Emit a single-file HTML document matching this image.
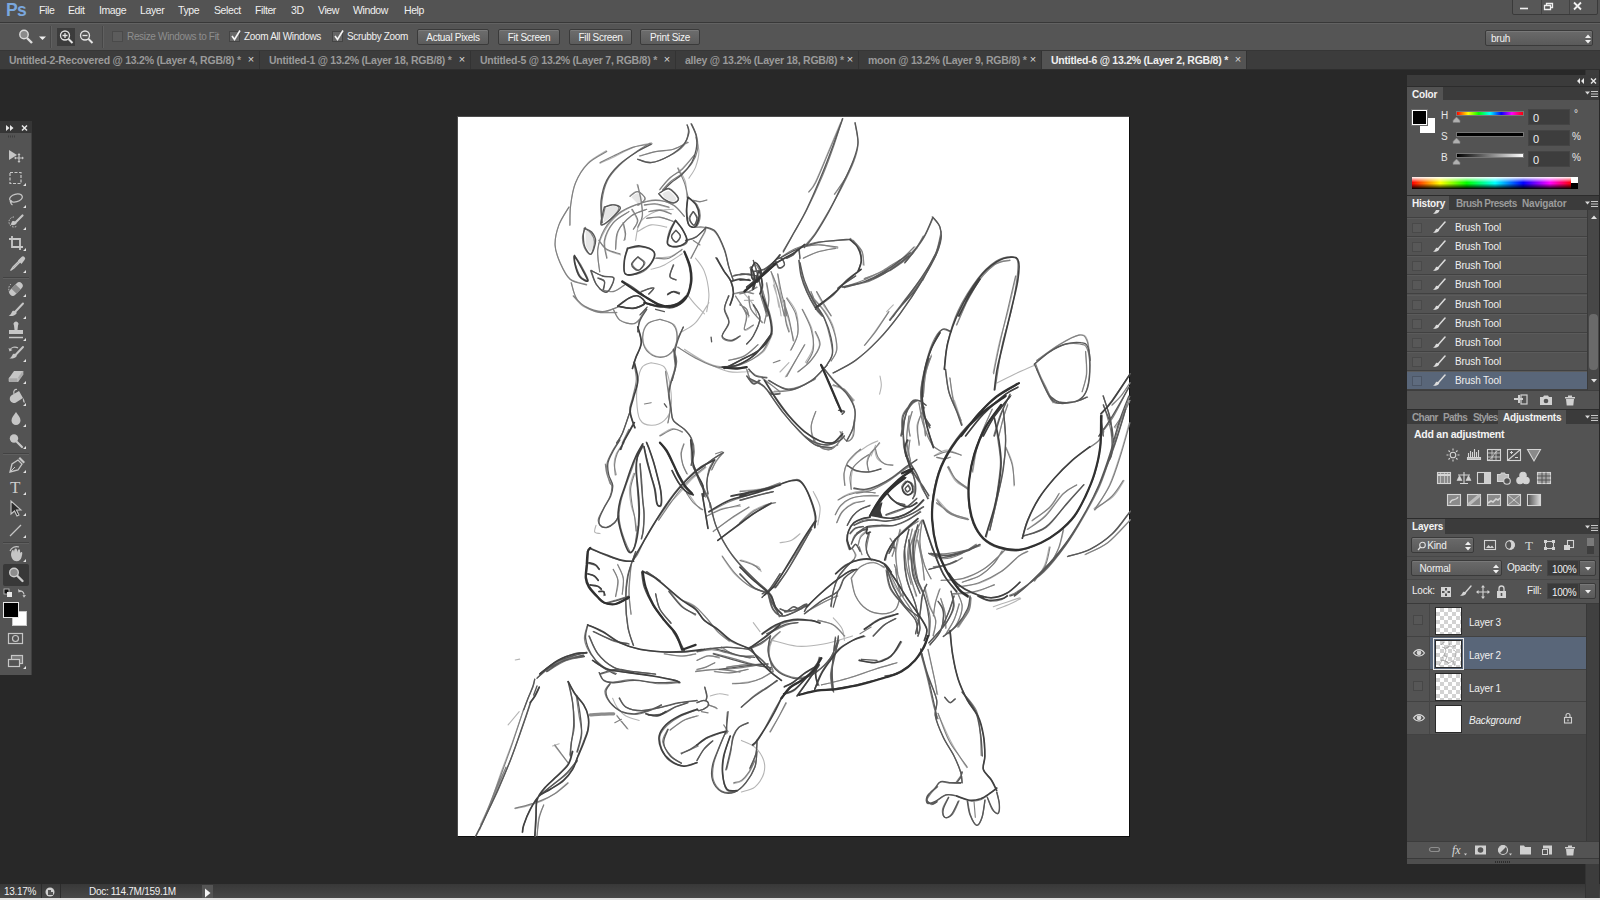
<!DOCTYPE html>
<html><head><meta charset="utf-8"><title>Ps</title>
<style>
*{box-sizing:border-box;margin:0;padding:0}
html,body{width:1600px;height:900px;overflow:hidden;background:#282828;font-family:"Liberation Sans",sans-serif;font-size:11px;color:#e6e6e6}
.a{position:absolute}
svg{position:absolute;overflow:visible}
#menubar{left:0;top:0;width:1600px;height:23px;background:#535353;border-bottom:1px solid #383838}
#menubar span{position:absolute;top:4px;font-size:10.5px;letter-spacing:-0.4px;color:#f0f0f0}
#optbar{left:0;top:23px;width:1600px;height:28px;background:#555;border-top:1px solid #626262;border-bottom:1px solid #363636}
#tabbar{left:0;top:51px;width:1600px;height:19px;background:#3c3c3c;border-bottom:1px solid #2e2e2e}
.tab{position:absolute;top:0;height:18px;font-size:10.5px;letter-spacing:-0.24px;font-weight:bold;color:#9a9a9a;padding:3px 0 0 9px;border-right:1px solid #333;white-space:nowrap}
.tab.on{background:#535353;color:#f0f0f0}
.tab i{position:absolute;right:5px;top:2px;font-style:normal;font-weight:normal;font-size:11px;color:#d8d8d8}
.btn{position:absolute;top:5px;height:16px;border:1px solid #3a3a3a;border-radius:2px;background:linear-gradient(#6d6d6d,#5c5c5c);color:#f4f4f4;font-size:10px;letter-spacing:-0.3px;text-align:center;padding-top:1.5px;box-shadow:inset 0 1px 0 #7c7c7c;white-space:nowrap}
.cb{position:absolute;top:7px;width:11px;height:11px;background:#666;border:1px solid #444}
.lbl{position:absolute;top:7px;font-size:10px;letter-spacing:-0.33px;color:#f0f0f0;white-space:nowrap}
#canvas{left:457px;top:116px;width:673px;height:721px;background:#fff;border:1px solid;border-color:#4c4c4c #0e0e0e #0e0e0e #4c4c4c}
#statusbar{left:0;top:884px;width:1600px;height:14px;background:linear-gradient(#383838,#484848)}
#botline{left:0;top:898px;width:1600px;height:2px;background:#e4e4e4}
#tools{left:0;top:121px;width:32px;height:554px;background:#535353;border-right:1px solid #404040}
#toolshead{left:0;top:0;width:32px;height:12px;background:#363636}
.sep{position:absolute;left:3px;width:26px;height:1px;background:#444;border-bottom:1px solid #5e5e5e;height:2px}
.tri{position:absolute;width:0;height:0;border-left:3px solid transparent;border-bottom:3px solid #e0e0e0}
#vsb{left:1585px;top:70px;width:14px;height:828px;background:#3c3c3c;border-left:1px solid #333}
#rp{left:1407px;top:75px;width:192px;height:789px;background:#535353;overflow:hidden}
.phead{position:absolute;left:0;width:193px;background:#3b3b3b}
.ptab{position:absolute;top:0;height:15px;font-size:10px;letter-spacing:-0.2px;font-weight:bold;color:#9c9c9c;padding:2px 0 0 5px;white-space:nowrap}
.ptab.on{background:#535353;color:#f4f4f4}
.inp{position:absolute;background:#3d3d3d;border:1px solid #444;color:#f0f0f0;font-size:11px;padding:2px 0 0 4px}
.t{position:absolute;white-space:nowrap}
.hrow{position:absolute;left:0;width:180px;height:19px;border-bottom:1px solid #414141;border-top:1px solid #5b5b5b}
.hrow b{position:absolute;left:5px;top:4px;width:10px;height:10px;border:1px solid #494949;background:#585858}
.hrow span{position:absolute;left:48px;top:3px;font-size:10px;letter-spacing:-0.1px;color:#f0f0f0}
.lrow{position:absolute;left:0;width:180px;height:33px;border-bottom:1px solid #424242}
.lrow .eye{position:absolute;left:0;top:0;width:23px;height:32px;border-right:1px solid #464646}
.lrow .th{position:absolute;left:28px;top:3px;width:26.5px;height:28px;border:1px solid #2a2a2a;background:#fff}
.lrow .chk{background-color:#fff;background-image:linear-gradient(45deg,#d2d2d2 25%,transparent 25%,transparent 75%,#d2d2d2 75%),linear-gradient(45deg,#d2d2d2 25%,transparent 25%,transparent 75%,#d2d2d2 75%);background-size:8px 8px;background-position:0 0,4px 4px}
.lrow span{position:absolute;left:62px;top:12.5px;font-size:10px;letter-spacing:-0.2px;color:#f0f0f0}
.dd{position:absolute;height:16px;border:1px solid #3a3a3a;border-radius:2px;background:linear-gradient(#6a6a6a,#5a5a5a);box-shadow:inset 0 1px 0 #787878;color:#f0f0f0;font-size:10px;letter-spacing:-0.2px;padding:2px 0 0 5px}
</style></head><body>
<div id="menubar" class="a">
<span style="left:6px;top:0px;font-size:17.5px;font-weight:bold;color:#7aa7de;letter-spacing:-0.6px">Ps</span>
<span style="left:39px">File</span><span style="left:68px">Edit</span><span style="left:99px">Image</span><span style="left:140px">Layer</span><span style="left:178px">Type</span><span style="left:214px">Select</span><span style="left:255px">Filter</span><span style="left:291px">3D</span><span style="left:318px">View</span><span style="left:353px">Window</span><span style="left:404px">Help</span>
<div class="a" style="left:1512px;top:-1px;width:86px;height:16px;background:#575757;border:1px solid #3a3a3a;border-radius:0 0 2px 2px"></div><div class="a" style="left:1541px;top:0;width:1px;height:14px;background:#424242"></div><div class="a" style="left:1569px;top:0;width:1px;height:14px;background:#424242"></div><svg style="left:1510px;top:-1.500px" width="90" height="22" viewBox="0 0 90 22"><g fill="none" stroke="#f0f0f0" stroke-width="1.6"><path d="M10 9.5h8"/><path d="M34.5 6.5h6v4h-6z M36.5 6.5v-2h6v4h-2" stroke-width="1.3"/><path d="M64 3.5l7 7M71 3.5l-7 7" stroke-width="1.8"/></g></svg>
</div>
<div id="optbar" class="a">
<svg style="left:0;top:0" width="110" height="26" viewBox="0 0 110 26"><g fill="none" stroke="#dcdcdc" stroke-width="1.4"><circle cx="24" cy="10.500" r="4.200" fill="#8a8a8a"/><path d="M27 14l5 5" stroke-width="2.400"/></g><path d="M39 12.500h7l-3.500 3.500z" fill="#f0f0f0"/><path d="M50.500 2v22" stroke="#474747"/><path d="M51.500 2v22" stroke="#606060"/><rect x="57" y="4" width="18" height="18" fill="#3c3c3c"/><g fill="none" stroke="#e4e4e4" stroke-width="1.300"><circle cx="65" cy="11.500" r="4.500"/><path d="M62.500 11.500h5M65 9v5"/><path d="M68.500 15l4 4" stroke-width="2"/><circle cx="85" cy="11.500" r="4.500"/><path d="M82.500 11.500h5"/><path d="M88.500 15l4 4" stroke-width="2"/></g><path d="M102.500 2v22" stroke="#474747"/><path d="M103.500 2v22" stroke="#606060"/></svg>
<div class="cb" style="left:112px;background:#5c5c5c;border-color:#4a4a4a"></div><div class="lbl" style="left:127px;color:#8e8e8e">Resize Windows to Fit</div>
<div class="cb" style="left:229px"></div><svg style="left:229px;top:5px" width="14" height="14"><path d="M3 7l2.500 3.500L11 1.500" fill="none" stroke="#f4f4f4" stroke-width="1.600"/></svg><div class="lbl" style="left:244px">Zoom All Windows</div>
<div class="cb" style="left:332px"></div><svg style="left:332px;top:5px" width="14" height="14"><path d="M3 7l2.500 3.500L11 1.500" fill="none" stroke="#f4f4f4" stroke-width="1.600"/></svg><div class="lbl" style="left:347px">Scrubby Zoom</div>
<div class="btn" style="left:417px;width:72px">Actual Pixels</div>
<div class="btn" style="left:498px;width:62px">Fit Screen</div>
<div class="btn" style="left:569px;width:63px">Fill Screen</div>
<div class="btn" style="left:640px;width:60px">Print Size</div>
<div class="dd" style="left:1485px;top:6px;width:108px;height:16px">bruh<svg style="left:99px;top:3px" width="6" height="10"><path d="M0 4l3-3.500L6 4zM0 6l3 3.500L6 6z" fill="#f0f0f0"/></svg></div>
</div>
<div id="tabbar" class="a">
<div class="tab" style="left:0;width:260px">Untitled-2-Recovered @ 13.2% (Layer 4, RGB/8) *<i>×</i></div>
<div class="tab" style="left:260px;width:211px">Untitled-1 @ 13.2% (Layer 18, RGB/8) *<i>×</i></div>
<div class="tab" style="left:471px;width:205px">Untitled-5 @ 13.2% (Layer 7, RGB/8) *<i>×</i></div>
<div class="tab" style="left:676px;width:183px">alley @ 13.2% (Layer 18, RGB/8) *<i>×</i></div>
<div class="tab" style="left:859px;width:183px">moon @ 13.2% (Layer 9, RGB/8) *<i>×</i></div>
<div class="tab on" style="left:1042px;width:205px">Untitled-6 @ 13.2% (Layer 2, RGB/8) *<i>×</i></div>
</div>
<div id="statusbar" class="a">
<div class="t" style="left:4px;top:2px;font-size:10px;letter-spacing:-0.3px;color:#f0f0f0">13.17%</div>
<div class="a" style="left:41px;top:0;width:1px;height:15px;background:#2c2c2c"></div>
<svg style="left:44px;top:2px" width="12" height="12"><circle cx="6" cy="6" r="4.500" fill="#d0d0d0"/><path d="M4 4h3v2h2v3H4z" fill="#555"/></svg>
<div class="a" style="left:60px;top:0;width:1px;height:15px;background:#2c2c2c"></div>
<div class="t" style="left:89px;top:2px;font-size:10px;letter-spacing:-0.3px;color:#f0f0f0">Doc: 114.7M/159.1M</div>
<div class="a" style="left:202px;top:1px;width:11px;height:14px;background:#555"></div>
<svg style="left:204px;top:4px" width="8" height="10"><path d="M1 0.500l5.500 4.500L1 9.500z" fill="#f4f4f4"/></svg>
</div>
<div id="botline" class="a"></div>
<div id="canvas" class="a"><svg style="left:0;top:0" width="671" height="719" viewBox="0 0 671 719" fill="none" stroke-linecap="round" stroke-linejoin="round" style="filter:blur(0.4px)">
<g fill="#e6e6e6" stroke="none"><path d="M147.6 91.2C148.9 90.9 153.1 88.9 155.3 89.0C157.6 89.1 161.3 90.0 160.9 91.9C160.5 93.7 155.7 97.8 153.1 100.1C150.5 102.4 146.6 104.7 145.3 105.7Z"/><path d="M127.6 113.4C128.5 113.9 131.7 114.6 133.1 116.3C134.5 118.1 136.1 120.9 136.0 123.9C135.9 126.9 134.0 133.7 132.7 134.6C131.3 135.4 128.6 129.9 127.8 129.0Z"/><path d="M204.2 76.8C205.3 76.3 208.6 73.4 210.9 74.1C213.2 74.9 217.3 79.5 218.0 81.2C218.7 83.0 216.7 84.6 214.9 84.6C213.0 84.6 208.2 81.8 206.9 81.2Z"/><path d="M173.1 80.1C174.2 79.5 177.9 76.1 179.8 76.3C181.7 76.6 184.7 79.9 184.7 81.7C184.7 83.4 180.6 85.9 179.8 86.8Z"/></g>
<g stroke="#b4b4b4" stroke-width="1.1"><path d="M111.7 108.4C111.9 105.2 111.6 95.9 112.6 88.9C113.5 81.8 114.5 73.0 117.4 65.9C120.3 58.8 124.6 51.5 129.8 46.1C134.9 40.8 145.2 35.8 148.3 33.7M111.0 90.0C109.3 93.1 103.1 102.0 100.8 108.4C98.5 114.8 96.7 122.2 97.0 128.5C97.3 134.8 100.0 140.5 102.5 146.1C105.1 151.7 107.9 158.4 112.2 161.9C116.5 165.4 125.7 166.4 128.4 167.3M113.5 165.8C114.5 168.8 115.7 178.9 119.7 183.7C123.6 188.4 130.7 192.3 137.3 194.2C143.8 196.2 155.3 195.2 158.9 195.4M142.1 46.2C144.5 45.1 150.9 42.3 156.4 39.7C161.9 37.1 169.0 32.7 175.2 30.4C181.4 28.1 190.5 26.6 193.6 25.9M181.4 38.9C184.0 38.2 191.1 35.8 196.6 34.7C202.1 33.7 208.9 34.1 214.5 32.5C220.2 31.0 227.9 26.7 230.5 25.6M201.4 72.9C203.1 71.0 207.8 65.1 211.6 61.5C215.4 57.9 220.3 55.2 224.4 51.3C228.5 47.4 234.3 40.3 236.3 38.1M220.1 50.8C221.3 53.1 225.9 59.5 227.3 64.5C228.7 69.4 228.5 77.7 228.7 80.3M237.6 20.1C238.1 22.5 240.9 29.6 240.9 34.6C240.9 39.6 239.2 45.7 237.6 50.1C235.9 54.6 232.0 59.4 230.9 61.2M235.5 83.2C236.5 83.5 239.3 84.9 241.6 84.9C243.9 84.8 247.9 83.3 249.1 83.0M171.9 79.0C173.1 78.3 176.4 74.0 179.0 74.5C181.6 74.9 187.2 79.5 187.5 81.8C187.8 84.1 181.8 87.2 180.7 88.3M141.9 154.9C141.5 151.2 139.0 139.5 139.8 132.6C140.7 125.6 143.7 118.9 147.1 113.1C150.5 107.3 155.2 101.9 160.3 97.7C165.4 93.5 171.6 90.6 177.7 88.1C183.9 85.6 191.2 82.8 197.4 82.8C203.7 82.8 210.4 85.5 215.2 88.3C220.0 91.0 224.5 97.6 226.4 99.4M149.2 141.0C148.8 138.1 145.9 129.5 147.0 123.6C148.1 117.6 151.8 110.1 155.7 105.3C159.7 100.5 168.4 96.4 170.9 94.6M157.6 132.1C158.2 128.9 158.2 118.5 160.8 113.0C163.5 107.5 168.9 102.4 173.5 98.9C178.0 95.5 185.7 93.5 188.2 92.5M177.6 123.4C178.3 120.5 178.7 110.5 182.0 105.7C185.3 100.9 192.0 96.8 197.6 94.6C203.1 92.3 212.4 92.7 215.3 92.3M186.3 88.1C188.3 88.0 193.9 87.0 198.0 87.4C202.2 87.9 209.1 90.2 211.3 90.8M191.7 94.3C193.5 94.0 199.2 92.2 202.8 92.6C206.4 93.1 211.5 96.2 213.2 96.9M188.4 101.5C190.7 101.3 197.4 99.9 201.8 100.4C206.2 100.8 212.7 103.5 214.9 104.1M179.8 114.6C182.0 113.4 188.3 108.6 193.1 107.9C197.9 107.1 206.1 109.7 208.7 110.1M164.9 105.5C165.2 107.4 166.6 114.3 167.0 117.2C167.4 120.0 167.2 121.7 167.3 122.6M179.1 67.3C179.7 69.9 181.9 77.6 182.8 82.9C183.7 88.2 185.0 94.4 184.5 99.0C184.1 103.7 180.8 108.8 180.0 110.8M173.5 92.4C174.5 94.2 178.9 100.2 179.2 103.5C179.6 106.7 176.3 110.6 175.7 112.1M141.1 123.2C142.3 124.7 144.6 130.1 148.2 132.5C151.8 135.0 160.3 137.0 162.7 137.9M193.1 152.3C195.3 151.6 201.3 150.5 206.4 147.9C211.6 145.3 221.3 138.6 224.2 136.8M198.1 140.7C200.3 140.5 207.4 141.0 211.6 139.8C215.8 138.6 221.5 134.4 223.4 133.4M166.3 168.2C164.4 169.2 159.1 173.7 155.1 174.4C151.2 175.1 144.6 172.6 142.5 172.3M237.4 110.4C239.1 110.7 246.9 109.8 247.7 112.0C248.5 114.3 244.6 119.1 242.1 124.0C239.6 128.9 234.3 138.3 232.7 141.2M237.6 141.2C239.0 143.4 244.2 148.6 246.4 154.6C248.7 160.5 250.5 170.1 250.9 176.8C251.3 183.4 249.0 191.6 248.7 194.6M228.7 176.8C230.1 178.6 234.6 184.6 237.6 187.9C240.5 191.2 245.0 195.3 246.4 196.8M274.5 177.5C276.3 177.2 281.8 175.5 285.4 175.3C288.9 175.1 294.1 176.2 295.9 176.3M277.4 179.2C278.8 181.4 283.6 189.1 285.9 192.3C288.2 195.6 290.2 197.7 291.1 198.7M302.3 176.4C302.9 178.8 305.0 186.5 306.2 190.4C307.3 194.2 308.5 197.9 309.0 199.4M313.1 154.6C313.9 157.5 316.3 166.4 317.6 172.3C318.9 178.3 320.3 187.1 320.9 190.1M286.4 176.8C287.9 178.6 293.3 184.4 295.3 187.9C297.4 191.4 298.1 196.2 298.7 197.9M382.8 5.0C380.7 9.8 374.9 23.8 370.6 33.9C366.4 43.9 360.6 58.5 357.2 65.3C353.9 72.2 351.7 73.4 350.6 75.0M397.5 38.8C396.0 42.1 392.2 52.4 388.8 58.8C385.4 65.3 378.8 74.3 376.8 77.4M342.2 130.0C345.1 129.5 353.3 126.9 359.5 127.1C365.8 127.4 376.4 130.8 379.8 131.5M345.4 141.1C347.8 140.0 354.8 136.4 360.0 134.8C365.2 133.2 373.8 131.9 376.5 131.3M395.1 123.7C396.5 125.4 401.7 129.9 403.6 134.0C405.4 138.0 405.9 145.7 406.3 148.1M352.9 174.7C353.7 176.6 356.0 182.7 357.6 186.5C359.2 190.3 361.8 195.6 362.6 197.5M358.5 174.8C359.7 177.1 363.4 185.0 365.9 188.9C368.3 192.8 372.0 196.7 373.3 198.3M304.5 172.3C305.1 175.0 307.2 183.9 308.3 188.2C309.3 192.5 310.3 196.6 310.7 198.3M313.4 155.2C314.5 158.1 318.0 165.2 320.1 172.4C322.2 179.7 325.2 194.4 326.2 198.8M315.3 167.9C316.3 170.9 319.6 180.5 320.9 185.7C322.2 190.9 322.7 196.8 323.1 199.0M281.6 176.9C283.1 176.6 287.3 175.9 290.3 174.8C293.2 173.7 297.8 171.0 299.3 170.3M281.8 187.8C282.9 188.5 287.0 189.8 288.5 191.9C290.0 194.0 290.4 198.9 290.8 200.3M286.4 183.4L295.3 183.4M406.2 161.6C409.0 160.5 417.4 157.8 422.9 155.1C428.5 152.4 433.7 149.6 439.4 145.4C445.1 141.1 454.0 132.3 456.9 129.7M483.5 114.8C482.6 118.4 481.3 128.5 478.1 136.6C474.8 144.7 466.3 159.0 464.0 163.4M428.7 194.6L435.3 187.9M465.7 119.2C463.9 122.1 458.9 132.0 454.7 136.7C450.6 141.4 444.6 144.6 440.7 147.5C436.9 150.4 433.1 152.8 431.5 153.9M459.5 130.8C457.2 132.9 450.4 140.2 445.7 143.6C441.0 147.0 433.8 149.9 431.4 151.2M558.0 159.1C556.7 164.8 553.1 182.4 550.3 193.4C547.6 204.3 544.0 214.6 541.5 225.0C539.0 235.3 536.2 250.5 535.2 255.6M498.3 207.9C501.3 201.7 509.5 180.9 515.9 170.9C522.4 160.8 531.0 151.9 537.0 147.3C543.0 142.7 549.4 143.7 551.9 143.0M491.7 260.6C492.3 264.3 493.9 275.6 495.7 282.9C497.6 290.2 501.6 300.8 502.7 304.4M473.4 237.9C472.5 240.9 469.3 248.8 467.9 255.9C466.5 263.0 465.7 276.4 465.2 280.5M463.2 285.3C463.5 288.0 464.4 295.7 465.1 301.3C465.7 306.8 466.8 315.7 467.2 318.6M454.0 294.6C453.4 296.7 450.5 303.3 450.2 307.4C449.9 311.5 451.9 317.3 452.2 319.3M540.6 320.0C541.4 317.0 543.5 307.9 545.0 302.4C546.5 296.9 548.9 289.5 549.6 286.9M545.3 296.8L547.6 319.0M578.9 243.3C582.7 240.6 594.5 231.5 601.6 227.3C608.7 223.1 616.9 218.7 621.6 217.9C626.2 217.2 627.7 218.6 629.4 222.9C631.1 227.2 631.5 240.1 631.9 243.6M578.6 251.7C580.2 254.7 585.2 264.2 587.9 269.8C590.6 275.5 593.7 283.2 594.9 285.9M627.6 234.4C627.7 238.2 628.9 250.4 628.3 257.2C627.7 263.9 624.7 271.9 624.0 274.9M538.7 266.1C541.6 264.6 550.1 260.2 556.4 257.2C562.7 254.3 573.1 249.8 576.4 248.3M653.8 288.3C655.3 286.7 659.6 282.7 662.6 279.0C665.6 275.3 670.4 268.2 671.9 266.0M657.2 311.1C658.6 308.9 663.1 302.4 665.5 297.7C667.9 293.1 670.7 285.7 671.8 283.3M115.3 178.9C117.0 180.6 120.7 186.7 125.5 189.4C130.3 192.1 138.3 195.0 144.2 195.1C150.1 195.1 158.0 190.6 160.7 189.7M154.9 191.5C156.1 193.4 158.4 200.3 161.8 202.9C165.2 205.4 171.8 207.0 175.3 206.8C178.9 206.7 181.8 202.6 183.1 201.8M202.3 202.5C204.6 203.3 213.2 204.4 216.1 207.7C218.9 210.9 219.6 217.3 219.2 221.9C218.9 226.6 216.7 232.5 213.7 235.5C210.8 238.5 205.7 240.2 201.6 239.8C197.6 239.5 192.3 236.6 189.5 233.3C186.6 230.0 184.7 224.5 184.6 220.0C184.6 215.6 186.6 209.7 189.4 206.7C192.3 203.8 199.6 203.1 201.6 202.4M193.1 245.7C195.3 246.4 203.3 246.4 206.4 250.1C209.6 253.8 210.9 261.2 212.0 267.9C213.1 274.6 214.0 284.2 213.1 290.1C212.2 296.0 209.8 300.4 206.4 303.4C203.1 306.5 197.2 308.5 193.1 308.3C189.0 308.2 184.4 306.7 182.0 302.6C179.6 298.4 179.0 290.0 178.7 283.4C178.3 276.9 178.9 269.0 179.8 263.4C180.7 257.9 182.0 253.1 184.2 250.1C186.4 247.1 191.6 246.4 193.1 245.7M207.7 253.8C208.1 256.8 209.5 265.8 210.3 271.7C211.1 277.7 212.4 283.8 212.3 289.6C212.2 295.3 210.2 303.4 209.8 306.1M201.6 318.4C203.8 317.2 210.8 312.1 214.6 311.6C218.4 311.2 223.0 314.8 224.6 315.4M282.2 373.9C285.9 373.5 298.0 372.8 304.5 371.6C311.1 370.4 318.8 367.6 321.7 366.8M219.6 230.3C222.5 231.9 230.3 236.9 236.9 240.0C243.4 243.1 251.3 247.9 258.8 249.0C266.3 250.2 274.2 249.3 281.8 247.0C289.5 244.8 299.3 240.3 304.7 235.4C310.0 230.6 312.4 220.9 313.9 217.9M224.2 214.6C226.4 213.1 233.1 210.5 237.6 205.7C242.0 200.9 248.7 189.0 250.9 185.7M226.4 232.3C230.1 234.6 241.3 242.0 248.7 245.7C256.1 249.4 263.5 253.1 270.9 254.6C278.3 256.0 289.4 254.6 293.1 254.6M281.5 185.3C282.7 187.3 287.4 193.0 288.2 197.6C289.0 202.2 285.3 211.2 286.5 213.0C287.7 214.8 293.8 209.2 295.3 208.5M288.9 252.7C289.6 254.6 291.2 262.0 293.3 264.0C295.4 266.0 300.0 264.6 301.4 264.8M304.0 260.7C305.4 261.8 309.7 264.7 312.7 267.1C315.7 269.5 320.5 273.9 322.1 275.3M290.6 179.2C291.0 181.4 290.5 187.9 292.9 192.3C295.3 196.7 303.0 203.5 305.0 205.7M353.3 178.7C355.5 181.2 362.9 188.5 366.7 193.9C370.4 199.3 373.8 204.6 375.8 211.1C377.7 217.6 378.8 227.5 378.4 233.0C378.0 238.5 374.1 242.1 373.2 244.0M319.7 157.2C320.3 160.9 321.3 172.5 323.1 179.9C324.8 187.4 328.2 194.7 330.3 202.0C332.5 209.2 335.0 219.8 335.9 223.4M329.2 180.7C330.8 183.2 336.7 189.5 338.4 195.6C340.1 201.7 340.6 211.0 339.6 217.3C338.6 223.5 333.6 230.7 332.4 233.4M326.4 183.7C326.6 187.0 327.1 198.1 328.0 203.2C328.9 208.4 331.0 212.7 331.7 214.6M344.8 192.8C346.4 196.1 352.4 206.2 354.1 212.6C355.7 219.1 355.7 226.2 354.6 231.6C353.5 237.1 348.6 243.1 347.4 245.3M357.0 214.7C357.8 217.0 362.2 223.4 361.4 228.3C360.6 233.2 355.9 239.8 352.4 244.2C348.8 248.6 342.3 252.8 340.3 254.5M347.0 227.4C345.5 230.0 341.1 237.8 337.8 243.3C334.6 248.7 329.1 257.2 327.3 260.0M308.3 166.6C308.7 169.5 310.9 178.0 310.5 184.3C310.2 190.7 307.2 201.4 306.5 204.8M330.9 245.7L322.0 255.0M270.6 243.4C273.2 242.6 281.1 241.4 286.1 238.8C291.0 236.2 297.9 229.4 300.2 227.5M316.4 274.1C319.6 273.8 329.2 274.0 336.0 272.1C342.7 270.2 353.4 264.1 356.8 262.5M430.3 195.4C428.1 198.7 420.6 209.4 416.8 214.8C412.9 220.2 408.8 225.6 407.2 227.8M374.5 268.6C376.4 269.3 381.9 270.2 385.6 272.7C389.2 275.1 394.6 281.5 396.4 283.2M358.0 294.3C357.2 296.9 353.3 304.7 353.3 309.8C353.3 314.9 355.0 321.1 358.0 325.0C360.9 328.8 367.1 333.0 371.0 332.9C375.0 332.8 379.6 327.2 381.7 324.3C383.8 321.4 383.3 316.8 383.7 315.3M382.7 315.2C383.7 316.7 387.0 323.7 388.9 324.3C390.9 324.9 393.3 322.5 394.5 318.9C395.6 315.3 395.7 305.5 395.9 302.8M422.0 259.0C422.2 260.5 423.4 264.9 423.3 267.9C423.3 270.9 421.9 275.7 421.6 277.2M466.8 290.5C465.5 293.4 459.9 302.0 459.0 308.2C458.2 314.3 461.2 324.1 461.6 327.3M451.4 298.5C450.9 302.3 449.0 314.7 448.7 321.4C448.5 328.2 449.7 336.1 449.9 339.1M397.6 336.8C399.8 335.3 407.2 330.0 410.9 327.9C414.6 325.7 418.3 324.6 419.8 323.9M413.1 339.0L417.6 328.3M548.0 329.9C549.0 332.7 553.2 340.3 554.5 346.8C555.8 353.4 555.8 365.3 556.0 369.0M534.2 292.0C532.0 297.2 524.2 312.4 520.9 322.9C517.7 333.5 515.8 350.0 514.8 355.4M569.1 412.4C572.0 410.2 580.9 404.9 586.8 399.0C592.8 393.0 599.6 381.9 604.9 376.7C610.1 371.5 616.1 369.4 618.4 368.0M574.0 404.0C576.8 401.9 586.1 395.6 590.7 391.0C595.2 386.4 599.6 378.8 601.4 376.3M460.9 285.5C461.8 289.1 463.7 300.3 466.0 307.4C468.2 314.4 471.6 323.3 474.5 327.9C477.4 332.4 482.1 333.6 483.6 334.8M496.4 283.4C497.2 285.7 499.6 292.7 500.9 296.8C502.2 300.9 503.9 306.0 504.4 307.9M476.2 338.8C478.3 337.9 484.1 333.2 488.6 333.1C493.1 333.0 500.9 337.4 503.4 338.2M489.6 350.3C491.0 352.6 494.4 360.8 497.9 364.4C501.4 368.0 508.5 370.6 510.6 371.9M478.5 386.5C481.2 388.2 489.4 394.5 494.7 396.9C499.9 399.4 507.3 400.6 509.8 401.3M483.5 463.2C487.1 462.9 498.4 463.5 505.4 461.6C512.5 459.8 519.9 455.8 525.8 452.1C531.7 448.4 537.3 442.7 540.8 439.4C544.4 436.1 546.3 433.4 547.4 432.2M498.9 470.1C502.8 469.4 514.5 468.6 521.9 466.0C529.4 463.4 537.3 458.8 543.9 454.3C550.4 449.8 557.1 442.3 561.3 438.9C565.5 435.6 567.9 434.9 569.2 434.1M494.4 477.7C498.1 477.2 509.8 476.9 516.7 475.2C523.7 473.5 533.0 468.8 536.3 467.6M671.1 306.1C669.7 311.2 665.8 326.2 662.5 336.5C659.2 346.9 655.5 358.9 651.3 368.3C647.1 377.6 639.5 388.8 637.2 392.9M666.1 363.7C664.2 366.4 659.8 375.3 654.8 379.9C649.8 384.5 639.1 389.5 636.0 391.4M672.1 402.6C668.3 406.4 657.3 419.7 649.7 425.6C642.2 431.4 630.7 435.8 626.8 437.8M605.7 413.1C604.9 416.1 603.3 425.1 601.0 430.9C598.7 436.6 593.4 444.8 591.8 447.6M591.1 429.8C590.4 432.8 589.1 442.2 586.7 447.9C584.3 453.7 578.3 461.5 576.7 464.3M631.4 330.5C632.9 329.4 638.0 326.8 640.5 324.1C642.9 321.4 645.2 316.0 646.1 314.4M432.6 421.6C433.3 423.1 436.8 427.6 437.1 430.5C437.3 433.3 434.4 437.4 433.9 438.8M454.3 411.7C453.6 415.4 450.7 426.3 450.3 433.8C449.9 441.4 450.5 449.3 451.9 456.9C453.2 464.6 457.1 475.8 458.1 479.6M460.5 412.0C459.7 416.4 455.5 428.9 455.6 438.4C455.7 447.9 460.3 463.9 461.2 469.0M436.4 447.5C437.5 450.9 441.8 462.4 443.3 467.7C444.8 473.1 444.9 477.7 445.2 479.7M430.6 456.7C431.7 458.9 434.9 466.2 437.3 470.0C439.6 473.8 443.5 477.8 444.7 479.3M173.2 448.1C172.9 452.5 171.3 466.3 171.2 474.5C171.2 482.7 172.7 493.4 173.0 497.2M248.7 399.1C251.3 397.8 258.7 393.2 264.3 391.6C270.0 389.9 279.5 389.6 282.6 389.3M255.1 414.3C258.2 412.2 267.3 405.6 273.3 401.6C279.3 397.6 288.1 392.1 291.1 390.2M283.2 442.9C285.3 443.6 292.8 445.9 295.7 447.5C298.7 449.2 300.2 452.0 301.1 452.9M264.3 439.8C266.5 442.8 272.5 452.7 277.3 457.7C282.1 462.7 288.5 467.1 293.3 469.9C298.1 472.7 304.1 473.6 306.3 474.4M322.3 514.8C320.9 516.4 315.8 520.3 313.9 524.1C312.1 527.9 311.1 532.6 311.2 537.6C311.4 542.7 314.4 551.7 315.1 554.5M155.1 452.5C156.0 454.4 159.9 459.6 160.3 464.1C160.8 468.6 158.1 477.1 157.7 479.6M159.6 447.2C160.5 449.5 164.4 456.1 165.2 461.1C166.0 466.2 164.5 474.6 164.3 477.3M223.8 483.0C225.9 484.0 232.6 485.9 236.7 488.9C240.8 491.9 244.6 496.8 248.6 501.3C252.5 505.7 256.5 511.8 260.4 515.7C264.3 519.7 270.1 523.2 272.0 524.7M206.0 536.9C209.0 537.3 218.4 539.1 223.7 539.1C229.0 539.2 235.5 537.5 237.9 537.1M238.0 553.9C241.7 553.6 253.1 552.1 260.4 552.2C267.7 552.4 278.3 554.6 281.9 555.1M268.9 550.3C271.7 549.9 279.7 548.2 286.1 547.8C292.6 547.3 303.9 547.6 307.5 547.6M286.7 376.6C289.8 375.9 299.3 374.0 305.1 372.5C311.0 370.9 319.0 368.1 321.7 367.2M281.6 405.7C283.7 403.7 290.0 397.0 294.4 394.0C298.9 390.9 304.4 388.8 308.2 387.4C312.0 386.0 315.8 385.8 317.4 385.5M322.0 425.7C323.9 425.3 329.8 424.9 333.1 423.4C336.4 422.0 340.5 417.9 342.0 416.8M355.3 374.6C356.4 377.1 361.3 384.6 362.0 390.1C362.7 395.7 360.1 404.9 359.8 407.9M295.3 447.9C296.3 448.3 299.6 449.0 300.9 450.1C302.2 451.2 302.7 453.8 303.1 454.6M349.2 494.5C352.2 492.9 361.9 487.5 366.9 484.8C371.8 482.1 376.9 479.4 378.9 478.3M360.0 503.1C362.4 503.8 370.4 505.0 374.9 507.6C379.4 510.2 384.9 517.0 386.9 518.9M295.3 505.7L302.0 514.6M355.7 322.8C357.6 324.2 362.8 330.4 366.9 331.2C370.9 332.1 377.8 328.4 379.9 327.8M464.3 403.0C463.9 406.7 461.2 417.8 461.6 425.3C462.0 432.8 464.6 441.9 466.5 448.1C468.4 454.2 471.9 459.6 473.0 461.9M437.4 452.1C438.1 455.7 439.2 467.4 441.7 473.9C444.2 480.5 449.4 486.5 452.5 491.6C455.6 496.6 459.0 502.1 460.3 504.2M467.1 470.1C468.0 473.2 470.3 483.4 472.1 489.0C473.9 494.6 477.5 498.6 477.9 503.5C478.3 508.5 475.3 516.0 474.8 518.5M442.8 413.1C442.0 416.9 438.6 428.8 438.1 436.0C437.6 443.2 439.5 453.1 439.8 456.5M393.6 460.8C394.3 463.9 395.2 473.7 397.7 479.0C400.2 484.2 404.4 489.3 408.7 492.3C413.0 495.2 418.9 496.6 423.7 496.7C428.5 496.7 434.6 495.4 437.7 492.4C440.8 489.5 441.6 481.3 442.4 479.1M393.5 461.1C395.1 459.1 399.3 452.0 403.0 449.3C406.7 446.7 411.8 445.0 415.6 445.2C419.5 445.5 424.4 449.9 426.1 450.9M65.5 592.4C63.6 598.0 57.8 615.3 54.0 626.1C50.1 636.9 45.9 647.3 42.4 657.1C38.9 666.9 36.4 675.8 33.0 685.1C29.6 694.4 23.6 708.2 21.8 712.8M48.1 650.5C45.9 655.7 39.2 672.1 34.9 681.6C30.6 691.1 24.4 703.3 22.3 707.6M50.1 607.9L61.2 594.6M57.2 543.0L61.7 542.1M96.8 628.9C98.0 630.4 101.5 634.9 103.6 637.6C105.8 640.2 108.5 643.6 109.5 644.8M94.6 629.0L101.2 626.8M57.1 691.7C59.3 691.2 66.0 689.9 70.5 688.6C75.0 687.3 79.6 685.9 84.0 683.9C88.3 681.9 92.2 679.8 96.5 676.8C100.9 673.7 107.7 667.4 109.9 665.5M85.7 688.2C84.9 690.3 81.8 696.1 80.7 701.2C79.6 706.2 79.4 715.5 79.1 718.3M158.9 598.2C159.6 599.2 161.6 602.3 163.4 604.6C165.3 607.0 168.9 611.0 170.0 612.2M240.4 598.6C237.8 599.4 229.9 601.2 225.2 603.6C220.5 606.1 214.3 611.7 212.1 613.3M154.6 581.2C155.3 582.7 156.8 587.1 159.0 590.1C161.2 593.1 164.2 596.8 167.9 599.0C171.6 601.2 179.0 602.7 181.2 603.4M314.6 523.4C318.6 524.4 330.5 528.6 339.0 529.2C347.5 529.8 356.4 528.7 365.7 527.0C374.9 525.3 389.7 520.3 394.6 519.0M256.1 554.1C258.6 554.4 265.6 555.8 271.3 555.6C277.0 555.3 287.1 553.0 290.3 552.5M274.4 566.4C277.0 566.2 284.9 566.0 289.7 565.1C294.5 564.3 299.3 563.1 303.4 561.4C307.6 559.7 312.7 555.9 314.6 554.8M238.9 543.4C240.8 542.6 246.6 539.0 250.3 538.6C254.1 538.3 259.6 540.7 261.4 541.2M239.1 552.6C240.4 552.3 244.3 551.7 247.2 550.5C250.2 549.3 255.2 546.5 256.8 545.7M262.5 530.7C264.4 531.8 268.8 535.9 274.0 537.4C279.1 539.0 290.1 539.6 293.3 540.0M252.3 579.0C253.8 578.6 258.3 576.9 261.2 576.8C264.2 576.6 268.6 577.9 270.1 578.1M250.1 587.6C251.2 588.1 255.3 589.7 256.8 590.4C258.2 591.1 258.5 591.5 258.9 591.8M363.5 567.9C368.0 566.8 381.3 563.8 390.2 561.2C399.0 558.6 408.4 555.1 416.5 552.5C424.5 549.9 434.9 546.8 438.6 545.7M328.5 586.1C327.2 588.2 323.9 594.2 321.2 599.0C318.4 603.8 313.3 612.2 311.7 614.8M275.7 666.6C277.0 666.2 281.1 666.1 283.8 664.1C286.5 662.1 289.6 658.2 291.8 654.7C294.0 651.2 296.0 645.1 296.8 643.1M283.4 623.4C285.7 624.6 293.1 626.8 296.8 630.1C300.5 633.4 304.2 639.0 305.7 643.4C307.1 647.9 307.1 652.3 305.7 656.8C304.2 661.2 300.5 667.1 296.8 670.1C293.1 673.1 285.7 674.2 283.4 675.0M469.8 532.6C470.9 537.7 475.1 555.9 476.8 563.4C478.4 570.9 479.2 575.2 479.7 577.6M480.0 596.4C481.9 600.7 488.0 614.8 491.6 621.9C495.2 629.1 498.6 634.6 501.5 639.4C504.3 644.2 507.6 648.7 508.8 650.6M501.1 486.5C500.3 489.0 498.7 496.7 496.5 501.8C494.2 506.9 489.2 514.7 487.8 517.2M482.8 481.3C483.4 483.5 486.0 489.7 486.9 494.7C487.7 499.7 487.5 508.7 487.6 511.4M538.7 492.3C540.9 491.4 548.0 488.8 552.0 487.0C556.0 485.2 560.9 482.6 562.7 481.7M499.6 476.4C500.4 478.5 504.1 484.4 504.1 489.3C504.0 494.2 501.5 501.3 499.3 505.9C497.2 510.4 492.5 514.6 491.1 516.4M512.3 480.5C511.9 482.8 511.7 489.1 509.8 494.0C507.9 498.9 502.4 507.2 500.9 509.9M481.0 473.1C480.4 475.2 478.2 481.4 477.3 485.4C476.5 489.5 476.1 495.5 475.9 497.5M375.3 500.8C376.8 502.6 382.4 508.1 384.2 511.9C386.1 515.7 386.1 521.5 386.4 523.4M475.4 449.8C477.9 449.5 485.9 449.0 490.7 447.5C495.5 446.1 502.0 442.1 504.3 441.1M504.6 465.2C507.5 464.1 517.2 461.6 522.3 458.6C527.4 455.6 531.5 451.3 535.1 447.2C538.7 443.1 542.3 436.3 543.8 434.1M535.3 489.7C537.6 488.9 544.2 486.7 548.7 485.2C553.1 483.7 559.8 481.5 562.0 480.8M446.3 429.6C446.6 433.0 446.7 444.1 448.1 450.3C449.4 456.5 453.3 464.0 454.3 466.8M459.5 423.0C460.3 426.7 463.0 438.4 464.1 445.1C465.2 451.8 465.8 460.3 466.2 463.3M165.4 326.2C164.2 328.0 159.9 333.3 158.3 336.8C156.8 340.3 156.1 343.7 156.1 347.2C156.1 350.7 158.1 356.1 158.5 357.8M147.9 348.1C148.2 349.7 149.1 354.5 149.7 357.6C150.4 360.6 151.4 365.0 151.7 366.5M138.0 408.3C137.8 409.4 136.0 413.6 136.7 415.0C137.3 416.4 141.1 416.3 142.0 416.6M175.7 356.2C175.0 358.7 172.0 366.1 171.5 371.3C171.1 376.5 172.2 382.5 173.0 387.4C173.9 392.2 175.8 396.2 176.8 400.5C177.8 404.9 178.7 411.4 179.1 413.5M248.0 350.3C245.6 352.4 237.9 358.2 233.4 362.5C229.0 366.9 225.3 372.0 221.2 376.4C217.2 380.9 212.7 384.8 209.2 389.2C205.6 393.5 201.6 400.2 200.0 402.4M265.8 335.2C264.6 336.6 261.0 340.6 258.9 343.6C256.8 346.7 254.2 351.8 253.2 353.4M225.7 326.8C225.2 328.3 223.1 332.2 222.9 335.5C222.7 338.9 223.5 343.2 224.6 346.8C225.7 350.5 228.9 355.6 229.7 357.3M229.7 375.4C230.8 377.1 234.4 382.5 236.4 385.1C238.4 387.8 240.0 390.2 241.4 391.4C242.8 392.7 244.0 392.6 244.6 392.8M387.2 368.5C387.0 366.5 385.8 360.2 386.2 356.5C386.6 352.8 387.7 349.3 389.4 346.2C391.2 343.2 394.6 340.6 396.7 338.2C398.9 335.8 401.4 333.1 402.3 332.1M393.1 372.2C393.1 370.2 393.1 363.9 393.4 360.4C393.8 356.8 393.8 353.6 395.4 350.7C397.0 347.7 400.7 345.0 403.1 342.9C405.5 340.8 408.8 339.0 410.0 338.2M410.0 352.6C409.8 351.2 408.7 346.8 408.9 344.2C409.2 341.6 410.1 339.3 411.5 337.1C413.0 334.9 415.8 332.8 417.5 331.0C419.3 329.2 421.1 327.0 421.8 326.2M416.6 331.3C417.0 332.9 417.2 338.5 419.0 341.1C420.8 343.7 424.7 345.9 427.4 347.0C430.1 348.1 433.8 347.7 435.1 347.8M397.6 375.6C399.7 375.1 405.8 374.6 410.7 372.9C415.6 371.1 422.1 367.8 427.0 365.0C431.9 362.2 436.0 358.5 440.3 355.8C444.7 353.1 451.1 350.0 453.3 348.9M380.5 382.5C382.3 381.5 387.4 378.0 391.4 376.6C395.4 375.2 400.4 374.2 404.6 374.1C408.9 374.0 414.9 375.7 416.9 376.1M377.2 397.7C378.1 396.3 380.3 391.7 382.7 389.2C385.1 386.6 387.7 384.0 391.4 382.3C395.1 380.6 400.2 379.4 405.1 378.8C409.9 378.1 418.0 378.5 420.6 378.5M378.9 405.6C379.9 403.7 382.3 397.5 385.0 394.2C387.7 391.0 391.6 387.7 395.1 386.0C398.6 384.4 404.1 384.7 405.9 384.5M451.7 323.4C451.5 325.3 450.5 330.9 450.6 334.3C450.7 337.7 452.1 342.2 452.4 343.8M400.3 428.2C400.7 426.7 401.3 421.4 402.5 419.1C403.7 416.9 406.7 415.3 407.6 414.5M463.3 403.5C462.1 405.7 457.9 412.7 456.0 417.1C454.1 421.5 452.7 425.8 452.1 429.9C451.4 434.1 451.9 440.1 451.9 442.1M457.4 413.6C456.8 415.9 454.5 422.8 454.2 427.3C453.9 431.9 455.4 438.5 455.6 440.7M443.8 416.6C445.2 415.5 449.0 412.0 451.9 409.9C454.7 407.8 459.4 404.9 460.9 403.9M478.4 340.4C479.7 340.7 483.7 342.3 486.0 342.3C488.4 342.2 491.6 340.5 492.7 340.1M490.3 349.3C491.4 351.3 493.5 357.8 496.7 361.3C499.8 364.9 507.3 369.0 509.4 370.6M479.1 381.8C481.0 383.8 486.8 391.0 490.4 393.9C494.0 396.9 497.4 397.8 500.6 399.3C503.9 400.8 508.3 402.4 509.9 403.0M395.0 432.4C395.5 433.4 398.1 436.4 398.2 438.1C398.3 439.8 396.0 441.8 395.6 442.5"/></g>
<g stroke="#808080" stroke-width="1.15"><path d="M112.0 107.9C112.1 104.6 111.7 94.9 112.7 87.9C113.6 80.9 114.7 72.5 117.6 65.7C120.4 58.8 124.6 52.0 129.8 46.8C135.0 41.6 145.5 36.6 148.7 34.6M110.9 90.1C109.2 93.1 103.2 101.6 100.9 107.9C98.6 114.2 96.9 121.6 97.1 127.9C97.3 134.2 99.5 139.9 102.0 145.7C104.5 151.4 107.6 158.6 112.0 162.3C116.4 166.0 125.9 167.0 128.7 167.9M113.1 165.7C114.2 168.6 115.7 178.6 119.8 183.4C123.9 188.3 131.1 192.5 137.6 194.6C144.0 196.6 155.1 195.5 158.7 195.7M142.0 45.7C144.2 44.6 149.8 41.6 155.3 39.0C160.9 36.4 168.9 32.1 175.3 30.1C181.8 28.1 191.1 27.3 194.2 26.8M144.3 105.8C144.2 102.2 143.0 91.6 143.9 84.5C144.8 77.5 146.6 69.6 149.5 63.6C152.4 57.6 156.5 53.3 161.2 48.6C165.9 43.8 172.5 38.9 177.7 35.2C182.8 31.4 189.7 27.7 192.1 26.3M179.7 42.3C182.0 42.8 188.2 45.9 193.4 45.4C198.6 44.9 205.3 42.2 210.7 39.3C216.2 36.5 222.6 32.3 225.9 28.3C229.1 24.3 229.8 18.6 230.3 15.2C230.9 11.9 229.4 9.2 229.2 8.0M233.7 7.0C234.6 9.2 237.9 15.5 238.8 19.8C239.8 24.2 240.2 28.9 239.4 33.3C238.6 37.7 236.6 42.3 234.0 46.2C231.4 50.1 227.2 53.8 223.6 56.9C220.0 60.0 215.5 62.1 212.4 64.8C209.2 67.5 205.8 71.6 204.5 72.9M182.0 39.0C184.6 38.3 192.0 35.7 197.6 34.6C203.1 33.4 210.0 33.9 215.3 32.3C220.7 30.8 227.4 26.4 229.8 25.2M202.0 72.3C203.7 70.4 208.3 64.1 212.0 60.8C215.7 57.4 220.1 56.1 224.2 52.3C228.3 48.5 234.4 40.3 236.4 37.9M219.8 51.2C220.9 53.6 224.8 61.0 226.4 65.7C228.1 70.3 229.2 76.8 229.8 79.0M235.3 83.4C236.4 83.6 239.8 84.6 242.0 84.6C244.2 84.5 247.6 83.3 248.7 83.0M146.3 90.1C147.6 89.7 151.8 87.3 154.2 87.5C156.7 87.6 161.1 88.8 160.9 91.2C160.7 93.6 155.7 99.1 152.8 101.9C150.0 104.7 145.1 108.6 143.9 107.8C142.7 107.1 145.1 100.1 145.7 97.1C146.2 94.2 147.1 91.2 147.3 90.0M126.2 111.3C127.3 112.0 131.1 113.5 132.8 115.8C134.5 118.0 136.4 121.2 136.4 124.8C136.4 128.3 134.4 136.3 132.7 137.3C131.0 138.2 127.5 133.3 126.2 130.3C124.8 127.3 124.3 122.7 124.5 119.4C124.8 116.0 127.1 111.9 127.6 110.4M116.6 138.5C117.8 140.4 121.5 145.4 123.8 149.5C126.1 153.7 130.5 161.7 130.3 163.3C130.0 164.9 124.5 161.9 122.3 159.1C120.1 156.3 118.2 149.7 117.1 146.5C116.0 143.2 115.8 140.8 115.6 139.6M133.2 153.6C135.2 154.6 141.3 158.0 145.1 159.3C148.9 160.5 155.3 158.4 156.0 161.0C156.6 163.7 152.0 174.1 149.1 175.1C146.1 176.2 141.2 171.1 138.4 167.5C135.7 164.0 133.5 156.0 132.5 153.7M139.7 160.9C140.8 161.4 145.4 162.0 146.4 163.9C147.3 165.9 145.7 171.2 145.6 172.6M202.2 75.5C203.7 74.8 208.1 70.5 211.1 71.4C214.2 72.3 219.7 78.5 220.5 80.9C221.3 83.2 218.1 85.3 215.8 85.6C213.4 85.9 208.9 84.2 206.3 82.7C203.8 81.2 201.4 77.6 200.5 76.6M172.0 79.4C173.3 78.6 177.3 74.2 179.8 74.6C182.3 74.9 186.9 79.4 186.9 81.7C186.9 84.0 181.0 87.2 179.8 88.3M230.3 80.2C231.8 81.5 237.1 84.7 239.1 87.9C241.1 91.1 242.4 95.7 242.2 99.3C242.1 103.0 240.3 108.4 238.3 109.8C236.4 111.2 232.3 110.2 230.6 107.7C228.9 105.2 228.4 99.3 228.3 94.7C228.2 90.1 229.7 82.4 230.0 80.0M235.7 94.7C236.4 95.8 239.7 99.3 239.8 101.5C239.9 103.8 237.9 108.3 236.5 108.3C235.0 108.3 231.3 103.9 231.0 101.6C230.7 99.3 234.2 95.8 234.8 94.7M217.8 103.9C219.0 105.5 223.0 109.8 224.9 113.2C226.8 116.7 230.2 121.9 229.4 124.6C228.6 127.4 223.5 129.1 220.2 129.6C216.9 130.1 211.2 130.0 209.7 127.5C208.2 124.9 210.0 118.2 211.3 114.2C212.6 110.1 216.3 105.2 217.2 103.4M218.6 114.0C219.2 114.9 222.5 117.7 222.5 119.5C222.4 121.4 219.6 125.3 218.1 125.3C216.6 125.3 213.5 121.4 213.4 119.4C213.3 117.4 216.9 114.3 217.6 113.3M170.2 131.7C172.3 131.4 178.4 129.3 182.8 129.9C187.1 130.5 194.4 132.4 196.2 135.2C197.9 138.1 195.4 143.5 193.1 146.9C190.8 150.4 186.8 154.3 182.5 155.9C178.2 157.6 170.0 158.9 167.3 156.8C164.7 154.6 166.2 147.3 166.5 143.0C166.8 138.7 168.7 133.0 169.2 131.0M180.1 139.7C181.2 140.7 186.9 143.6 187.0 145.8C187.1 148.1 182.7 152.8 180.6 153.0C178.5 153.3 174.6 149.4 174.5 147.2C174.3 145.1 178.7 141.3 179.5 140.1M209.4 178.0C210.4 177.4 213.4 174.9 215.4 174.5C217.5 174.1 220.6 175.4 221.6 175.6M215.8 148.0C215.1 149.8 211.3 156.8 211.7 159.3C212.1 161.8 217.0 162.3 218.0 162.9M183.2 174.4C184.2 174.0 187.0 172.9 189.1 172.2C191.2 171.6 195.7 169.8 196.0 170.7C196.2 171.5 191.6 176.2 190.7 177.3M159.6 188.8C161.5 187.5 167.7 182.6 171.0 180.9C174.4 179.3 177.1 178.0 179.8 178.8C182.5 179.7 187.9 184.1 187.2 186.2C186.5 188.3 180.2 190.8 175.6 191.3C171.1 191.8 162.4 189.4 159.7 189.0M141.6 154.6C141.3 150.9 139.0 139.4 139.8 132.3C140.6 125.3 143.0 118.3 146.4 112.3C149.9 106.4 155.0 100.9 160.2 96.8C165.4 92.7 171.3 90.1 177.6 87.9C183.8 85.7 191.3 83.4 197.6 83.4C203.9 83.4 210.5 85.2 215.3 87.9C220.1 90.6 224.6 97.5 226.4 99.4M148.7 141.2C148.3 138.3 145.3 129.4 146.4 123.4C147.6 117.5 151.3 110.5 155.3 105.7C159.4 100.9 168.3 96.4 170.9 94.6M157.6 132.3C157.9 129.4 157.2 120.1 159.8 114.6C162.4 109.0 168.3 102.7 173.1 99.0C177.9 95.3 186.1 93.4 188.7 92.3M186.4 87.9C188.3 87.7 193.5 86.4 197.6 86.8C201.6 87.1 208.7 89.6 210.9 90.1M190.9 94.6C192.7 94.4 198.3 93.1 202.0 93.4C205.7 93.8 211.3 96.2 213.1 96.8M188.7 101.2C190.9 101.0 197.6 99.6 202.0 100.1C206.4 100.7 213.1 103.8 215.3 104.6M165.3 105.7C165.7 107.5 167.4 113.8 167.6 116.8C167.7 119.7 166.3 122.3 166.0 123.4M179.8 67.9C180.3 70.5 182.4 78.3 183.1 83.4C183.9 88.6 184.8 94.6 184.2 99.0C183.7 103.4 180.5 108.3 179.8 110.1M174.2 92.3C175.1 94.2 179.6 100.1 179.8 103.4C180.0 106.8 176.1 110.9 175.3 112.3M140.9 123.4C142.2 124.9 145.1 130.1 148.7 132.3C152.2 134.6 159.8 136.0 162.0 136.8M197.6 141.2C199.8 141.2 206.4 142.7 210.9 141.2C215.3 139.7 222.0 133.8 224.2 132.3M166.4 167.9C164.6 169.0 159.4 173.8 155.3 174.6C151.3 175.3 144.2 172.7 142.0 172.3M237.6 110.1C239.2 110.3 246.8 109.0 247.6 111.2C248.3 113.4 244.4 118.4 242.0 123.4C239.6 128.4 234.6 138.3 233.1 141.2M247.0 110.4C248.7 111.2 254.3 111.8 257.5 115.5C260.7 119.2 264.0 127.0 266.2 132.7C268.4 138.4 269.2 144.7 270.7 149.7C272.2 154.8 274.4 160.6 275.1 162.8M227.7 123.6C229.4 123.1 234.2 122.6 237.5 120.5C240.9 118.3 246.1 112.3 247.8 110.7M235.3 123.4L242.0 127.9M257.7 140.6C259.1 142.8 263.4 150.3 265.8 154.1C268.2 157.9 270.7 159.8 272.3 163.5C273.9 167.3 275.5 172.4 275.5 176.5C275.5 180.6 272.9 186.2 272.3 188.1M272.7 164.5C274.2 164.1 278.3 162.1 281.5 161.9C284.8 161.7 290.4 163.0 292.2 163.2M276.0 158.2C277.5 158.0 281.7 157.0 284.5 157.0C287.4 157.0 291.5 157.9 292.9 158.1M291.9 150.6C292.5 152.2 295.1 156.3 295.5 160.1C295.9 163.9 293.6 174.2 294.4 173.4C295.3 172.5 299.0 155.9 300.7 154.9C302.4 153.9 304.3 163.7 304.8 167.1C305.2 170.6 303.8 174.2 303.6 175.6M288.8 169.9C290.7 168.4 296.3 164.4 300.4 160.7C304.5 157.1 309.9 151.7 313.4 148.0C316.9 144.4 320.2 140.3 321.5 138.8M295.3 154.2C297.2 153.8 302.8 153.5 306.5 151.8C310.2 150.1 315.7 145.2 317.5 143.8M275.3 176.8C277.2 176.4 283.1 174.6 286.4 174.6C289.8 174.6 293.9 176.4 295.3 176.8M277.6 179.0C279.0 181.2 284.2 189.0 286.4 192.3C288.7 195.7 290.1 197.9 290.9 199.0M302.0 176.8C302.7 179.0 305.3 186.4 306.4 190.1C307.6 193.8 308.3 197.5 308.7 199.0M384.4 1.5C383.0 6.1 379.0 19.4 375.8 28.8C372.5 38.3 369.3 47.3 364.8 58.0C360.3 68.8 353.5 83.5 348.6 93.3C343.7 103.1 339.2 110.1 335.3 116.9C331.4 123.7 326.8 131.2 325.1 134.0M383.1 5.7C381.1 10.5 375.1 24.6 370.9 34.6C366.6 44.6 360.9 58.9 357.6 65.7C354.2 72.4 352.0 73.4 350.9 75.0M397.0 6.1C397.5 9.6 400.2 20.6 400.0 26.9C399.8 33.3 398.5 37.3 395.9 44.2C393.3 51.2 388.8 60.4 384.6 68.7C380.4 77.1 375.1 86.4 370.5 94.3C365.9 102.2 361.2 110.4 357.2 116.3C353.1 122.1 348.0 127.2 346.1 129.4M397.6 39.0C396.1 42.3 392.2 52.6 388.7 59.0C385.1 65.4 378.5 74.2 376.4 77.2M321.7 141.1C324.2 139.6 331.1 134.4 337.0 131.8C342.9 129.2 350.4 126.9 357.2 125.5C364.0 124.2 372.1 124.1 377.8 123.6C383.6 123.1 389.4 122.9 391.7 122.7M342.0 130.6C345.0 130.1 353.5 128.0 359.8 127.9C366.1 127.8 376.4 129.7 379.8 130.1M345.3 141.2C347.7 140.2 354.4 136.6 359.8 135.0C365.1 133.4 374.6 132.0 377.6 131.4M392.3 121.4C393.7 122.8 398.7 126.0 400.6 129.6C402.4 133.3 403.5 138.8 403.3 143.1C403.1 147.4 399.8 153.6 399.2 155.7M395.3 123.4C396.8 125.3 402.6 130.5 404.2 134.6C405.9 138.6 405.1 145.7 405.3 147.9M402.7 152.6C400.3 154.4 392.6 159.2 388.1 163.4C383.6 167.6 380.9 173.1 375.8 177.7C370.8 182.3 360.9 188.8 357.9 191.0M397.7 158.9C395.4 160.3 387.4 165.2 384.4 167.3C381.4 169.5 380.5 170.9 379.8 171.7M341.1 143.4C341.6 145.9 342.7 153.1 344.0 158.3C345.3 163.4 346.6 169.0 348.7 174.4C350.9 179.9 354.4 186.8 357.0 190.9C359.6 195.1 363.0 198.0 364.2 199.4M353.1 174.6C353.9 176.5 356.0 182.3 357.6 186.1C359.1 189.9 361.6 195.4 362.4 197.2M358.7 174.6C360.0 176.8 364.0 183.8 366.4 187.9C368.9 192.0 372.0 197.1 373.1 199.0M316.5 147.1C318.4 146.1 324.5 142.8 327.8 140.8C331.0 138.9 333.3 137.8 336.3 135.6C339.3 133.5 344.2 129.3 345.8 128.0M317.6 144.1C318.1 145.3 319.2 150.6 320.7 151.3C322.2 152.0 326.0 150.0 326.4 148.2C326.9 146.5 324.6 141.8 323.3 140.8C322.1 139.7 319.7 141.5 318.9 141.7M328.6 141.2C329.9 140.5 334.0 138.6 336.1 136.9C338.2 135.2 340.1 130.2 341.0 131.1C341.9 131.9 341.6 140.3 341.7 142.2M293.0 152.7C293.6 151.8 295.2 146.4 296.8 147.0C298.4 147.6 301.9 153.1 302.5 156.1C303.0 159.1 301.4 164.0 300.0 164.9C298.6 165.8 295.2 163.6 294.1 161.4C293.1 159.2 293.7 153.2 293.6 151.5M295.4 143.6C296.2 146.0 298.4 152.6 299.8 158.2C301.3 163.8 302.6 170.9 304.1 177.1C305.7 183.4 308.2 192.9 309.0 196.0M304.2 172.3C305.0 174.9 307.7 183.4 308.7 187.9C309.6 192.3 309.6 197.1 309.8 199.0M282.7 156.7C284.0 156.7 288.4 156.4 290.9 157.0C293.4 157.6 296.6 159.6 297.7 160.2M313.1 154.6C314.2 157.5 317.6 164.9 319.8 172.3C322.0 179.7 325.3 194.6 326.4 199.0M326.4 183.4L328.7 199.0M282.0 176.8C283.5 176.4 288.1 175.7 290.9 174.6C293.7 173.4 297.4 170.9 298.7 170.1M282.0 187.9C283.1 188.6 287.2 190.5 288.7 192.3C290.1 194.2 290.5 197.9 290.9 199.0M386.1 170.0C389.3 168.8 398.9 166.0 405.4 163.2C411.9 160.5 419.1 156.7 425.1 153.4C431.1 150.0 436.7 145.9 441.4 143.2C446.1 140.5 451.3 138.3 453.3 137.3M406.4 161.7C409.4 160.5 418.7 157.2 424.2 154.6C429.8 151.9 434.5 149.7 439.8 145.7C445.0 141.6 453.1 132.7 455.8 130.1M475.1 100.8C473.7 103.9 469.8 113.8 466.5 119.6C463.3 125.3 458.9 130.9 455.6 135.3C452.3 139.7 448.3 144.2 446.8 146.0M474.2 99.8C475.5 101.5 480.5 105.8 481.8 110.0C483.1 114.3 483.5 119.0 481.9 125.2C480.3 131.4 476.4 139.5 472.2 147.2C468.0 155.0 461.7 164.8 456.6 171.9C451.5 179.0 445.3 185.2 441.7 189.8C438.2 194.5 436.3 198.0 435.3 199.6M483.1 114.6C482.2 118.3 480.6 128.6 477.6 136.8C474.5 144.9 466.8 159.0 464.7 163.4M500.8 199.3C502.7 195.9 508.6 185.4 512.0 179.3C515.4 173.2 519.8 165.6 521.3 162.8M483.5 118.9C482.6 122.1 481.5 131.1 478.1 138.1C474.7 145.2 468.8 153.5 463.3 161.4C457.7 169.2 450.3 178.3 445.0 185.2C439.7 192.1 433.7 199.9 431.4 202.8M465.3 119.0C463.5 122.0 458.3 132.0 454.2 136.8C450.1 141.6 444.6 145.1 440.9 147.9C437.2 150.7 433.5 152.7 432.0 153.7M458.7 130.1C456.4 132.3 449.8 139.9 445.3 143.4C440.9 147.0 434.2 150.1 432.0 151.4M486.1 252.1C486.7 247.6 487.4 235.0 489.7 225.3C492.0 215.7 494.8 204.9 499.8 194.2C504.8 183.6 513.6 169.7 519.9 161.4C526.1 153.1 532.0 148.0 537.4 144.4C542.8 140.8 548.5 139.8 552.2 139.8C555.9 139.7 558.6 140.1 559.6 144.1C560.7 148.1 559.6 155.6 558.7 163.6C557.7 171.5 556.1 181.6 553.8 192.0C551.5 202.3 546.9 215.4 544.7 225.5C542.4 235.5 541.4 244.6 540.1 252.5C538.9 260.5 537.5 269.5 537.0 272.9M557.6 159.0C556.3 164.6 552.4 181.2 549.8 192.3C547.2 203.4 544.4 214.9 542.0 225.7C539.6 236.4 536.6 251.6 535.6 256.8M498.7 207.9C501.6 201.6 510.1 180.1 516.4 170.1C522.7 160.1 530.5 152.3 536.4 147.9C542.4 143.4 549.4 144.2 552.0 143.4M487.3 252.5C487.9 256.3 488.9 268.5 490.9 275.5C492.8 282.6 496.8 289.3 499.0 294.7C501.2 300.1 503.1 305.6 504.0 307.8M492.0 261.2C492.6 264.9 493.5 276.4 495.3 283.4C497.2 290.5 501.8 300.1 503.1 303.4M492.7 214.9C491.1 214.5 486.4 211.1 483.4 213.0C480.3 214.9 477.2 219.8 474.4 226.0C471.7 232.2 468.9 241.9 467.0 250.1C465.0 258.2 462.9 267.2 462.7 275.0C462.4 282.7 464.1 291.1 465.7 296.7C467.2 302.2 471.0 306.4 472.1 308.4M473.3 239.0C472.4 242.0 468.9 250.0 467.6 256.8C466.2 263.5 465.7 275.7 465.3 279.4M468.4 288.5C467.0 287.7 462.9 283.0 459.8 283.7C456.8 284.3 452.5 288.6 450.0 292.6C447.5 296.6 446.0 303.5 444.8 307.8C443.7 312.1 443.3 316.7 442.9 318.4M463.1 285.7C463.5 288.3 464.6 295.7 465.3 301.2C466.1 306.8 467.2 316.0 467.6 319.0M454.2 294.6C453.7 296.8 451.3 303.8 450.9 307.9C450.5 312.0 451.8 317.1 452.0 319.0M508.1 318.4C511.1 314.6 519.3 302.6 525.9 295.7C532.6 288.9 542.3 281.4 547.8 277.2C553.4 273.1 557.5 271.9 559.4 270.8M524.9 319.3C526.7 316.1 531.0 307.0 535.7 300.2C540.4 293.4 550.2 282.1 553.1 278.5M535.7 318.9C536.9 315.3 539.7 304.4 542.4 297.5C545.1 290.6 550.4 280.9 552.0 277.6M540.9 319.0C541.6 316.0 543.9 306.4 545.3 301.2C546.8 296.0 549.0 290.1 549.8 287.9M576.2 247.4C578.7 245.3 586.3 238.3 591.4 235.0C596.4 231.7 601.6 228.9 606.7 227.5C611.8 226.2 618.3 226.4 622.0 227.0C625.7 227.6 627.3 227.7 628.9 231.3C630.5 234.8 631.6 241.6 631.7 248.2C631.7 254.8 630.8 265.2 629.2 270.9C627.7 276.6 625.8 280.0 622.6 282.4C619.4 284.8 614.6 284.9 610.2 285.4C605.7 285.9 599.5 287.5 595.8 285.4C592.0 283.2 590.8 278.8 587.8 272.3C584.7 265.8 579.1 250.5 577.4 246.2M578.7 243.4C582.4 240.9 593.9 232.1 600.9 227.9C607.9 223.7 616.2 218.9 620.9 218.1C625.6 217.4 627.0 219.2 628.9 223.4C630.8 227.7 631.9 240.1 632.4 243.4M578.7 252.3C580.1 255.3 584.8 264.6 587.6 270.1C590.3 275.6 594.0 282.7 595.3 285.2M627.6 234.6C627.7 238.3 629.2 250.1 628.7 256.8C628.1 263.4 625.0 271.6 624.2 274.6M642.5 296.9C644.3 294.8 648.5 290.7 653.5 284.0C658.5 277.3 669.1 261.2 672.3 256.7M640.8 319.3C643.2 316.1 650.2 308.2 655.1 300.1C660.1 291.9 668.0 275.2 670.6 270.2M645.0 278.8C646.3 282.6 650.8 295.0 652.4 301.6C653.9 308.2 654.1 315.6 654.4 318.4M654.2 287.9C655.7 286.4 660.1 282.7 663.1 279.0C666.1 275.3 670.5 267.9 672.0 265.7M656.4 310.1C657.9 307.9 662.7 301.2 665.3 296.8C667.9 292.3 670.9 285.7 672.0 283.4M115.3 179.0C117.2 180.7 121.6 186.4 126.4 189.0C131.3 191.6 138.7 194.4 144.2 194.6C149.8 194.7 157.2 190.9 159.8 190.1M155.3 192.3C156.4 194.2 158.7 201.0 162.0 203.4C165.3 205.9 171.9 207.1 175.3 206.8C178.7 206.4 181.3 202.1 182.4 201.2M159.8 189.1C162.3 189.5 170.6 191.4 175.1 191.1C179.5 190.8 184.7 187.9 186.6 187.3M188.1 191.8C187.0 193.6 183.1 198.6 181.7 202.5C180.3 206.3 180.1 212.9 179.8 214.9M179.5 209.8C180.1 212.5 183.5 221.2 183.2 226.3C182.9 231.5 179.2 236.7 177.8 240.8C176.4 245.0 175.2 249.5 174.7 251.3M175.5 245.1C176.0 248.0 178.4 256.6 178.3 262.5C178.1 268.5 175.7 275.4 174.6 280.6C173.5 285.8 171.2 288.8 171.6 293.9C172.0 299.0 176.3 308.2 177.3 311.0M225.4 210.0C224.3 212.2 220.5 218.8 219.0 223.2C217.4 227.6 216.3 232.2 216.0 236.6C215.6 241.0 217.5 244.9 217.0 249.7C216.4 254.4 213.8 260.4 212.7 265.0C211.6 269.5 210.3 272.2 210.4 276.8C210.5 281.4 212.3 288.0 213.1 292.5C214.0 297.0 213.2 300.2 215.5 303.5C217.7 306.9 223.5 309.7 226.6 312.7C229.6 315.7 231.9 317.8 233.6 321.5C235.2 325.2 236.4 330.4 236.3 334.9C236.3 339.3 233.9 346.0 233.4 348.2M215.7 232.1C216.2 234.2 219.0 239.5 218.7 244.8C218.5 250.0 214.8 260.3 214.0 263.5M202.0 202.3C204.2 203.3 212.5 204.6 215.3 207.9C218.1 211.2 219.3 217.7 218.9 222.3C218.5 227.0 216.1 232.7 213.1 235.7C210.1 238.7 205.0 240.7 200.9 240.3C196.8 240.0 191.4 237.0 188.7 233.7C186.0 230.3 184.5 224.6 184.7 220.1C184.9 215.6 186.9 209.7 189.8 206.8C192.7 203.8 200.0 203.1 202.0 202.3M207.6 254.6C207.9 257.5 209.0 266.4 209.8 272.3C210.6 278.3 212.2 284.6 212.2 290.1C212.3 295.7 210.4 303.1 210.0 305.7M186.4 287.0L193.1 285.7M175.6 305.8C174.0 308.8 168.2 319.3 166.2 323.7C164.1 328.1 163.7 330.9 163.2 332.4M172.1 294.3C170.8 298.0 166.6 311.2 164.3 316.5C162.0 321.8 159.5 324.3 158.5 325.8M170.9 312.3L164.2 326.1M202.0 319.0C204.2 317.9 211.6 313.1 215.3 312.3C219.0 311.6 222.7 314.2 224.2 314.6M272.9 379.3C276.5 378.6 285.8 376.9 294.1 375.0C302.4 373.1 318.1 369.1 322.9 367.9M282.0 374.6C285.7 374.2 297.6 373.8 304.2 372.3C310.9 370.9 319.0 366.8 322.0 365.7M219.8 230.1C222.7 232.0 230.9 237.9 237.6 241.2C244.2 244.6 252.4 249.0 259.8 250.1C267.2 251.2 274.6 250.5 282.0 247.9C289.4 245.3 299.0 239.7 304.2 234.6C309.4 229.4 311.6 219.7 313.1 216.8M270.6 178.5C269.9 180.7 266.6 187.2 266.6 191.5C266.7 195.8 271.4 199.8 271.0 204.5C270.5 209.2 263.6 216.5 264.0 219.7C264.4 223.0 270.2 224.3 273.3 224.1C276.3 224.0 280.7 219.9 282.2 219.0M282.0 185.7C283.1 187.9 287.9 194.6 288.7 199.0C289.4 203.4 285.3 210.9 286.4 212.3C287.6 213.8 293.9 208.6 295.3 207.9M295.5 187.6C296.6 189.8 301.9 196.0 301.9 201.2C301.9 206.4 297.6 214.4 295.4 218.7C293.2 223.0 289.8 225.7 288.7 227.0M304.8 179.4C306.0 182.3 310.3 190.3 311.8 196.6C313.4 202.9 315.6 211.1 314.0 217.0C312.4 222.9 307.6 227.6 302.3 232.1C297.0 236.5 288.1 240.4 282.0 243.6C275.9 246.9 268.5 250.2 265.8 251.5M288.7 252.3C289.4 254.2 290.9 261.2 293.1 263.4C295.3 265.7 300.5 265.3 302.0 265.7M290.8 262.0C293.0 263.0 300.4 266.0 304.1 268.4C307.8 270.9 310.0 275.2 313.0 276.6C316.0 277.9 320.5 276.4 321.9 276.4M304.2 261.2C305.7 262.3 310.1 265.7 313.1 267.9C316.1 270.1 320.5 273.4 322.0 274.6M315.3 245.7L322.0 243.4M290.9 179.0C291.3 181.2 290.9 187.9 293.1 192.3C295.3 196.8 302.4 203.4 304.2 205.7M341.7 146.0C342.3 149.0 343.3 157.4 345.5 163.7C347.8 170.1 351.8 177.8 355.2 184.1C358.7 190.4 363.4 195.2 366.2 201.5C369.1 207.8 370.9 215.9 372.3 221.9C373.6 227.8 374.9 232.9 374.3 237.2C373.8 241.5 369.8 246.1 368.9 247.9M353.1 179.0C355.3 181.6 362.7 189.0 366.4 194.6C370.1 200.1 373.3 206.0 375.3 212.3C377.4 218.6 379.3 227.1 378.9 232.3C378.5 237.6 374.1 242.0 373.1 243.9M319.8 156.8C320.5 160.5 322.4 171.6 324.2 179.0C326.1 186.4 329.0 193.7 330.9 201.2C332.7 208.7 334.6 220.1 335.3 223.9M328.7 181.2C330.1 183.8 335.7 190.9 337.6 196.8C339.4 202.7 340.5 210.8 339.8 216.8C339.0 222.8 334.2 230.1 333.1 232.8M326.4 183.4C326.6 186.8 326.8 198.2 327.6 203.4C328.3 208.7 330.3 213.1 330.9 215.0M344.2 192.3C345.7 195.7 351.3 205.7 353.1 212.3C355.0 219.0 356.1 226.7 355.3 232.3C354.6 238.0 349.8 243.8 348.7 246.1M357.6 214.6C358.3 216.8 362.7 223.1 362.0 227.9C361.3 232.7 356.8 238.9 353.1 243.4C349.4 248.0 342.0 253.1 339.8 255.0M346.4 227.9C345.0 230.5 340.5 238.2 337.6 243.4C334.6 248.7 330.1 256.8 328.7 259.4M308.7 165.7C309.0 168.6 311.3 176.7 310.9 183.4C310.5 190.2 307.2 202.3 306.4 206.1M264.1 250.3C266.7 249.9 274.1 250.2 279.7 248.0C285.4 245.7 292.4 242.0 298.0 236.9C303.5 231.7 310.6 220.4 313.2 217.1M270.9 243.4C273.5 242.7 281.6 241.6 286.4 239.0C291.3 236.4 297.6 229.7 299.8 227.9M290.6 252.0C291.9 253.1 295.4 257.2 298.5 258.6C301.5 260.0 307.1 260.0 308.9 260.3M289.3 259.1C290.4 260.5 294.4 266.4 296.3 267.1C298.3 267.7 300.0 263.7 300.8 263.0M310.2 263.4C313.6 264.8 323.4 271.9 330.5 271.9C337.6 272.0 346.6 267.7 353.1 263.8C359.5 259.8 366.5 250.6 369.2 248.0M315.3 275.0C318.7 274.6 328.3 275.0 335.3 272.8C342.4 270.6 353.9 263.5 357.6 261.7M383.8 169.9C388.4 169.0 402.8 167.3 410.9 164.4C419.1 161.5 425.9 157.0 432.6 152.7C439.3 148.3 447.9 140.8 451.0 138.4M476.1 139.2C474.1 143.3 469.8 153.9 464.1 163.4C458.3 173.0 449.1 186.8 441.8 196.8C434.5 206.7 427.6 215.4 420.2 223.1C412.8 230.9 404.9 237.9 397.4 243.4C389.8 248.9 378.8 253.9 375.0 256.0M430.9 194.6C428.7 197.9 421.6 208.9 417.6 214.6C413.5 220.2 408.3 226.0 406.4 228.3M307.2 263.9C309.1 266.8 314.4 275.5 318.5 281.5C322.6 287.4 327.1 293.9 331.8 299.4C336.6 305.0 341.9 310.5 347.0 314.7C352.1 318.8 357.9 322.4 362.5 324.2C367.2 326.0 371.5 326.7 375.1 325.3C378.7 324.0 382.8 317.7 384.4 316.1M308.6 272.2C311.2 275.9 319.0 287.4 324.5 294.5C330.0 301.6 336.3 309.2 341.7 314.8C347.2 320.3 351.9 325.2 357.2 327.9C362.5 330.5 370.8 330.2 373.5 330.6M363.0 247.7C365.1 250.2 371.0 257.8 375.4 262.6C379.8 267.4 385.7 271.7 389.3 276.7C392.9 281.6 396.0 286.8 396.9 292.3C397.9 297.9 396.4 305.0 395.0 310.3C393.6 315.6 389.6 321.8 388.5 324.2M380.4 293.4C381.4 293.4 385.5 293.0 386.1 293.6C386.7 294.2 384.3 296.5 384.0 297.1M375.3 267.9C377.2 268.6 383.1 269.7 386.4 272.3C389.8 275.0 393.9 282.0 395.3 283.9M357.6 294.6C356.8 297.1 353.1 304.9 353.1 310.1C353.1 315.3 354.6 321.9 357.6 325.7C360.5 329.4 366.8 333.1 370.9 332.8C375.0 332.5 379.8 326.9 382.0 323.9C384.2 320.9 383.9 316.1 384.2 314.6M382.0 314.6C383.1 316.1 386.4 323.1 388.7 323.9C390.9 324.6 394.0 322.4 395.3 319.0C396.7 315.6 396.4 306.0 396.7 303.4M482.0 216.2C480.4 219.0 475.0 226.5 472.4 233.1C469.7 239.7 467.3 247.5 465.9 255.7C464.5 263.8 463.5 273.1 464.0 281.9C464.4 290.7 466.8 300.6 468.8 308.6C470.7 316.6 474.7 326.3 475.8 329.9M471.1 241.4C470.1 244.9 466.2 255.2 465.1 262.8C463.9 270.4 464.3 283.0 464.1 287.0M464.5 284.6C463.0 284.5 458.2 282.3 455.5 284.1C452.9 285.8 450.5 290.0 448.7 295.1C447.0 300.2 445.1 307.2 444.9 314.5C444.7 321.8 447.2 334.9 447.6 339.0M466.4 290.1C465.3 293.1 460.7 301.5 459.8 307.9C458.9 314.3 460.9 324.9 461.1 328.3M450.9 299.0C450.5 302.7 448.7 314.6 448.7 321.2C448.7 327.9 450.5 336.0 450.9 339.0M257.6 336.8L264.2 334.6M464.9 403.4C466.4 407.9 470.6 421.7 474.0 430.7C477.4 439.7 480.9 450.0 485.1 457.2C489.3 464.5 496.8 471.3 499.1 474.1M536.4 301.0C537.0 304.6 538.8 315.1 539.8 322.4C540.8 329.7 542.4 337.4 542.4 344.8C542.5 352.3 541.2 359.6 540.2 367.3C539.2 374.9 538.3 383.0 536.6 390.7C534.9 398.3 531.5 408.2 530.1 413.1C528.7 418.0 528.7 418.9 528.4 420.1M545.5 292.5C545.8 297.7 547.8 313.4 547.7 323.4C547.7 333.4 546.4 342.3 544.9 352.3C543.4 362.3 541.1 373.3 538.9 383.4C536.7 393.6 532.9 408.3 531.7 413.3M547.6 330.1C548.7 333.1 552.7 341.6 554.2 347.9C555.7 354.2 556.1 364.6 556.4 367.9M534.2 292.3C532.0 297.5 524.2 313.1 520.9 323.4C517.6 333.8 515.3 349.4 514.2 354.6M564.1 421.4C565.0 418.4 566.6 410.2 569.4 403.4C572.2 396.7 576.6 388.1 581.1 381.1C585.6 374.0 591.0 367.4 596.5 361.1C602.1 354.8 608.3 348.5 614.3 343.2C620.2 338.0 629.1 331.8 632.0 329.5M566.1 418.9C569.9 417.5 581.3 415.8 588.5 410.3C595.7 404.8 602.9 393.0 609.2 385.8C615.4 378.7 623.1 370.6 625.9 367.5M569.8 412.3C572.7 410.1 581.6 404.9 587.6 399.0C593.5 393.1 600.1 382.0 605.3 376.8C610.5 371.6 616.4 369.4 618.7 367.9M574.2 403.4C577.2 401.2 587.6 394.6 592.0 390.1C596.4 385.7 599.4 379.0 600.9 376.8M445.4 318.8C445.5 320.8 445.0 326.3 445.7 330.5C446.5 334.6 447.9 339.1 449.9 343.4C452.0 347.8 455.6 351.7 458.1 356.6C460.5 361.4 462.5 368.4 464.6 372.5C466.7 376.7 469.6 379.9 470.6 381.4M453.7 285.9C452.2 288.1 445.9 293.6 444.4 298.8C442.8 304.1 444.4 314.3 444.4 317.4M464.4 278.9C464.6 281.9 464.3 291.7 465.4 297.0C466.6 302.4 470.5 308.6 471.5 310.9M460.9 285.7C461.6 289.4 463.1 300.9 465.3 307.9C467.6 314.9 471.2 323.4 474.2 327.9C477.3 332.3 482.0 333.4 483.6 334.6M476.4 339.0C478.7 338.3 485.3 334.7 489.8 334.6C494.2 334.4 500.9 337.5 503.1 338.1M489.8 350.1C491.3 352.3 495.3 359.7 498.7 363.4C502.0 367.1 507.9 370.9 509.8 372.3M478.7 385.7C481.3 387.5 489.0 394.1 494.2 396.8C499.4 399.4 507.2 400.9 509.8 401.7M471.3 436.7C474.3 436.6 482.8 437.1 488.8 436.6C494.8 436.0 501.7 434.7 507.2 433.4C512.8 432.1 519.8 429.6 522.3 428.8M471.3 452.3C474.2 451.6 484.4 449.3 488.7 447.9C493.1 446.5 496.1 444.4 497.6 443.7M483.1 463.4C486.8 463.1 498.3 463.1 505.3 461.2C512.4 459.4 519.4 456.0 525.3 452.3C531.3 448.6 537.2 442.3 540.9 439.0C544.6 435.7 546.4 433.4 547.6 432.3M498.7 470.1C502.4 469.4 513.5 468.3 520.9 465.7C528.3 463.1 536.4 459.0 543.1 454.6C549.8 450.1 556.4 442.3 560.9 439.0C565.3 435.7 568.3 435.3 569.8 434.6M494.2 476.8C497.9 476.4 509.4 476.0 516.4 474.6C523.5 473.1 533.1 469.0 536.4 467.9M671.8 279.4C670.1 284.0 664.8 296.8 661.6 306.6C658.4 316.3 656.0 327.4 652.7 337.8C649.4 348.2 646.3 358.7 641.8 369.1C637.3 379.4 631.4 389.8 625.7 399.7C620.0 409.6 614.3 419.3 607.7 428.5C601.0 437.8 593.7 447.6 585.8 455.2C577.9 462.7 566.2 470.0 560.4 473.8C554.7 477.7 553.0 477.6 551.5 478.3M667.9 292.2C666.1 298.0 661.2 315.2 657.2 327.0C653.1 338.8 648.2 351.8 643.4 362.9C638.6 374.0 634.1 383.7 628.6 393.7C623.1 403.7 616.6 414.2 610.5 422.9C604.3 431.6 598.5 438.4 591.7 445.9C584.9 453.4 575.2 462.4 569.4 467.9C563.6 473.4 558.8 477.0 556.7 478.8M645.6 287.8C646.8 292.2 651.4 305.9 652.8 313.7C654.2 321.6 653.9 330.3 653.8 335.0C653.7 339.7 652.5 340.9 652.2 342.1M672.0 305.7C670.5 310.9 666.4 326.4 663.1 336.8C659.8 347.1 656.4 358.6 652.0 367.9C647.6 377.2 639.0 388.6 636.4 392.8M665.3 363.4C663.5 366.0 659.0 374.1 654.2 379.0C649.4 383.9 639.4 390.5 636.4 392.8M672.5 394.1C669.7 397.7 662.3 409.5 655.6 415.8C649.0 422.1 640.3 428.0 632.6 432.0C624.9 435.9 613.3 438.4 609.4 439.7M672.0 403.4C668.3 407.1 657.2 420.0 649.8 425.7C642.4 431.3 631.3 435.3 627.6 437.2M605.3 412.3C604.6 415.3 603.1 424.1 600.9 430.1C598.7 436.1 593.5 445.3 592.0 448.3M592.0 430.1C591.3 433.1 590.1 442.3 587.6 447.9C585.0 453.5 578.3 461.2 576.4 463.9M632.0 330.1C633.5 329.0 638.7 326.0 640.9 323.4C643.1 320.9 644.6 316.0 645.3 314.6M432.0 421.2C432.7 422.7 436.1 427.1 436.4 430.1C436.8 433.1 434.6 437.9 434.2 439.4M454.2 412.3C453.5 416.0 450.1 427.1 449.8 434.6C449.4 442.0 450.5 449.4 452.0 456.8C453.5 464.2 457.6 475.3 458.7 479.0M460.9 412.3C460.1 416.8 456.4 429.7 456.4 439.0C456.4 448.3 460.1 463.4 460.9 468.3M436.4 447.9C437.6 451.2 441.6 462.7 443.1 467.9C444.6 473.1 445.0 477.1 445.3 479.0M432.0 456.8C433.1 459.0 436.8 466.4 438.7 470.1C440.5 473.8 442.4 477.5 443.1 479.0M591.4 279.3C592.8 280.2 595.9 284.1 599.9 285.0C603.9 285.9 610.6 285.8 615.6 285.0C620.5 284.2 627.3 280.9 629.6 280.1M177.9 434.6C176.5 438.7 171.2 451.0 169.5 459.2C167.8 467.3 167.5 474.8 167.5 483.3C167.6 491.8 168.5 502.7 169.8 510.3C171.2 517.8 174.7 525.5 175.7 528.5M173.1 447.9C172.7 452.3 170.9 466.3 170.9 474.6C170.9 482.8 172.7 493.4 173.1 497.2M244.1 376.7C244.6 380.0 246.5 390.7 247.5 396.5C248.4 402.2 249.5 408.8 249.9 411.2M252.3 386.1C253.3 389.9 255.2 401.4 258.1 408.9C260.9 416.3 265.3 424.5 269.3 430.8C273.2 437.2 277.2 441.7 281.8 447.0C286.5 452.3 292.3 458.0 297.2 462.7C302.1 467.4 308.8 473.1 311.1 475.2M250.9 395.3C254.3 393.5 264.0 387.8 271.4 384.7C278.8 381.6 286.8 379.5 295.1 376.6C303.4 373.6 316.8 368.6 321.2 367.0M248.7 399.0C251.3 397.9 258.7 394.2 264.2 392.3C269.8 390.5 279.0 388.6 282.0 387.9M260.0 423.4C262.9 421.1 271.6 414.1 277.5 409.7C283.4 405.3 289.4 400.8 295.4 397.0C301.5 393.1 310.5 388.2 313.5 386.4M255.3 414.6C258.3 412.3 267.2 405.3 273.1 401.2C279.0 397.1 287.9 392.0 290.9 390.1M322.1 456.7C320.6 459.0 316.1 466.8 313.0 470.8C310.0 474.8 305.5 479.0 303.9 480.6M309.8 474.2C310.9 476.5 314.7 483.5 316.6 487.8C318.5 492.1 320.4 497.9 321.2 499.9M310.9 479.0L317.6 492.8M282.0 443.4C284.2 444.2 292.0 446.3 295.3 447.9C298.7 449.4 300.9 452.0 302.0 452.8M264.2 439.0C266.4 442.0 272.7 451.6 277.6 456.8C282.4 462.0 288.3 467.1 293.1 470.1C297.9 473.1 304.2 474.2 306.4 475.0M322.3 507.1C320.1 508.9 314.2 513.8 308.8 518.1C303.5 522.4 293.4 530.2 290.4 532.7M322.0 514.6C320.5 516.0 315.0 519.7 313.1 523.4C311.3 527.1 310.5 531.5 310.9 536.8C311.3 542.0 314.6 552.0 315.3 555.0M132.1 431.7C134.7 432.8 142.5 436.4 147.9 438.4C153.3 440.4 159.8 442.8 164.5 443.8C169.2 444.8 174.2 444.2 176.1 444.3M130.3 446.4C131.4 446.8 135.1 447.4 136.9 448.3C138.7 449.2 140.5 451.3 141.3 451.8M130.1 457.1C131.1 457.4 134.4 457.8 136.1 458.9C137.8 459.9 139.7 462.7 140.4 463.4M132.6 468.3C133.9 468.6 138.5 469.2 140.3 469.7C142.1 470.3 142.8 471.3 143.3 471.6M141.1 474.3C141.9 474.3 145.3 473.7 146.1 474.4C146.9 475.2 145.8 477.9 145.8 478.6M155.3 452.3C156.1 454.2 159.4 458.9 159.8 463.4C160.1 468.0 157.9 476.8 157.6 479.4M159.8 447.9C160.7 450.1 164.6 456.3 165.3 461.2C166.1 466.1 164.4 474.6 164.2 477.2M148.9 485.5C150.4 485.1 154.1 484.1 157.8 483.1C161.5 482.0 168.9 479.6 171.1 478.9M184.6 454.1C186.7 455.1 192.5 457.1 196.8 459.9C201.0 462.8 205.5 467.4 210.0 471.2C214.6 475.1 219.3 479.5 223.9 482.9C228.4 486.3 233.8 488.4 237.4 491.8C241.1 495.1 242.0 499.5 245.7 503.0C249.5 506.4 255.2 509.0 259.9 512.6C264.5 516.2 268.3 521.3 273.4 524.4C278.5 527.5 287.7 530.0 290.5 531.1M211.1 473.8C213.2 476.4 219.7 485.1 224.1 489.2C228.5 493.2 235.1 496.7 237.3 498.2M215.1 515.0C215.8 516.1 217.3 518.6 219.1 521.7C221.0 524.9 225.2 531.9 226.4 533.9M197.7 477.2C198.4 479.7 199.3 487.5 201.8 492.3C204.3 497.2 211.0 504.0 212.8 506.3M224.2 483.4C226.4 484.6 233.5 487.1 237.6 490.1C241.6 493.1 245.0 497.1 248.7 501.2C252.4 505.3 256.1 510.8 259.8 514.6C263.5 518.3 269.0 522.3 270.9 523.9M129.6 507.8C129.0 510.2 125.9 517.3 126.5 522.2C127.0 527.1 129.7 532.7 132.8 537.3C136.0 541.9 141.0 546.6 145.3 549.8C149.5 553.0 156.2 555.4 158.4 556.5M129.3 507.7C131.8 508.8 138.8 510.9 144.3 513.9C149.7 516.9 155.9 522.6 162.1 525.7C168.3 528.8 174.1 530.8 181.5 532.4C188.8 533.9 198.7 534.5 206.2 534.9C213.7 535.4 219.9 535.6 226.6 535.2C233.3 534.8 243.0 533.0 246.3 532.5M135.5 514.4C139.0 516.1 150.7 522.6 156.4 524.5C162.0 526.5 167.3 526.0 169.5 526.3M131.4 519.0C132.8 521.9 135.9 531.4 139.9 536.6C143.8 541.7 149.2 546.7 155.2 549.9C161.1 553.1 172.1 554.7 175.4 555.7M81.6 556.8C84.6 554.6 94.0 546.9 99.9 543.5C105.9 540.1 112.4 537.7 117.3 536.4C122.1 535.1 127.1 535.7 129.0 535.6M89.4 554.4C92.5 552.6 101.6 546.3 107.8 543.8C113.9 541.4 123.4 540.5 126.5 539.8M142.6 557.2C145.2 556.5 153.0 553.6 158.5 553.2C164.0 552.8 169.0 553.9 175.5 554.5C182.0 555.1 193.6 556.6 197.3 557.0M206.4 536.8C209.4 537.1 219.0 539.0 224.2 539.0C229.4 539.0 235.3 537.1 237.6 536.8M247.4 532.4C251.0 532.1 261.7 530.4 269.0 530.4C276.4 530.4 287.7 531.9 291.5 532.2M255.5 536.3C259.2 537.3 271.0 540.3 277.6 542.1C284.2 543.9 289.0 545.7 295.0 547.1C301.0 548.6 310.5 550.3 313.6 551.0M237.6 554.6C241.3 554.2 252.4 552.3 259.8 552.3C267.2 552.4 278.3 554.6 282.0 555.0M268.7 550.1C271.6 549.7 280.1 548.4 286.4 547.9C292.7 547.4 303.1 547.1 306.4 547.0M291.2 532.5C293.5 534.3 301.3 540.2 304.9 543.7C308.4 547.1 311.2 551.7 312.4 553.3M282.7 377.9C284.9 377.2 290.9 374.7 295.7 373.6C300.6 372.4 306.4 372.5 311.6 371.1C316.8 369.7 322.2 366.6 326.9 365.2C331.7 363.8 336.8 361.9 340.0 362.5C343.3 363.1 344.2 365.2 346.3 368.8C348.4 372.4 351.0 379.0 352.8 384.1C354.6 389.1 356.2 394.9 356.9 399.3C357.6 403.7 356.9 408.7 356.8 410.6M282.0 382.9C284.6 382.2 292.2 380.1 297.7 378.7C303.2 377.3 312.2 375.3 315.1 374.6M286.4 376.8C289.4 376.2 298.3 375.1 304.2 373.4C310.1 371.8 319.0 368.1 322.0 367.0M358.8 403.9C357.2 406.0 352.8 411.7 349.5 416.8C346.2 421.9 343.2 428.0 339.0 434.7C334.7 441.4 328.2 451.1 324.2 456.9C320.1 462.8 317.4 466.6 314.4 470.1C311.5 473.5 307.8 476.4 306.5 477.7M353.7 412.2C351.7 415.4 346.3 424.5 342.1 431.6C337.9 438.6 332.7 448.0 328.5 454.6C324.3 461.1 318.8 468.1 316.8 470.9M282.0 405.7C284.2 403.8 290.9 397.5 295.3 394.6C299.8 391.6 305.0 389.4 308.7 387.9C312.4 386.4 316.1 386.0 317.6 385.7M282.0 450.1C283.9 451.7 289.7 456.5 293.8 460.0C297.8 463.5 303.1 467.8 306.4 470.8C309.7 473.9 311.6 475.0 313.5 478.3C315.4 481.6 315.9 487.3 317.7 490.6C319.5 493.9 323.3 496.9 324.4 498.1M281.7 457.4C284.0 459.6 291.1 467.5 295.6 470.5C300.1 473.5 306.7 474.5 308.9 475.3M310.4 479.0C311.1 481.2 312.4 489.1 314.7 492.5C317.0 495.9 320.1 498.9 324.0 499.2C327.8 499.6 333.5 496.3 337.7 494.4C342.0 492.6 347.4 489.4 349.3 488.4M326.7 495.2C328.6 494.8 334.4 494.5 338.1 493.3C341.8 492.1 347.4 487.6 348.8 487.8C350.3 488.0 347.2 493.3 346.8 494.4M348.5 490.0C350.4 488.1 355.6 482.8 360.2 478.7C364.8 474.6 370.8 469.2 375.9 465.2C380.9 461.1 386.7 456.5 390.5 454.4C394.2 452.3 397.0 452.8 398.4 452.5M346.9 496.7C349.9 494.4 359.8 486.6 365.2 482.9C370.7 479.2 376.0 478.1 379.5 474.5C382.9 470.8 383.0 464.7 385.9 461.1C388.8 457.5 395.1 454.2 396.9 452.8M348.7 494.6C351.6 492.9 361.3 487.4 366.4 484.8C371.6 482.2 377.6 480.0 379.8 479.0M304.1 517.6C306.3 516.2 312.1 511.7 317.3 509.4C322.5 507.0 329.3 504.5 335.3 503.6C341.3 502.7 349.0 503.5 353.4 503.8C357.8 504.1 360.5 505.1 361.9 505.4M309.9 517.1C312.8 515.7 322.6 510.3 327.6 508.4C332.6 506.4 337.8 506.0 339.9 505.5M359.8 503.4C362.4 504.2 370.9 505.3 375.3 507.9C379.8 510.5 384.6 517.1 386.4 519.0M346.8 319.1C348.6 320.3 353.7 324.9 357.7 326.3C361.7 327.7 366.8 328.2 370.8 327.7C374.8 327.2 379.2 324.8 381.8 323.3C384.3 321.9 385.4 319.6 386.1 318.8M355.3 323.4C357.2 324.9 362.4 331.6 366.4 332.3C370.5 333.1 377.6 328.6 379.8 327.9M451.1 412.5C450.3 416.2 446.6 426.5 446.2 434.6C445.7 442.8 446.5 452.6 448.4 461.5C450.3 470.3 455.4 479.7 457.7 487.8C459.9 495.8 461.2 504.5 461.6 509.8C462.1 515.0 460.5 517.5 460.2 519.1M459.8 408.2C458.9 411.9 455.1 422.2 454.5 430.5C454.0 438.8 454.4 449.9 456.4 458.0C458.3 466.1 463.4 471.9 466.1 478.9C468.7 485.9 471.3 493.5 472.1 500.0C473.0 506.6 471.5 515.1 471.3 518.1M464.2 403.4C463.9 407.1 461.6 418.3 462.0 425.7C462.4 433.1 464.6 441.9 466.4 447.9C468.3 453.9 472.0 459.4 473.1 461.7M437.6 452.3C438.3 456.0 439.4 467.9 442.0 474.6C444.6 481.2 450.1 487.4 453.1 492.3C456.1 497.2 458.7 502.0 459.8 503.9M466.4 470.1C467.2 473.1 469.0 482.3 470.9 487.9C472.7 493.4 476.8 498.3 477.6 503.4C478.3 508.6 475.7 516.4 475.3 519.0M442.0 412.3C441.3 416.0 437.9 427.1 437.6 434.6C437.2 442.0 439.4 453.1 439.8 456.8M393.1 461.2C393.9 464.2 395.0 473.8 397.6 479.0C400.1 484.2 404.2 489.4 408.7 492.3C413.1 495.3 419.4 496.8 424.2 496.8C429.0 496.8 434.6 495.3 437.6 492.3C440.5 489.4 441.3 481.2 442.0 479.0M393.1 461.2C394.6 459.4 398.3 452.7 402.0 450.1C405.7 447.5 411.3 445.7 415.3 445.7C419.4 445.7 424.6 449.4 426.4 450.1M377.6 456.5C379.3 455.0 384.1 449.8 388.1 447.6C392.1 445.3 396.9 443.7 401.5 442.9C406.0 442.1 411.0 442.2 415.3 442.9C419.5 443.7 424.0 445.3 427.0 447.3C430.1 449.4 432.4 454.0 433.5 455.4M428.1 449.7C429.3 453.0 432.3 463.1 435.3 469.5C438.4 476.0 442.3 483.3 446.4 488.3C450.6 493.3 458.0 497.6 460.3 499.4M406.2 512.0C408.4 510.5 415.0 505.2 419.3 502.9C423.7 500.7 428.8 499.4 432.3 498.5C435.7 497.5 438.7 497.3 439.9 497.0M415.1 519.0C417.0 517.1 422.5 510.9 426.3 508.0C430.1 505.0 436.0 502.5 437.9 501.4M402.0 516.8L413.1 510.1M81.4 557.9C83.8 556.1 90.2 549.8 95.8 546.7C101.4 543.5 109.6 540.7 115.1 538.8C120.5 536.8 126.4 535.6 128.7 535.0M79.5 560.7C81.7 558.9 87.6 552.8 92.8 549.6C97.9 546.4 105.0 543.4 110.4 541.6C115.8 539.7 122.6 538.8 125.1 538.3M76.6 562.1C76.4 563.4 76.2 566.6 75.1 569.9C73.9 573.1 71.4 577.7 69.8 581.6C68.3 585.4 66.4 591.0 65.7 592.9M81.5 570.5C80.7 572.0 78.5 577.2 76.9 579.7C75.3 582.1 72.8 584.2 72.0 585.1M72.8 585.6C71.4 589.9 67.3 602.1 63.9 611.7C60.5 621.2 56.5 632.6 52.5 643.0C48.4 653.4 44.3 663.8 39.8 674.0C35.2 684.1 29.0 696.1 25.3 703.7C21.6 711.2 18.7 716.6 17.4 719.2M65.7 592.3C63.8 597.9 58.3 614.9 54.6 625.7C50.9 636.4 47.1 646.8 43.4 656.8C39.7 666.8 36.0 676.3 32.3 685.7C28.6 695.0 23.1 708.3 21.2 712.8M47.9 650.1C45.7 655.3 38.6 671.5 34.6 681.2C30.5 690.9 25.3 703.8 23.4 708.3M110.2 564.3C111.2 566.2 114.0 571.9 116.6 575.8C119.1 579.6 123.3 583.5 125.5 587.4C127.8 591.2 129.4 594.7 130.1 598.7C130.9 602.8 130.7 607.4 129.9 611.8C129.1 616.1 127.0 620.3 125.3 624.7C123.7 629.2 121.9 633.7 120.1 638.3C118.3 642.9 117.0 648.2 114.5 652.3C112.1 656.4 109.1 659.7 105.4 663.0C101.7 666.3 96.5 669.6 92.4 672.2C88.4 674.7 84.7 675.0 81.3 678.4C77.9 681.9 74.6 687.6 72.0 692.6C69.4 697.5 67.1 704.3 65.8 708.2C64.5 712.0 64.5 714.4 64.2 715.6M110.8 565.1C111.4 568.7 113.9 579.3 114.8 586.7C115.7 594.1 116.7 603.0 116.4 609.5C116.1 616.0 113.9 620.8 113.2 625.6C112.4 630.3 112.1 635.8 111.9 637.8M118.3 579.4C118.8 582.7 120.3 593.3 121.2 599.6C122.1 605.9 124.0 611.2 123.8 617.0C123.5 622.9 120.4 631.6 119.7 634.6M119.5 643.9C117.7 646.1 112.8 653.2 108.6 657.2C104.4 661.2 98.8 664.7 94.5 668.0C90.3 671.3 85.1 675.4 83.2 676.9M114.2 634.1C113.5 636.2 112.8 642.6 109.9 647.1C107.0 651.6 100.8 656.9 96.7 661.1C92.6 665.3 88.2 668.6 85.2 672.3C82.2 676.0 79.9 678.7 78.7 683.5C77.6 688.3 78.5 695.1 78.2 701.1C78.0 707.1 77.3 716.3 77.2 719.4M96.8 627.9C97.9 629.4 101.2 633.7 103.4 636.8C105.7 639.8 109.0 644.6 110.1 646.1M56.8 691.2C59.0 690.7 65.7 689.2 70.1 687.9C74.6 686.6 79.0 685.3 83.4 683.4C87.9 681.6 92.3 679.7 96.8 676.8C101.2 673.9 107.9 667.9 110.1 666.1M85.7 687.9C84.9 690.1 82.3 696.0 81.2 701.2C80.1 706.4 79.4 716.0 79.0 719.0M159.0 599.0C159.9 600.1 162.9 603.6 164.6 605.7C166.3 607.7 168.4 610.5 169.2 611.4M156.8 605.7L163.4 602.3M134.5 543.5C136.9 544.9 142.8 550.0 149.0 552.0C155.2 554.1 164.4 554.8 172.0 555.9C179.5 557.0 186.6 557.6 194.1 558.8C201.7 560.0 212.4 562.1 217.1 563.3C221.8 564.4 221.5 565.3 222.4 565.7M141.2 555.5C141.8 556.7 143.1 561.0 145.1 562.6C147.2 564.2 148.5 565.0 153.7 565.1C158.8 565.1 168.5 562.4 176.2 562.7C183.8 563.0 191.9 566.2 199.5 566.7C207.1 567.2 218.0 565.8 221.7 565.6M151.6 566.7C150.8 568.0 146.9 571.2 146.9 574.3C146.8 577.3 148.7 581.5 151.4 584.9C154.1 588.2 158.7 592.3 163.0 594.4C167.4 596.5 172.9 597.4 177.5 597.4C182.0 597.4 186.1 595.7 190.4 594.2C194.8 592.7 201.4 589.2 203.6 588.2M161.5 580.9C162.7 582.5 164.7 588.3 168.5 590.4C172.2 592.5 178.1 593.5 183.9 593.5C189.8 593.5 197.3 591.7 203.6 590.5C209.9 589.2 215.6 587.1 221.5 586.0C227.5 584.9 236.3 584.2 239.3 583.8M190.7 598.3C193.0 598.2 200.3 598.5 204.7 597.2C209.1 595.8 213.2 592.0 217.3 590.1C221.3 588.1 227.3 586.3 229.3 585.6M187.9 596.8C189.8 597.1 196.2 598.8 199.5 598.4C202.9 598.1 206.5 595.3 207.9 594.7M239.9 592.6C236.9 593.7 227.3 596.8 222.2 599.5C217.1 602.1 212.7 605.2 209.3 608.4C206.0 611.7 202.9 614.8 202.0 618.9C201.1 622.9 202.6 628.5 204.1 632.6C205.6 636.7 207.5 640.6 210.9 643.3C214.3 646.0 220.0 648.5 224.7 648.8C229.3 649.2 236.6 646.0 239.0 645.4M209.7 612.3C208.9 614.4 204.1 620.5 204.7 625.0C205.3 629.5 210.3 635.8 213.5 639.3C216.6 642.9 221.8 645.2 223.5 646.4M223.0 636.0C224.6 635.4 229.5 633.8 232.3 632.6C235.2 631.4 239.0 629.5 240.3 628.9M239.0 599.0C236.8 599.7 230.1 601.1 225.7 603.4C221.2 605.7 214.6 611.2 212.3 612.8M312.4 518.4C312.1 521.0 309.9 528.5 310.4 533.5C311.0 538.6 312.9 544.7 315.8 548.8C318.7 552.9 323.2 556.2 327.8 558.1C332.3 560.1 338.0 561.2 343.2 560.5C348.4 559.8 354.3 557.3 359.1 554.1C364.0 550.8 369.0 545.6 372.3 541.0C375.6 536.5 377.7 530.0 379.1 526.5C380.5 523.0 380.3 521.2 380.5 520.2M292.1 530.5C293.7 532.7 298.1 539.7 301.4 543.7C304.8 547.7 308.6 551.4 312.2 554.7C315.7 557.9 321.0 561.8 322.8 563.2M290.4 532.6C292.7 531.5 300.2 528.7 303.9 526.4C307.7 524.2 311.4 520.3 312.9 519.1M239.4 535.0C241.8 534.6 249.0 532.6 253.8 532.7C258.7 532.8 263.6 534.6 268.4 535.7C273.2 536.7 278.1 538.3 282.7 538.8C287.2 539.3 293.6 538.8 295.8 538.8M261.7 552.7C264.7 552.5 273.7 551.9 279.6 551.2C285.4 550.5 291.8 549.3 296.8 548.6C301.8 547.9 307.6 547.3 309.7 547.0M256.8 554.6C259.4 554.8 266.8 556.3 272.3 555.9C277.9 555.5 287.1 552.9 290.1 552.3M274.6 566.8C277.1 566.6 285.3 566.6 290.1 565.7C294.9 564.7 299.4 563.1 303.4 561.2C307.5 559.4 312.7 555.7 314.6 554.6M283.2 590.4C285.3 588.5 291.4 582.5 295.8 579.0C300.2 575.6 305.4 572.4 309.4 569.9C313.3 567.3 317.9 564.8 319.6 563.7M239.0 543.4C240.9 542.7 246.4 539.5 250.1 539.0C253.8 538.5 259.4 540.1 261.2 540.3M239.0 552.3C240.5 552.0 244.9 551.2 247.9 550.1C250.9 549.0 255.3 546.4 256.8 545.7M263.4 530.1C265.3 531.2 269.7 534.9 274.6 536.8C279.4 538.6 289.4 540.5 292.3 541.2M239.2 585.6C240.2 585.3 243.7 583.6 245.5 583.6C247.4 583.5 249.6 584.3 250.2 585.4C250.7 586.5 250.3 588.9 248.8 590.3C247.3 591.6 242.7 593.3 241.1 593.5C239.6 593.8 239.7 592.1 239.4 591.8M246.7 570.2C247.0 571.7 248.4 576.9 248.6 579.1C248.7 581.4 247.8 583.0 247.7 583.8M250.1 587.9C251.2 588.3 255.3 589.5 256.8 590.1C258.3 590.7 258.6 591.2 259.0 591.4M243.4 594.6L250.1 595.9M325.6 577.4C327.5 576.7 333.0 576.2 337.0 573.0C341.0 569.8 347.5 560.8 349.6 558.3M339.7 578.1C341.5 575.7 347.0 568.2 350.5 563.4C354.0 558.6 359.0 551.7 360.7 549.3M356.7 572.1C357.7 569.6 360.2 561.6 362.7 556.8C365.1 552.0 368.6 547.4 371.5 543.3C374.5 539.2 376.4 535.4 380.3 532.1C384.1 528.8 390.3 525.6 394.8 523.5C399.2 521.4 405.0 520.1 407.0 519.4M374.4 573.6C374.1 570.9 372.2 563.1 372.5 557.4C372.8 551.7 374.7 545.2 376.1 539.5C377.5 533.8 380.2 526.0 381.0 523.3M363.4 567.9C367.9 566.8 381.2 563.8 390.1 561.2C399.0 558.6 408.6 554.9 416.8 552.3C424.9 549.7 435.3 546.8 439.0 545.7M401.2 543.1C403.6 543.4 411.0 545.7 415.8 545.3C420.5 544.9 426.1 542.4 429.7 540.7C433.3 538.9 435.0 537.3 437.3 534.7C439.7 532.1 442.7 526.5 443.7 524.9M426.7 558.7C428.6 558.4 433.6 558.5 438.0 556.8C442.3 555.0 450.4 549.7 452.8 548.2M323.6 580.9C322.3 583.2 318.2 589.7 315.6 594.5C312.9 599.3 310.3 604.8 307.7 609.6C305.1 614.5 301.9 620.3 299.9 623.5C297.8 626.6 296.2 627.7 295.4 628.5M327.9 585.7C326.8 587.9 323.8 594.1 321.2 599.0C318.6 603.9 313.8 612.3 312.3 615.0M299.1 622.8C298.9 625.0 299.2 631.2 298.0 636.1C296.7 640.9 292.6 649.3 291.5 651.9M268.1 614.1C267.0 616.6 263.9 623.8 261.8 629.2C259.8 634.7 256.8 641.4 255.7 646.9C254.6 652.5 254.0 658.2 255.3 662.6C256.7 667.1 260.0 671.9 263.7 673.9C267.4 675.9 273.6 675.8 277.6 674.5C281.6 673.1 284.5 670.0 287.8 665.9C291.0 661.8 295.3 655.1 297.1 649.9C298.9 644.8 298.5 637.4 298.7 634.9M272.0 619.1C271.0 622.4 267.4 632.5 266.2 638.6C265.0 644.7 264.3 650.2 264.7 655.9C265.1 661.6 266.2 669.7 268.6 672.8C271.0 675.8 277.3 674.0 279.0 674.2M290.1 606.2C288.5 607.0 282.7 608.8 280.2 611.0C277.6 613.3 276.0 615.8 274.8 619.7C273.6 623.5 273.9 628.9 272.9 634.3C271.9 639.7 269.4 649.2 268.8 652.1M275.7 665.7C277.0 665.3 280.9 665.3 283.4 663.4C286.0 661.6 289.0 657.8 291.2 654.6C293.4 651.3 295.9 645.7 296.8 643.9M239.2 628.2C240.8 627.1 245.2 623.3 248.6 621.5C251.9 619.7 256.3 618.6 259.4 617.3C262.5 616.1 265.8 614.7 267.1 614.1M238.9 643.7C240.1 641.9 243.3 635.8 245.9 632.5C248.6 629.2 253.4 625.2 254.9 623.8M269.3 595.0C269.2 596.9 268.5 602.8 268.5 606.3C268.5 609.8 269.2 614.3 269.3 615.9M265.7 607.9L270.1 614.6M462.7 536.5C463.9 540.7 467.3 552.8 469.5 561.8C471.7 570.8 474.2 583.7 476.0 590.4C477.8 597.0 479.4 599.9 480.1 601.8M470.1 532.3C471.2 537.5 475.3 556.0 476.8 563.4C478.3 570.9 478.6 574.9 479.0 577.2M479.7 669.4C478.6 670.6 474.5 674.3 472.8 676.6C471.0 678.9 469.0 681.3 469.1 683.1C469.3 685.0 472.1 687.4 473.8 687.7C475.4 687.9 478.2 685.0 479.1 684.5M462.6 531.8C463.6 535.8 466.0 547.5 468.7 555.9C471.3 564.3 477.0 575.1 478.4 582.2C479.9 589.4 476.3 592.5 477.4 598.7C478.5 604.9 481.8 612.7 484.9 619.4C487.9 626.1 492.9 632.7 495.9 638.8C498.8 644.9 501.4 651.3 502.8 655.8C504.2 660.4 504.0 664.2 504.3 665.9M480.0 596.3C481.8 600.8 487.1 615.9 490.7 623.0C494.2 630.1 498.2 634.5 501.3 639.0C504.4 643.5 508.0 648.3 509.3 650.2M492.4 514.1C492.7 518.2 493.3 530.2 494.6 538.3C495.9 546.3 497.8 554.9 500.3 562.5C502.8 570.0 506.4 577.5 509.7 583.7C512.9 589.9 517.0 593.8 519.6 599.6C522.3 605.3 524.1 611.6 525.3 618.2C526.5 624.9 526.7 633.9 526.7 639.5C526.7 645.2 524.3 648.5 525.4 652.3C526.4 656.0 530.8 658.6 533.0 662.0C535.2 665.4 537.8 671.0 538.7 672.8M504.4 575.1C506.8 578.2 515.5 586.7 518.5 593.8C521.5 600.9 521.5 610.3 522.3 617.7C523.0 625.1 523.0 635.0 523.2 638.5M487.0 580.4C487.9 581.3 490.7 585.2 492.2 585.5C493.7 585.9 495.5 582.9 496.1 582.4M502.5 666.4C500.9 666.3 496.2 666.4 492.8 666.2C489.4 666.0 484.8 664.2 482.1 665.2C479.3 666.1 478.6 669.3 476.5 671.7C474.4 674.0 470.6 677.0 469.4 679.4C468.2 681.9 467.9 685.4 469.2 686.3C470.5 687.2 474.0 686.3 477.1 684.9C480.3 683.5 484.6 679.0 488.2 677.9C491.8 676.9 496.9 678.4 498.6 678.5M498.2 665.1C498.8 664.2 501.1 661.4 502.1 659.8C503.2 658.1 504.0 655.9 504.4 655.2M490.2 680.7C489.2 682.7 485.0 689.2 484.5 692.5C483.9 695.8 485.2 699.8 486.9 700.6C488.6 701.4 492.2 700.1 494.5 697.3C496.9 694.5 500.0 686.1 501.1 683.8M498.8 679.4C501.1 680.1 508.4 683.3 512.4 683.9C516.4 684.4 519.5 683.9 522.8 682.7C526.0 681.4 529.1 678.4 531.8 676.4C534.5 674.5 537.7 672.0 538.9 671.2M509.8 684.3C510.3 686.6 511.1 694.3 512.6 698.3C514.1 702.3 516.8 707.9 518.8 708.2C520.7 708.6 522.7 704.7 524.1 700.5C525.5 696.3 526.6 685.9 527.1 682.9M516.0 684.3L517.3 700.3M529.3 680.3C530.1 682.3 532.3 689.5 534.0 692.2C535.8 694.8 538.8 696.9 540.0 696.2C541.2 695.4 541.5 691.2 541.4 687.7C541.2 684.2 539.5 677.4 539.1 675.4M480.4 484.5C481.2 486.1 485.0 489.3 485.4 494.1C485.8 498.9 484.9 507.7 482.6 513.4C480.4 519.1 473.7 525.8 472.0 528.2M496.1 479.2C495.3 481.8 493.2 489.0 490.9 494.8C488.6 500.5 484.0 510.5 482.6 513.6M512.5 479.8C512.1 482.0 512.2 488.4 509.9 493.3C507.7 498.1 503.0 504.6 498.9 508.9C494.8 513.3 487.7 517.6 485.4 519.3M501.3 487.0C500.4 489.7 498.2 498.0 496.0 503.0C493.8 508.0 489.3 514.6 488.0 516.9M482.7 481.7C483.3 483.9 485.8 490.1 486.7 495.0C487.6 499.9 487.8 508.3 488.0 511.0M520.1 479.5C521.8 480.3 526.7 483.5 530.6 484.0C534.5 484.5 540.3 483.6 543.5 482.6C546.6 481.7 548.6 479.0 549.6 478.3M426.6 447.1C428.5 449.7 434.0 457.2 437.7 462.8C441.4 468.4 445.3 475.0 449.0 480.6C452.7 486.2 456.4 491.3 459.7 496.5C463.0 501.8 467.6 507.7 468.7 512.3C469.7 516.8 466.6 522.0 466.2 523.9M428.0 453.0C428.7 456.1 429.1 465.5 432.0 471.4C434.9 477.4 441.3 483.3 445.6 488.6C449.8 493.8 454.9 498.3 457.3 503.0C459.7 507.7 459.4 514.4 459.8 516.7M457.7 517.1C458.5 513.8 460.9 503.6 462.0 497.3C463.2 491.1 463.5 484.4 464.6 479.4C465.7 474.4 467.9 469.2 468.6 467.2M493.0 474.4C493.6 476.9 496.9 484.3 496.2 489.4C495.5 494.5 492.0 500.2 488.8 505.1C485.6 509.9 480.1 515.2 477.1 518.6C474.1 522.1 471.9 524.7 470.9 525.9M499.8 476.3C500.5 478.6 504.2 484.9 504.2 489.7C504.2 494.5 502.0 500.7 499.8 505.2C497.6 509.7 492.4 514.9 490.9 516.8M513.1 480.8C512.7 483.0 513.1 489.2 510.9 494.1C508.7 499.0 501.6 507.4 499.8 510.1M482.0 471.9C481.3 474.1 478.7 480.7 477.6 485.2C476.4 489.7 475.7 496.7 475.3 499.0M377.3 519.9C377.0 522.8 376.0 531.7 375.4 537.7C374.8 543.7 373.8 549.7 373.8 555.9C373.9 562.2 375.4 572.0 375.7 575.3M395.1 443.3C393.7 444.9 388.9 449.6 386.4 452.6C383.8 455.5 381.9 457.7 380.1 461.2C378.3 464.8 376.7 469.3 375.4 473.9C374.2 478.5 373.1 486.5 372.6 489.0M348.4 487.9C347.4 488.7 344.2 492.1 342.1 492.5C339.9 492.9 337.8 490.0 335.5 490.2C333.3 490.4 330.9 493.3 328.6 493.6C326.4 493.9 323.2 492.2 322.1 491.9M361.1 540.0C360.6 542.8 357.8 552.0 357.7 556.8C357.7 561.6 360.4 566.7 361.0 568.7M326.1 570.2C327.6 569.3 332.0 567.5 335.3 565.3C338.6 563.0 342.3 559.3 346.1 556.7C349.9 554.0 355.9 550.6 357.8 549.4M490.5 456.2C492.1 458.0 495.7 463.7 499.9 467.0C504.1 470.4 510.1 473.8 515.6 476.0C521.2 478.3 527.6 480.5 533.0 480.5C538.5 480.6 543.6 478.7 548.4 476.2C553.3 473.8 559.6 467.4 561.9 465.6M472.9 436.3C475.9 436.7 484.9 439.3 490.9 438.9C496.9 438.5 503.7 435.7 508.9 433.8C514.1 431.9 519.8 428.5 521.9 427.5M475.3 449.7C477.9 449.3 486.1 448.9 490.9 447.4C495.7 446.0 502.0 441.9 504.2 440.8M504.2 465.2C507.2 464.1 516.8 461.5 522.0 458.6C527.2 455.6 531.6 451.5 535.3 447.4C539.0 443.4 542.7 436.3 544.2 434.1M450.5 423.0C450.9 426.1 452.1 435.4 452.9 441.4C453.6 447.3 453.4 453.1 455.0 458.8C456.5 464.4 460.8 472.6 461.9 475.3M446.4 429.7C446.8 433.0 447.6 443.4 448.7 449.7C449.8 456.0 452.4 464.5 453.1 467.4M459.8 423.0C460.5 426.7 463.1 438.6 464.2 445.2C465.3 451.9 466.1 460.0 466.4 463.0M388.7 423.2C389.3 424.5 391.2 430.7 392.7 431.4C394.3 432.1 396.2 426.7 397.8 427.2C399.4 427.8 401.6 433.3 402.3 434.5M431.4 436.3C432.1 434.9 434.7 430.5 435.7 428.1C436.6 425.7 436.8 422.9 437.0 421.8M161.1 323.4C160.0 325.2 156.4 330.4 154.4 334.1C152.4 337.9 150.0 341.9 149.1 345.9C148.3 350.0 148.7 354.6 149.4 358.4C150.2 362.3 153.2 365.5 153.7 369.0C154.1 372.5 153.3 375.8 152.0 379.4C150.7 383.1 147.7 387.2 145.8 390.9C143.9 394.7 141.0 399.2 140.4 402.0C139.7 404.8 140.6 406.5 142.0 407.9C143.3 409.2 146.0 410.6 148.4 410.3C150.8 409.9 154.2 407.5 156.4 405.5C158.5 403.5 160.4 399.4 161.2 398.2M166.0 325.7C164.9 327.4 160.9 332.8 159.3 336.3C157.8 339.9 157.0 343.4 156.7 347.0C156.3 350.6 157.2 356.1 157.3 357.9M147.3 347.0C147.6 348.6 147.8 353.0 148.7 356.3C149.6 359.7 152.0 365.4 152.7 367.3M185.0 326.6C184.0 328.6 180.6 334.2 178.8 338.3C177.0 342.5 175.9 346.6 174.1 351.5C172.4 356.4 170.0 362.3 168.2 367.6C166.4 372.9 164.4 378.1 163.2 383.2C162.0 388.4 161.1 394.0 161.1 398.6C161.0 403.2 161.7 406.4 162.7 410.6C163.7 414.8 165.6 420.1 167.0 423.9C168.4 427.7 170.1 431.3 171.2 433.2C172.2 435.1 172.4 436.0 173.3 435.4C174.2 434.8 175.8 432.0 176.6 429.4C177.4 426.8 177.6 423.0 178.2 419.6C178.7 416.1 179.5 410.6 179.8 408.8M180.2 407.3C180.3 405.1 180.8 398.9 180.7 394.2C180.6 389.6 180.2 384.4 179.9 379.5C179.6 374.7 179.1 369.6 178.9 365.2C178.7 360.8 178.8 357.1 178.8 353.0C178.9 348.9 178.3 344.6 179.4 340.6C180.4 336.7 184.3 331.0 185.3 329.1M176.7 356.3C176.0 358.8 173.1 365.9 172.7 371.0C172.2 376.1 173.3 382.1 174.0 387.0C174.7 391.9 176.0 395.8 176.7 400.3C177.3 404.8 177.8 411.7 178.0 413.9M182.2 346.6C182.4 349.6 183.4 358.6 183.8 364.6C184.3 370.5 184.4 377.0 184.8 382.4C185.2 387.8 186.2 391.8 186.2 397.0C186.2 402.3 185.4 409.8 184.9 413.9C184.5 418.0 183.8 420.5 183.6 421.8M185.9 329.5C186.5 331.8 188.2 338.8 189.4 343.6C190.6 348.3 191.7 353.0 193.0 357.9C194.4 362.9 196.5 368.5 197.5 373.2C198.5 377.9 198.2 383.3 199.0 386.0C199.7 388.7 201.3 389.5 202.1 389.6C202.9 389.7 203.6 389.1 203.7 386.5C203.8 383.9 203.5 378.3 202.7 373.7C202.0 369.1 200.4 363.8 199.2 358.9C198.0 354.0 196.8 348.9 195.5 344.5C194.1 340.0 192.4 335.4 191.2 332.1C190.0 328.9 188.7 326.2 188.2 325.0M214.1 353.3C215.2 355.4 217.9 362.1 220.3 365.7C222.7 369.3 225.9 372.9 228.4 374.9C231.0 376.8 234.2 377.0 235.4 377.4M256.3 342.8C253.8 344.1 245.8 347.5 241.1 350.9C236.3 354.2 231.6 359.0 227.7 362.9C223.8 366.9 221.0 370.2 217.5 374.6C213.9 379.1 210.1 384.3 206.6 389.5C203.1 394.8 199.8 400.7 196.5 406.1C193.3 411.5 190.0 416.6 187.1 421.8C184.3 427.1 181.4 434.2 179.4 437.6C177.4 441.1 176.0 441.9 175.3 442.8M247.3 349.7C244.9 351.7 237.1 357.4 232.7 361.7C228.2 365.9 224.4 370.3 220.7 375.0C216.9 379.7 213.3 385.0 210.0 389.7C206.7 394.4 202.2 401.0 200.7 403.3M265.1 335.5C263.5 336.6 258.6 339.5 255.1 342.0C251.6 344.4 246.9 348.2 244.1 350.2C241.4 352.2 239.5 353.2 238.5 353.8M256.3 342.5C255.4 344.1 252.2 348.3 250.9 352.2C249.7 356.1 249.1 361.7 249.0 366.0C248.8 370.3 249.8 376.0 249.9 378.0M265.3 335.7C264.1 337.1 259.9 341.5 258.0 344.3C256.1 347.2 254.7 351.2 254.0 352.6M232.6 322.5C232.7 324.3 232.9 329.0 233.2 333.0C233.4 337.0 233.0 342.4 233.9 346.5C234.8 350.6 236.8 353.8 238.6 357.4C240.4 361.1 243.3 364.4 244.8 368.2C246.2 372.0 247.0 378.2 247.4 380.2M226.0 327.0C225.6 328.6 223.6 333.0 223.3 336.3C223.1 339.7 223.8 343.6 224.7 347.0C225.6 350.4 228.0 355.0 228.7 356.6M236.2 349.2C237.3 351.8 240.1 359.4 242.5 364.8C244.8 370.1 248.9 376.8 250.5 381.0C252.1 385.3 251.8 388.8 252.0 390.4M228.7 376.3C229.8 377.9 233.1 383.2 235.3 385.7C237.6 388.1 240.4 389.8 242.0 391.0C243.6 392.2 244.2 392.3 244.7 392.6M386.7 368.3C386.6 366.3 385.6 360.1 386.0 356.3C386.4 352.6 387.7 348.8 389.3 345.7C391.0 342.6 393.8 339.9 396.0 337.7C398.2 335.4 401.6 333.2 402.7 332.3M393.3 372.3C393.1 370.3 391.8 363.9 392.0 360.3C392.2 356.8 392.9 353.9 394.7 351.0C396.4 348.1 400.0 345.2 402.7 343.0C405.3 340.8 409.3 338.6 410.7 337.7M388.5 347.9C390.1 348.9 394.3 352.8 397.9 353.9C401.6 355.0 406.0 355.0 410.3 354.7C414.5 354.4 421.2 352.5 423.4 352.0M410.7 353.7C410.4 352.3 409.1 348.3 409.3 345.7C409.6 343.0 410.7 340.1 412.0 337.7C413.3 335.2 415.8 333.0 417.3 331.0C418.9 329.0 420.7 326.6 421.3 325.7M417.3 331.0C417.8 332.6 418.4 337.7 420.0 340.3C421.6 343.0 424.2 345.7 426.7 347.0C429.1 348.3 433.3 348.1 434.7 348.3M395.5 371.7C397.2 372.0 401.7 373.5 405.8 373.1C409.8 372.6 414.9 371.0 419.7 369.0C424.4 367.0 429.5 364.1 434.2 361.0C439.0 357.9 443.8 353.5 448.0 350.4C452.1 347.3 457.2 343.7 459.1 342.3M398.7 376.3C400.9 375.9 407.1 375.4 412.0 373.7C416.9 371.9 423.1 368.6 428.0 365.7C432.9 362.8 437.3 359.2 441.3 356.3C445.3 353.4 450.2 349.7 452.0 348.3M380.0 383.0C381.8 382.1 386.7 379.0 390.7 377.7C394.7 376.3 399.6 375.3 404.0 375.0C408.4 374.7 415.1 375.7 417.3 375.8M377.3 397.7C378.2 396.1 380.2 391.0 382.7 388.3C385.1 385.7 388.2 383.2 392.0 381.7C395.8 380.1 400.7 379.4 405.3 379.0C410.0 378.6 417.6 379.0 420.0 379.0M378.7 405.7C379.6 403.9 381.3 398.1 384.0 395.0C386.7 391.9 390.9 388.9 394.7 387.0C398.4 385.1 404.7 384.3 406.7 383.8M389.2 408.3C390.2 406.7 393.1 401.0 395.3 398.3C397.6 395.6 400.0 393.6 402.7 392.1C405.4 390.5 410.1 389.5 411.6 389.0M450.4 323.1C450.0 324.4 448.0 328.0 447.8 330.9C447.6 333.7 448.7 337.0 449.4 340.1C450.1 343.3 451.1 347.2 451.7 349.9C452.4 352.7 453.1 355.5 453.3 356.6M452.0 323.0C451.8 324.8 450.6 330.1 450.7 333.7C450.8 337.2 452.3 342.6 452.7 344.3M423.2 400.7C425.0 400.8 430.0 402.0 433.8 401.4C437.6 400.9 441.9 399.4 446.0 397.6C450.1 395.8 455.1 392.9 458.4 390.5C461.8 388.1 464.9 384.4 466.1 383.2M428.0 398.5C429.8 397.8 435.4 396.0 439.0 394.6C442.6 393.1 446.2 392.2 449.6 389.9C452.9 387.7 457.3 382.5 458.9 381.1M428.9 376.0C429.8 377.1 432.2 380.6 434.6 382.6C436.9 384.5 439.9 386.4 442.7 387.6C445.5 388.8 448.8 389.9 451.5 389.7C454.3 389.5 457.9 386.8 459.2 386.2M432.4 380.2C433.4 381.0 436.0 384.0 438.4 385.3C440.8 386.6 445.4 387.5 446.8 387.9M450.1 364.3C450.8 364.7 453.3 365.2 454.3 366.8C455.3 368.4 456.7 372.1 456.0 374.0C455.3 375.8 451.8 377.7 450.3 378.0C448.8 378.2 448.0 376.9 446.9 375.4C445.8 374.0 443.6 371.3 443.7 369.4C443.9 367.5 447.0 365.1 447.7 364.2M450.3 367.9C450.7 368.6 452.9 371.0 452.8 372.1C452.6 373.1 450.5 374.3 449.5 374.2C448.6 374.1 447.0 372.2 447.1 371.3C447.1 370.3 449.5 369.1 450.0 368.6M454.7 356.6C455.0 358.1 456.5 362.1 456.7 365.4C457.0 368.7 456.6 373.6 456.3 376.4C456.0 379.1 455.3 380.8 455.0 381.7M451.8 350.5C452.9 352.3 456.4 358.1 458.6 361.4C460.8 364.7 463.0 367.4 465.1 370.2C467.1 373.0 470.1 377.0 471.0 378.4M411.8 400.1C410.7 400.3 407.5 400.7 405.0 401.6C402.5 402.5 399.3 403.4 396.9 405.4C394.5 407.4 392.0 410.5 390.6 413.5C389.3 416.5 388.6 420.1 388.7 423.3C388.8 426.5 390.8 431.2 391.2 432.7M396.1 408.1C397.6 407.3 402.0 404.3 405.2 403.3C408.4 402.4 411.8 402.2 415.5 402.3C419.2 402.4 423.4 403.9 427.7 403.9C431.9 403.8 436.7 403.4 441.3 402.1C445.8 400.9 450.7 398.5 454.7 396.5C458.8 394.5 463.9 391.0 465.7 389.9M399.2 416.9C401.0 415.9 405.6 412.0 409.7 410.8C413.8 409.5 419.6 409.5 423.9 409.2C428.3 408.9 431.6 409.7 435.8 408.8C440.1 407.8 445.1 405.8 449.4 403.4C453.8 400.9 460.0 395.7 462.1 394.2M392.2 416.9C393.1 416.0 395.5 412.9 397.6 411.6C399.7 410.4 403.7 409.7 405.0 409.3M393.4 427.0C393.9 425.6 394.8 420.7 396.6 418.3C398.3 416.0 401.7 414.1 403.9 413.2C406.1 412.2 408.7 412.8 409.7 412.8M400.0 428.3C400.4 427.0 401.3 422.6 402.7 420.3C404.0 418.1 407.1 415.9 408.0 415.0M408.7 409.8C408.6 410.9 407.7 415.5 408.4 416.4C409.1 417.3 412.0 415.4 412.7 415.2M411.4 417.0C411.0 418.8 409.5 425.0 409.0 428.1C408.6 431.1 408.1 432.9 408.7 435.3C409.3 437.6 412.0 441.2 412.6 442.3M459.7 401.4C457.4 403.3 450.1 409.1 446.1 412.9C442.1 416.7 438.4 420.5 435.6 424.2C432.9 428.0 430.9 432.3 429.6 435.5C428.3 438.6 428.0 441.9 427.7 443.1M464.0 403.0C462.9 405.2 459.3 411.9 457.3 416.3C455.3 420.8 453.1 425.2 452.0 429.7C450.9 434.1 450.9 440.8 450.7 443.0M457.3 413.7C456.9 415.9 454.9 422.6 454.7 427.0C454.4 431.4 455.8 438.1 456.0 440.3M435.9 427.0C435.7 427.4 434.3 428.9 434.4 429.7C434.6 430.5 436.6 431.5 437.0 431.9M444.0 416.3C445.3 415.2 449.3 411.7 452.0 409.7C454.7 407.7 458.7 405.2 460.0 404.3M478.7 340.3C480.0 340.6 484.4 341.7 486.7 341.7C488.9 341.7 491.1 340.6 492.0 340.3M490.7 349.7C491.8 351.7 494.2 358.1 497.3 361.7C500.4 365.2 507.3 369.4 509.3 371.0M478.7 383.0C480.4 385.0 485.8 392.1 489.3 395.0C492.9 397.9 496.4 399.1 500.0 400.3C503.6 401.6 508.9 402.1 510.7 402.5M471.3 437.3C473.7 438.0 480.5 441.7 485.7 441.7C490.9 441.7 497.2 439.6 502.6 437.2C508.0 434.8 515.6 428.8 518.2 427.2M394.7 432.3C395.1 433.2 397.1 435.9 397.3 437.7C397.6 439.4 396.2 442.1 396.0 443.0M401.3 429.7L404.0 437.7"/></g>
<g stroke="#8c8c8c" stroke-width="3.2"><path d="M132.3 597.9C134.2 597.8 139.6 597.4 143.4 597.2C147.3 597.0 153.6 596.9 155.7 596.8"/></g>
<g stroke="#585858" stroke-width="1.35"><path d="M143.8 105.7C143.7 102.0 142.3 90.5 143.1 83.4C143.9 76.4 145.7 69.4 148.7 63.4C151.6 57.5 156.1 52.5 160.9 47.9C165.7 43.3 172.2 39.1 177.6 35.7C182.9 32.3 190.5 28.8 193.1 27.4M179.8 42.3C182.0 42.9 187.9 46.2 193.1 45.7C198.3 45.1 205.5 42.0 210.9 39.0C216.3 36.0 222.0 31.8 225.3 27.9C228.7 24.0 230.3 19.0 230.9 15.7C231.5 12.3 229.4 9.2 229.1 7.9M233.1 6.8C234.0 8.8 237.4 14.7 238.2 19.0C239.1 23.3 239.0 27.9 238.2 32.3C237.4 36.8 235.9 41.5 233.6 45.7C231.2 49.8 227.6 53.9 224.2 57.2C220.8 60.6 216.3 63.0 213.1 65.7C210.0 68.4 206.6 72.1 205.3 73.4M146.4 90.1C147.9 89.7 152.7 87.7 155.3 87.9C158.0 88.1 162.8 88.9 162.4 91.2C162.1 93.5 156.3 98.9 153.1 101.7C149.9 104.4 144.5 108.7 143.1 107.9C141.7 107.1 144.1 99.7 144.7 96.8C145.2 93.8 146.1 91.2 146.4 90.1M126.4 111.2C127.6 111.9 131.7 112.9 133.6 115.0C135.4 117.1 137.6 120.2 137.6 123.9C137.5 127.6 134.9 136.2 133.1 137.2C131.3 138.3 128.2 133.1 126.9 130.1C125.6 127.1 125.4 122.1 125.3 119.0C125.3 115.9 126.3 112.5 126.4 111.2M133.1 153.4C135.0 154.4 140.9 157.7 144.7 159.0C148.4 160.3 155.1 158.6 155.8 161.2C156.4 163.9 151.5 173.9 148.7 175.0C145.8 176.1 141.3 171.5 138.7 167.9C136.1 164.3 134.0 155.9 133.1 153.4M140.2 161.2C141.3 161.8 145.6 162.7 146.4 164.6C147.3 166.4 145.5 171.0 145.3 172.3M202.0 75.7C203.5 75.0 207.9 71.0 210.9 71.9C213.9 72.8 219.5 78.9 220.2 81.2C221.0 83.6 217.6 85.9 215.3 86.1C213.0 86.3 208.9 83.9 206.4 82.3C204.0 80.8 201.8 77.7 200.9 76.8M235.3 94.6C235.9 95.7 238.8 98.9 238.9 101.2C239.0 103.5 237.0 108.3 235.8 108.3C234.6 108.4 231.9 104.0 231.8 101.7C231.7 99.4 234.7 95.7 235.3 94.6M218.0 113.4C218.7 114.4 222.4 117.1 222.4 119.0C222.4 120.9 219.5 124.9 218.0 125.0C216.5 125.1 213.6 121.4 213.6 119.4C213.6 117.5 217.3 114.4 218.0 113.4M179.8 140.1C180.8 141.1 185.9 143.9 186.0 146.1C186.1 148.3 182.3 153.2 180.2 153.4C178.1 153.7 173.6 149.7 173.6 147.4C173.5 145.2 178.7 141.3 179.8 140.1M226.3 135.4C227.2 138.1 230.6 146.1 231.6 151.3C232.6 156.5 233.0 161.6 232.2 166.9C231.4 172.1 229.5 179.0 226.6 182.9C223.7 186.9 219.1 189.7 214.9 190.6C210.7 191.6 205.9 190.6 201.2 188.7C196.6 186.8 191.4 182.4 186.9 179.2C182.3 176.1 177.9 172.3 174.2 169.7C170.4 167.1 165.9 164.9 164.3 163.9M215.3 147.9C214.8 149.8 211.6 157.0 212.0 159.4C212.4 161.9 217.0 162.2 218.0 162.8M183.1 175.0C184.1 174.6 187.0 173.0 189.1 172.3C191.2 171.7 195.5 170.5 195.8 171.2C196.1 172.0 191.7 175.9 190.9 176.8M182.0 197.9L189.1 190.1M197.6 192.3L206.4 194.6M247.6 110.1C249.2 110.9 254.4 110.9 257.6 114.6C260.7 118.3 264.2 126.4 266.4 132.3C268.7 138.3 269.4 144.9 270.9 150.1C272.4 155.3 274.6 161.2 275.3 163.4M227.6 123.4C229.2 122.9 234.2 122.1 237.6 120.1C240.9 118.1 245.9 112.7 247.6 111.2M275.3 159.0C276.8 158.7 281.3 157.4 284.2 157.2C287.2 157.0 291.6 157.8 293.1 157.9M295.3 154.6C297.2 154.2 302.7 154.2 306.4 152.3C310.1 150.5 315.7 144.9 317.6 143.4M384.7 1.7C383.1 6.0 378.7 18.7 375.3 27.9C371.9 37.1 368.7 46.0 364.2 56.8C359.8 67.5 353.5 82.3 348.7 92.3C343.9 102.3 339.2 109.7 335.3 116.8C331.4 123.9 327.0 132.0 325.3 135.0M397.1 5.7C397.6 9.0 400.3 19.4 400.0 25.7C399.7 32.0 398.0 36.4 395.3 43.4C392.7 50.5 388.3 59.4 384.2 67.9C380.1 76.4 375.3 86.4 370.9 94.6C366.4 102.7 361.6 110.8 357.6 116.8C353.5 122.8 348.3 128.3 346.4 130.6M322.0 141.2C324.6 139.8 331.6 135.3 337.6 132.8C343.5 130.3 350.9 127.7 357.6 126.1C364.2 124.6 371.9 124.1 377.6 123.4C383.2 122.8 389.0 122.5 391.3 122.3M397.6 159.0C395.3 160.5 387.2 165.9 384.2 167.9C381.3 169.9 380.5 170.7 379.8 171.2M340.9 143.4C341.3 146.0 341.8 153.8 343.1 159.0C344.4 164.2 346.3 169.3 348.7 174.6C351.1 179.8 354.9 186.5 357.6 190.6C360.2 194.6 363.5 197.6 364.7 199.0M286.4 173.6C288.0 172.4 292.1 169.4 295.8 166.4C299.5 163.4 304.9 158.6 308.5 155.4C312.1 152.3 315.8 148.7 317.2 147.4M317.6 143.4C318.1 144.6 319.4 149.8 320.9 150.6C322.4 151.3 326.0 149.4 326.4 147.9C326.9 146.3 324.6 142.1 323.3 141.2C322.0 140.3 319.4 142.1 318.7 142.3M328.7 141.2C329.8 140.7 333.4 139.4 335.3 137.9C337.3 136.4 339.1 131.8 340.2 132.3C341.3 132.9 341.7 139.7 342.0 141.2M295.3 143.4C296.1 146.1 298.7 153.9 300.2 159.4C301.7 165.0 302.9 170.9 304.2 176.8C305.6 182.6 307.6 191.6 308.2 194.6M282.0 157.9C283.5 157.8 288.1 157.0 290.9 157.2C293.7 157.4 297.4 158.7 298.7 159.0M282.0 163.4L290.9 162.3M386.4 170.6C389.8 169.6 399.8 167.2 406.4 164.6C413.1 161.9 420.5 158.1 426.4 154.6C432.4 151.0 437.7 146.6 442.0 143.4C446.3 140.3 450.5 137.0 452.2 135.7M474.9 100.1C473.5 103.3 469.7 113.2 466.4 119.0C463.2 124.8 458.6 130.6 455.3 135.0C452.1 139.4 448.3 143.9 446.9 145.7M474.9 100.1C476.1 101.8 480.7 105.9 482.0 110.1C483.3 114.4 483.9 119.4 482.4 125.7C481.0 132.0 477.3 140.1 473.1 147.9C469.0 155.7 462.7 165.2 457.6 172.3C452.4 179.4 445.7 186.1 442.0 190.6C438.3 195.0 436.4 197.6 435.3 199.0M483.1 119.0C482.2 122.0 480.9 129.7 477.6 136.8C474.2 143.8 468.5 153.1 463.1 161.2C457.7 169.4 450.5 178.6 445.3 185.7C440.1 192.7 434.2 200.5 432.0 203.4M487.6 252.3C488.1 256.0 489.0 267.5 490.9 274.6C492.7 281.6 496.6 288.9 498.7 294.6C500.8 300.2 502.7 306.0 503.6 308.3M493.1 214.6C491.7 214.2 487.4 210.5 484.4 212.3C481.5 214.2 478.4 219.4 475.6 225.7C472.7 232.0 469.6 242.0 467.6 250.1C465.5 258.3 463.5 266.8 463.1 274.6C462.7 282.3 463.9 291.1 465.3 296.8C466.8 302.4 470.9 306.4 472.0 308.3M467.6 287.9C466.1 287.1 461.6 282.7 458.7 283.4C455.7 284.2 452.0 288.3 449.8 292.3C447.6 296.4 446.4 303.4 445.3 307.9C444.2 312.3 443.5 317.1 443.1 319.0M503.3 318.6C506.1 314.9 514.3 303.1 520.2 296.6C526.1 290.2 532.1 285.1 538.9 280.0C545.7 275.0 557.5 268.6 561.2 266.3M536.4 319.0C537.6 315.4 540.5 304.2 543.1 297.2C545.7 290.3 550.5 280.6 552.0 277.2M576.4 247.0C579.0 244.9 586.8 237.9 592.0 234.6C597.2 231.2 602.4 228.5 607.6 227.0C612.7 225.5 619.4 225.1 623.1 225.7C626.8 226.2 628.3 226.4 629.8 230.1C631.3 233.8 632.0 241.2 632.0 247.9C632.0 254.6 631.3 264.6 629.8 270.1C628.3 275.7 626.4 278.6 623.1 281.2C619.8 283.9 614.2 285.5 609.8 286.1C605.3 286.7 600.1 287.1 596.4 284.8C592.7 282.5 590.9 278.6 587.6 272.3C584.2 266.0 578.3 251.2 576.4 247.0M640.9 319.0C643.1 315.7 649.2 307.6 654.2 299.4C659.3 291.3 668.3 275.0 671.1 270.1M645.3 279.0C646.4 282.7 650.5 294.6 652.0 301.2C653.5 307.9 653.9 316.0 654.2 319.0M643.1 299.0L645.3 319.0M159.8 189.2C162.4 189.6 170.9 191.8 175.3 191.4C179.8 191.1 184.6 187.7 186.4 187.0M186.4 185.8C189.0 186.6 196.7 190.0 202.2 190.1C207.7 190.1 214.9 188.2 219.3 186.3C223.8 184.4 227.1 179.8 228.7 178.5M188.7 192.3C187.6 194.2 183.5 199.7 182.0 203.4C180.5 207.1 180.1 212.7 179.8 214.6M225.3 210.1C224.4 212.3 221.2 219.0 219.8 223.4C218.3 227.9 217.0 232.3 216.7 236.8C216.3 241.2 218.1 245.3 217.6 250.1C217.0 254.9 214.2 261.2 213.1 265.7C212.0 270.1 210.9 272.3 210.9 276.8C210.9 281.2 212.4 287.9 213.1 292.3C213.9 296.8 213.1 300.1 215.3 303.4C217.6 306.8 223.5 309.4 226.4 312.3C229.4 315.3 231.6 317.5 233.1 321.2C234.6 324.9 235.3 330.0 235.3 334.6C235.3 339.1 233.5 346.0 233.1 348.3M215.3 232.3C215.8 234.6 218.2 240.5 218.0 245.7C217.8 250.9 214.9 260.5 214.2 263.4M206.4 286.8L208.7 290.1M172.0 294.6C170.7 298.3 166.4 311.5 164.2 316.8C162.0 322.0 159.6 324.6 158.7 326.1M270.9 179.0C270.1 181.2 266.4 187.9 266.4 192.3C266.4 196.8 271.3 201.2 270.9 205.7C270.5 210.1 263.9 216.0 264.2 219.0C264.6 222.0 270.1 223.4 273.1 223.4C276.1 223.4 280.5 219.7 282.0 219.0M295.3 187.9C296.4 190.1 302.0 196.0 302.0 201.2C302.0 206.4 297.6 214.7 295.3 219.0C293.1 223.3 289.8 225.7 288.7 227.0M266.8 250.2C268.7 250.3 274.4 250.8 278.0 250.8C281.6 250.9 286.6 250.6 288.4 250.5M253.1 220.1L253.6 224.8M290.9 261.2C293.1 262.3 300.5 265.3 304.2 267.9C307.9 270.5 310.1 275.3 313.1 276.8C316.1 278.3 320.5 276.8 322.0 276.8M342.0 145.7C342.7 148.6 344.2 157.1 346.4 163.4C348.7 169.7 352.0 177.1 355.3 183.4C358.7 189.7 363.5 194.9 366.4 201.2C369.4 207.5 371.8 215.3 373.1 221.2C374.4 227.1 375.2 232.3 374.4 236.8C373.7 241.3 369.6 246.4 368.7 248.3M290.9 252.3C292.0 253.4 294.6 257.6 297.6 259.0C300.5 260.4 306.8 260.5 308.7 260.8M288.7 259.0C289.8 260.3 293.1 266.0 295.3 266.8C297.6 267.5 300.9 264.0 302.0 263.4M310.9 263.4C314.2 265.0 323.9 272.7 330.9 272.8C337.9 272.9 346.7 268.0 353.1 263.9C359.5 259.7 366.4 250.6 369.1 247.9M357.6 192.3L379.8 172.8M384.2 170.1C388.7 169.0 402.7 166.4 410.9 163.4C419.0 160.5 426.4 156.4 433.1 152.3C439.8 148.3 447.9 141.2 450.9 139.0M476.4 139.0C474.4 143.1 470.0 153.8 464.2 163.4C458.5 173.1 449.4 186.8 442.0 196.8C434.6 206.8 427.2 215.7 419.8 223.4C412.4 231.2 405.0 238.0 397.6 243.4C390.1 248.9 379.0 253.8 375.3 255.9M308.7 272.3C311.3 276.0 318.7 287.5 324.2 294.6C329.8 301.6 336.4 309.0 342.0 314.6C347.6 320.1 352.3 325.2 357.6 327.9C362.8 330.6 370.9 330.1 373.6 330.6M363.1 247.9C365.1 250.5 371.1 258.6 375.3 263.4C379.6 268.3 385.1 272.0 388.7 276.8C392.2 281.6 395.6 286.8 396.7 292.3C397.8 297.9 396.7 304.9 395.3 310.1C394.0 315.4 389.8 321.6 388.7 323.9M362.9 248.1C364.3 251.0 368.8 260.2 371.2 265.7C373.6 271.2 375.3 276.5 377.2 281.2C379.2 286.0 382.1 291.8 383.1 294.0M380.9 293.4C381.8 293.6 385.9 293.9 386.4 294.6C387.0 295.2 384.6 296.8 384.2 297.2M470.9 241.2C470.0 244.9 466.4 256.0 465.3 263.4C464.2 270.9 464.4 282.3 464.2 286.1M464.2 284.6C462.7 284.4 457.9 281.8 455.3 283.4C452.7 285.1 450.3 289.4 448.7 294.6C447.0 299.7 445.5 307.1 445.3 314.6C445.2 322.0 447.4 334.9 447.8 339.0M547.6 278.6C543.2 281.8 529.2 290.5 520.9 297.8C512.7 305.1 504.6 313.8 498.2 322.4C491.9 331.0 486.6 340.0 482.7 349.3C478.9 358.6 476.6 369.3 475.2 378.2C473.8 387.1 473.9 394.4 474.4 402.9C474.9 411.4 476.2 420.9 478.3 429.2C480.5 437.5 483.5 445.4 487.2 452.8C491.0 460.1 497.3 468.6 501.1 473.2C504.9 477.8 508.5 479.1 510.0 480.2M543.3 287.8C540.5 291.7 531.5 302.8 526.9 311.1C522.4 319.4 518.7 329.0 516.0 337.8C513.4 346.6 512.0 355.6 511.1 363.8C510.2 372.0 510.1 379.9 510.8 387.0C511.4 394.1 512.7 400.7 515.1 406.5C517.5 412.3 520.9 417.8 525.1 421.9C529.3 426.0 534.6 429.0 540.5 430.9C546.4 432.9 553.4 434.5 560.5 433.7C567.5 432.8 575.8 429.3 582.6 426.0C589.5 422.7 595.7 418.3 601.4 413.8C607.1 409.2 612.4 404.7 616.8 398.8C621.2 392.9 624.6 385.4 627.9 378.2C631.3 371.1 634.6 363.9 637.0 355.9C639.4 347.8 641.2 339.5 642.3 329.8C643.5 320.2 643.7 303.4 644.0 298.1M545.3 292.3C545.7 297.5 547.6 313.4 547.6 323.4C547.6 333.4 546.8 342.3 545.3 352.3C543.9 362.3 540.9 373.4 538.7 383.4C536.4 393.5 533.1 407.9 532.0 412.8M565.3 419.0C569.0 417.5 580.1 415.7 587.6 410.1C595.0 404.6 603.4 392.7 609.8 385.7C616.1 378.6 623.1 370.9 625.8 367.9M445.3 319.0C445.5 320.9 445.5 326.0 446.4 330.1C447.4 334.2 448.9 339.0 450.9 343.4C452.9 347.9 456.3 352.0 458.7 356.8C461.1 361.6 463.5 368.2 465.3 372.3C467.2 376.5 469.0 380.1 469.8 381.7M454.2 285.7C452.7 287.9 447.0 293.7 445.3 299.0C443.7 304.3 444.4 314.2 444.2 317.2M464.2 279.0C464.4 282.0 464.0 291.5 465.3 296.8C466.6 302.0 470.9 308.3 472.0 310.6M472.0 436.8C475.0 437.0 483.9 438.6 489.8 438.1C495.7 437.6 502.4 435.4 507.6 433.7C512.7 432.0 518.7 428.9 520.9 427.9M470.9 452.3C473.7 451.6 482.9 449.3 487.6 447.9C492.2 446.5 496.8 444.6 498.7 443.9M670.9 279.0C669.2 283.4 664.0 296.0 660.9 305.7C657.7 315.3 655.3 326.4 652.0 336.8C648.7 347.1 645.3 357.5 640.9 367.9C636.4 378.3 630.9 389.0 625.3 399.0C619.8 409.0 614.2 418.6 607.6 427.9C600.9 437.1 593.1 446.8 585.3 454.6C577.6 462.3 566.4 470.5 560.9 474.6C555.3 478.6 553.5 478.3 552.0 479.0M667.6 292.3C665.7 298.3 660.5 316.0 656.4 327.9C652.4 339.7 647.9 352.3 643.1 363.4C638.3 374.6 633.1 384.6 627.6 394.6C622.0 404.6 615.7 414.9 609.8 423.4C603.9 432.0 598.7 438.3 592.0 445.7C585.3 453.1 575.7 462.3 569.8 467.9C563.9 473.4 558.7 477.1 556.4 479.0M645.3 287.9C646.8 292.0 652.7 304.6 654.2 312.3C655.7 320.1 654.7 329.4 654.2 334.6C653.7 339.7 651.6 342.0 651.1 343.4M672.0 394.6C669.0 398.3 660.9 410.5 654.2 416.8C647.6 423.1 639.4 428.6 632.0 432.3C624.6 436.1 613.5 438.3 609.8 439.4M592.0 279.0C593.5 280.0 596.8 283.8 600.9 284.8C605.0 285.7 611.8 285.6 616.4 284.8C621.1 284.0 626.8 280.9 628.9 280.1M177.6 434.6C176.3 438.6 171.6 450.9 170.0 459.0C168.4 467.1 167.8 474.9 167.8 483.4C167.8 492.0 168.7 502.6 170.0 510.1C171.3 517.6 174.4 525.3 175.3 528.3M252.0 385.7C252.9 389.4 254.8 400.5 257.6 407.9C260.3 415.3 264.6 423.4 268.7 430.1C272.7 436.8 277.2 442.3 282.0 447.9C286.8 453.4 292.7 458.9 297.6 463.4C302.4 468.0 308.7 473.1 310.9 475.0M322.0 456.8C320.5 459.0 316.1 466.2 313.1 470.1C310.1 474.0 305.7 478.6 304.2 480.3M308.7 474.6C309.8 476.8 313.1 483.7 315.3 487.9C317.6 492.0 320.9 497.5 322.0 499.4M132.7 430.4C132.3 431.1 130.9 431.6 130.3 434.3C129.8 437.0 129.9 442.4 129.6 446.7C129.2 451.0 128.1 456.7 128.4 460.4C128.7 464.1 129.4 465.9 131.3 469.1C133.3 472.3 137.5 476.9 139.9 479.7C142.4 482.5 143.3 484.6 146.1 485.9C149.0 487.1 152.9 487.8 157.0 487.1C161.1 486.3 168.3 482.4 170.6 481.5M148.7 486.1C150.1 485.7 153.9 485.0 157.6 483.9C161.3 482.8 168.7 480.2 170.9 479.4M183.6 455.1C184.1 457.7 184.4 465.1 186.3 470.6C188.2 476.1 191.7 482.8 195.1 488.3C198.5 493.8 202.9 498.8 206.7 503.5C210.5 508.2 215.0 511.6 218.1 516.5C221.2 521.4 224.2 530.2 225.4 533.0M188.7 454.6L202.0 463.9M210.9 474.6C213.1 477.1 219.8 486.3 224.2 490.1C228.7 493.9 235.3 496.0 237.6 497.2M215.3 514.6C216.1 515.7 217.9 518.0 219.8 521.2C221.6 524.4 225.3 531.6 226.4 533.7M197.6 476.8C198.3 479.4 199.4 487.4 202.0 492.3C204.6 497.2 211.3 503.8 213.1 506.1M129.8 507.9C129.4 510.1 127.0 516.4 127.6 521.2C128.1 526.0 130.3 532.0 133.1 536.8C135.9 541.6 140.1 546.7 144.2 550.1C148.3 553.5 155.3 556.0 157.6 557.2M135.3 514.6C138.7 516.0 149.4 521.4 155.3 523.4C161.3 525.5 168.3 526.4 170.9 527.0M130.9 519.0C132.4 522.0 135.7 531.6 139.8 536.8C143.9 542.0 149.4 546.9 155.3 550.1C161.3 553.3 172.0 554.9 175.3 555.9M88.7 554.6C91.6 552.7 100.1 546.0 106.4 543.4C112.7 540.9 123.1 540.1 126.4 539.4M142.0 556.8C144.6 556.0 152.0 552.7 157.6 552.3C163.1 552.0 168.7 553.7 175.3 554.6C182.0 555.4 193.9 556.8 197.6 557.2M246.4 532.3C250.1 532.0 261.3 530.1 268.7 530.1C276.1 530.1 287.2 532.0 290.9 532.3M255.3 536.8C259.0 537.9 270.9 541.6 277.6 543.4C284.2 545.3 289.4 546.7 295.3 547.9C301.3 549.1 310.1 550.1 313.1 550.6M290.9 532.3C293.1 534.2 300.5 540.0 304.2 543.4C307.9 546.9 311.6 551.2 313.1 552.8M282.0 383.4C284.6 382.7 292.0 380.5 297.6 379.0C303.1 377.5 312.4 375.3 315.3 374.6M353.1 412.3C351.3 415.7 346.1 425.3 342.0 432.3C337.9 439.4 332.7 448.2 328.7 454.6C324.6 460.9 319.4 467.9 317.6 470.6M282.0 456.8C284.2 459.0 290.9 466.9 295.3 470.1C299.8 473.3 306.4 474.9 308.7 475.9M304.2 476.8L319.8 467.9M310.9 479.0C311.6 481.2 313.1 489.0 315.3 492.3C317.6 495.7 320.5 498.6 324.2 499.0C327.9 499.4 333.5 496.3 337.6 494.6C341.6 492.8 346.8 489.4 348.7 488.3M326.4 494.6C328.3 494.2 333.9 493.6 337.6 492.3C341.3 491.1 347.2 486.6 348.7 487.0C350.1 487.4 346.8 493.3 346.4 494.6M346.4 496.8C349.4 494.6 358.7 487.1 364.2 483.4C369.8 479.7 376.1 478.3 379.8 474.6C383.5 470.9 383.5 464.9 386.4 461.2C389.4 457.6 395.7 454.2 397.6 452.8M375.3 490.1L379.8 474.6M308.7 516.8C311.6 515.3 321.3 509.7 326.4 507.9C331.6 506.0 337.6 506.0 339.8 505.7M346.4 319.0C348.3 320.1 353.5 324.2 357.6 325.7C361.6 327.1 366.8 328.3 370.9 327.9C375.0 327.5 379.4 324.9 382.0 323.4C384.6 322.0 385.7 319.7 386.4 319.0M450.9 412.3C450.1 416.0 446.8 426.4 446.4 434.6C446.1 442.7 446.8 452.3 448.7 461.2C450.5 470.1 455.3 479.7 457.6 487.9C459.8 496.0 461.6 504.9 462.0 510.1C462.4 515.3 460.1 517.5 459.8 519.0M459.8 407.9C459.0 411.6 455.7 422.0 455.3 430.1C455.0 438.3 455.7 448.6 457.6 456.8C459.4 464.9 464.2 471.6 466.4 479.0C468.7 486.4 470.1 494.6 470.9 501.2C471.6 507.9 470.9 516.0 470.9 519.0M428.7 450.1C429.8 453.4 432.4 463.8 435.3 470.1C438.3 476.4 442.4 483.0 446.4 487.9C450.5 492.8 457.6 497.5 459.8 499.4M415.3 519.0C417.2 517.1 422.7 510.8 426.4 507.9C430.1 505.0 435.7 502.7 437.6 501.7M82.3 556.8C84.7 554.9 91.4 548.6 96.8 545.7C102.1 542.7 109.4 540.6 114.6 539.0C119.7 537.4 125.7 536.4 127.9 535.9M79.0 561.2C81.2 559.4 87.1 553.3 92.3 550.1C97.5 547.0 104.6 544.3 110.1 542.3C115.7 540.3 123.1 538.8 125.7 538.1M76.8 562.3C76.4 563.6 75.7 567.0 74.6 570.1C73.4 573.3 71.6 577.4 70.1 581.2C68.6 585.0 66.4 590.9 65.7 592.8M79.0 569.0L75.7 578.1M72.3 585.7C70.9 590.1 66.8 602.7 63.4 612.3C60.1 622.0 56.4 633.1 52.3 643.4C48.3 653.8 43.4 664.6 39.0 674.6C34.6 684.6 29.2 696.0 25.7 703.4C22.1 710.9 19.2 716.4 17.9 719.0M110.1 564.6C110.9 568.1 113.6 578.4 114.6 585.7C115.5 592.9 115.9 601.2 115.7 607.9C115.5 614.6 114.0 620.5 113.4 625.7C112.9 630.9 112.5 636.8 112.3 639.0M119.0 579.0C119.6 582.3 121.6 592.7 122.3 599.0C123.1 605.3 124.0 610.8 123.4 616.8C122.9 622.8 119.7 632.0 119.0 635.0M119.0 643.4C117.1 645.7 112.0 652.7 107.9 656.8C103.8 660.9 98.6 664.5 94.6 667.9C90.5 671.3 85.3 675.7 83.4 677.2M141.2 555.7C142.0 557.0 143.4 561.8 145.7 563.4C147.9 565.1 149.4 565.7 154.6 565.7C159.7 565.7 169.4 563.4 176.8 563.4C184.2 563.4 191.6 565.4 199.0 565.7C206.4 565.9 217.5 564.9 221.2 564.8M152.3 566.8C151.6 568.1 147.9 571.4 147.9 574.6C147.9 577.7 149.7 582.3 152.3 585.7C154.9 589.0 159.4 592.7 163.4 594.6C167.5 596.4 172.3 596.9 176.8 596.8C181.2 596.6 185.7 595.1 190.1 593.7C194.6 592.2 201.2 588.9 203.4 587.9M161.2 581.2C162.3 582.7 164.2 588.0 167.9 590.1C171.6 592.2 177.5 593.7 183.4 593.7C189.4 593.7 197.1 591.4 203.4 590.1C209.7 588.8 215.3 586.8 221.2 585.7C227.1 584.6 236.0 583.8 239.0 583.4M190.1 597.9C192.3 597.7 199.0 598.1 203.4 596.8C207.9 595.5 212.3 592.0 216.8 590.1C221.2 588.3 227.9 586.4 230.1 585.7M210.1 612.3C209.4 614.6 205.3 621.2 205.7 625.7C206.0 630.1 209.4 635.6 212.3 639.0C215.3 642.4 221.6 644.9 223.4 646.1M223.4 636.8C224.9 636.0 229.7 633.8 232.3 632.3C234.9 630.9 237.9 628.6 239.0 627.9M312.3 519.0C312.0 521.6 309.6 529.4 310.1 534.6C310.7 539.7 312.7 546.0 315.7 550.1C318.6 554.2 323.3 557.1 327.9 559.0C332.5 560.9 338.3 562.4 343.4 561.7C348.6 560.9 354.2 558.0 359.0 554.6C363.8 551.1 369.0 546.0 372.3 541.2C375.7 536.4 377.7 529.4 379.0 525.7C380.3 522.0 380.1 520.1 380.3 519.0M290.1 532.3C292.3 531.2 299.7 527.9 303.4 525.7C307.1 523.4 310.9 520.1 312.3 519.0M239.0 534.6C241.2 534.0 247.5 531.4 252.3 531.4C257.1 531.4 262.7 533.3 267.9 534.6C273.1 535.8 278.6 538.0 283.4 539.0C288.3 540.0 294.6 540.1 296.8 540.3M261.2 552.3C264.2 552.0 273.1 550.9 279.0 550.1C284.9 549.4 291.6 548.4 296.8 547.9C302.0 547.4 307.9 547.1 310.1 547.0M283.4 590.1C285.7 588.3 292.3 582.3 296.8 579.0C301.2 575.7 306.4 572.7 310.1 570.1C313.8 567.5 317.5 564.6 319.0 563.4M239.0 585.7C240.1 585.3 243.8 583.4 245.7 583.4C247.5 583.4 249.6 584.6 250.1 585.7C250.7 586.8 250.5 588.8 249.0 590.1C247.5 591.4 242.9 593.3 241.2 593.7C239.6 594.0 239.4 592.6 239.0 592.3M246.8 570.1C247.1 571.6 248.8 576.8 249.0 579.0C249.2 581.2 248.1 582.7 247.9 583.4M323.9 581.3C325.5 579.4 330.0 572.9 333.4 569.9C336.8 567.0 340.8 566.4 344.2 563.8C347.5 561.2 350.4 558.1 353.4 554.3C356.5 550.5 361.1 543.4 362.6 541.2M341.4 577.5C344.2 576.9 352.7 574.4 358.5 573.4C364.2 572.5 370.1 572.8 376.1 572.0C382.0 571.2 388.2 570.1 394.3 568.9C400.3 567.6 406.8 566.0 412.3 564.5C417.8 563.0 422.1 561.8 427.2 560.1C432.3 558.3 437.9 556.8 442.8 554.0C447.8 551.2 453.3 547.3 457.2 543.5C461.0 539.6 463.8 535.2 466.0 531.0C468.2 526.9 469.5 520.7 470.2 518.6M374.6 573.4C374.4 570.7 373.1 562.5 373.4 556.8C373.8 551.0 375.6 544.6 376.8 539.0C377.9 533.4 379.7 526.0 380.3 523.4M403.4 542.3L419.0 543.4M427.9 559.0C429.7 558.6 434.9 558.6 439.0 556.8C443.1 554.9 450.1 549.4 452.3 547.9M299.0 623.4C298.8 625.7 299.0 632.3 297.9 636.8C296.8 641.3 293.3 648.3 292.3 650.6M267.9 614.6C266.8 617.1 263.4 624.6 261.2 630.1C259.0 635.7 255.7 642.3 254.6 647.9C253.4 653.4 253.1 659.0 254.6 663.4C256.0 667.9 259.7 672.6 263.4 674.6C267.1 676.5 272.7 676.5 276.8 675.0C280.9 673.5 284.6 669.8 287.9 665.7C291.2 661.5 294.9 655.3 296.8 650.1C298.6 644.9 298.6 637.1 299.0 634.6M290.1 605.7C288.6 606.4 283.6 607.9 281.2 610.1C278.8 612.3 277.1 614.9 275.7 619.0C274.2 623.1 273.6 628.9 272.3 634.6C271.0 640.2 268.6 649.7 267.9 652.8M239.0 643.4C240.1 641.6 243.1 635.6 245.7 632.3C248.3 629.1 253.1 625.3 254.6 623.9M270.1 594.6C269.9 596.4 269.4 602.0 269.0 605.7C268.6 609.4 268.1 614.9 267.9 616.8M463.4 536.8C464.6 540.9 467.9 552.3 470.1 561.2C472.3 570.1 475.3 583.4 476.8 590.1C478.3 596.9 478.6 599.7 479.0 601.7M479.0 670.1C477.7 671.2 472.9 674.6 471.2 676.8C469.6 679.0 468.4 681.7 469.0 683.4C469.6 685.1 472.9 686.8 474.6 687.0C476.2 687.2 478.3 685.1 479.0 684.8M462.7 532.3C463.8 536.3 466.7 547.9 469.3 556.3C472.0 564.8 477.3 575.9 478.7 583.0C480.0 590.1 476.2 592.8 477.3 599.0C478.4 605.2 482.2 613.7 485.3 620.3C488.4 627.0 493.1 633.2 496.0 639.0C498.9 644.8 501.3 650.6 502.7 655.0C504.0 659.4 503.8 663.9 504.0 665.7M504.0 575.0C506.2 578.1 514.2 586.6 517.3 593.7C520.4 600.8 521.5 610.1 522.7 617.7C523.8 625.2 524.0 635.4 524.3 639.0M486.7 580.3C487.6 581.2 490.2 585.4 492.0 585.7C493.8 585.9 496.4 582.6 497.3 581.9M502.7 665.7C501.1 665.7 496.7 665.8 493.3 665.7C490.0 665.5 485.3 663.7 482.7 664.6C480.0 665.5 479.6 668.6 477.3 671.0C475.1 673.4 470.7 676.5 469.3 679.0C468.0 681.5 468.0 685.0 469.3 685.9C470.7 686.8 474.2 685.7 477.3 684.3C480.4 683.0 484.4 678.8 488.0 677.9C491.6 677.0 496.9 678.8 498.7 679.0M498.7 665.7C499.3 664.8 501.8 662.1 502.7 660.3C503.6 658.6 503.8 655.9 504.0 655.0M490.7 680.3C489.8 682.3 486.0 689.0 485.3 692.3C484.7 695.7 485.3 699.4 486.7 700.3C488.0 701.2 491.1 700.3 493.3 697.7C495.6 695.0 499.1 686.6 500.3 684.3M509.3 684.3C509.8 686.6 510.4 693.7 512.0 697.7C513.6 701.7 516.7 707.9 518.7 708.3C520.7 708.8 522.6 704.5 524.0 700.3C525.4 696.2 526.4 686.1 526.9 683.3M529.3 680.3C530.2 682.3 532.9 689.6 534.7 692.3C536.4 695.0 538.9 697.5 540.0 696.6C541.1 695.7 541.6 690.6 541.3 687.0C541.1 683.4 539.1 677.2 538.7 675.3M480.0 484.3C480.9 486.1 484.9 490.1 485.3 495.0C485.8 499.9 484.9 508.2 482.7 513.7C480.4 519.1 473.8 525.2 472.0 527.5M496.0 479.0C495.1 481.7 492.9 489.2 490.7 495.0C488.4 500.8 484.0 510.6 482.7 513.7M512.0 479.0C511.6 481.2 511.6 487.4 509.3 492.3C507.1 497.2 502.7 503.8 498.7 508.3C494.7 512.9 487.6 517.7 485.3 519.5M428.7 454.1C429.4 457.1 430.1 466.0 433.1 471.9C436.1 477.8 442.4 484.5 446.4 489.7C450.5 494.9 455.3 498.6 457.6 503.0C459.8 507.4 459.4 514.1 459.8 516.3M457.6 516.3C458.3 513.0 460.9 502.6 462.0 496.3C463.1 490.0 463.1 483.4 464.2 478.6C465.3 473.7 467.9 469.3 468.7 467.4M493.1 474.1C493.5 476.7 496.1 484.5 495.3 489.7C494.6 494.9 491.6 500.4 488.7 505.2C485.7 510.0 480.5 515.1 477.6 518.6C474.6 522.0 472.0 524.5 470.9 525.7M377.6 520.8C377.2 523.7 375.9 532.6 375.3 538.6C374.8 544.5 374.2 550.4 374.2 556.3C374.2 562.3 375.1 571.1 375.3 574.1M395.3 443.0C393.9 444.5 389.0 448.9 386.4 451.9C383.9 454.9 381.6 457.1 379.8 460.8C377.9 464.5 376.4 469.3 375.3 474.1C374.2 478.9 373.5 487.1 373.1 489.7M348.7 487.4C347.6 488.2 344.2 491.5 342.0 491.9C339.8 492.3 337.6 489.3 335.3 489.7C333.1 490.0 330.9 493.7 328.7 494.1C326.4 494.5 323.1 492.3 322.0 491.9M473.1 436.3C476.1 436.7 485.0 438.9 490.9 438.6C496.8 438.2 503.5 436.0 508.7 434.1C513.9 432.3 519.8 428.6 522.0 427.4M450.9 423.0C451.3 426.0 452.4 434.9 453.1 440.8C453.9 446.7 453.9 452.6 455.3 458.6C456.8 464.5 460.9 473.4 462.0 476.3M388.7 423.0C389.4 424.5 391.6 431.1 393.1 431.9C394.6 432.6 396.1 427.1 397.6 427.4C399.0 427.8 401.3 433.0 402.0 434.1M430.9 436.3C431.6 434.9 434.2 429.7 435.3 427.4C436.4 425.2 437.2 423.7 437.6 423.0M162.0 323.0C160.9 324.8 157.3 329.9 155.3 333.7C153.3 337.4 150.8 341.7 150.0 345.7C149.2 349.7 149.9 353.9 150.7 357.7C151.4 361.4 154.3 364.8 154.7 368.3C155.0 371.9 154.1 375.2 152.7 379.0C151.2 382.8 147.9 387.2 146.0 391.0C144.1 394.8 142.0 398.8 141.3 401.7C140.7 404.6 140.8 406.9 142.0 408.3C143.2 409.8 146.2 410.9 148.7 410.5C151.1 410.0 154.7 407.6 156.7 405.7C158.7 403.8 160.0 400.1 160.7 399.0M182.0 347.0C182.2 350.1 182.9 359.7 183.3 365.7C183.8 371.7 184.2 377.7 184.7 383.0C185.1 388.3 185.9 392.6 186.0 397.7C186.1 402.8 185.8 409.6 185.3 413.7C184.9 417.7 183.7 420.6 183.3 421.9M201.9 325.5C203.0 327.0 206.2 330.9 208.3 334.5C210.5 338.1 212.8 343.1 215.0 347.1C217.2 351.1 219.2 354.8 221.3 358.4C223.3 362.0 225.2 365.8 227.3 368.7C229.4 371.6 232.8 374.7 233.9 375.9M265.3 335.7C263.7 336.7 258.8 339.3 255.3 341.7C251.9 344.0 247.6 347.6 244.7 349.7C241.8 351.7 239.1 353.2 238.0 353.9M256.7 343.0C255.8 344.8 252.7 349.9 251.3 353.7C250.0 357.4 248.9 361.8 248.7 365.7C248.4 369.5 249.8 374.8 250.0 376.6M235.3 349.7C236.4 352.3 239.6 360.3 242.0 365.7C244.4 371.0 248.2 377.7 250.0 381.7C251.8 385.7 252.2 388.3 252.7 389.7M389.3 348.3C390.9 349.2 395.1 352.6 398.7 353.7C402.2 354.8 406.7 355.3 410.7 355.0C414.7 354.7 420.7 352.3 422.7 351.8M396.0 371.0C397.8 371.2 402.7 372.8 406.7 372.3C410.7 371.9 415.3 370.3 420.0 368.3C424.7 366.3 430.0 363.4 434.7 360.3C439.3 357.2 444.0 352.6 448.0 349.7C452.0 346.8 456.9 344.1 458.7 343.0M389.3 408.3C390.2 406.8 392.4 401.7 394.7 399.0C396.9 396.3 399.8 394.1 402.7 392.3C405.6 390.6 410.4 389.0 412.0 388.3M444.0 356.7C444.9 356.3 447.5 355.0 449.3 354.2C451.1 353.4 453.9 352.4 454.8 352.0M411.7 398.8C412.9 396.7 416.5 390.5 418.9 386.7C421.3 382.9 423.5 379.3 426.4 376.1C429.3 372.8 432.9 370.0 436.1 367.2C439.3 364.4 442.7 361.5 445.6 359.2C448.6 357.0 452.3 354.8 453.6 354.0M412.9 398.0C414.0 396.2 417.0 390.9 419.6 387.4C422.1 384.0 424.9 380.8 428.0 377.5C431.2 374.1 435.2 370.2 438.6 367.3C441.9 364.5 446.4 361.5 447.9 360.4M428.0 397.7C429.8 397.0 435.1 395.0 438.7 393.7C442.2 392.3 446.0 391.7 449.3 389.7C452.7 387.7 457.1 383.0 458.7 381.7M432.0 380.3C433.1 381.2 436.2 384.5 438.7 385.7C441.1 386.8 445.3 387.0 446.7 387.3M450.0 368.3C450.3 369.0 452.1 371.2 452.0 372.3C451.9 373.4 450.1 375.1 449.3 375.0C448.6 374.9 447.2 372.9 447.3 371.8C447.4 370.7 449.6 368.9 450.0 368.3M454.7 356.3C455.1 357.9 456.9 362.3 457.3 365.7C457.8 369.0 457.8 373.7 457.3 376.3C456.9 379.0 455.1 380.8 454.7 381.7M452.0 349.7C453.1 351.4 456.4 357.0 458.7 360.3C460.9 363.7 463.3 366.6 465.3 369.7C467.3 372.8 469.8 377.4 470.7 379.0M396.0 408.3C397.6 407.7 402.0 405.2 405.3 404.3C408.7 403.4 412.2 403.0 416.0 403.0C419.8 403.0 423.8 404.6 428.0 404.3C432.2 404.1 436.9 403.0 441.3 401.7C445.8 400.3 450.7 398.3 454.7 396.3C458.7 394.3 463.6 390.8 465.3 389.7M398.7 416.3C400.4 415.2 405.3 411.0 409.3 409.7C413.3 408.3 418.2 408.6 422.7 408.3C427.1 408.1 431.6 409.2 436.0 408.3C440.4 407.4 444.9 405.2 449.3 403.0C453.8 400.8 460.4 396.3 462.7 395.0M392.0 416.3C392.9 415.4 395.1 412.1 397.3 411.0C399.6 409.9 404.0 409.9 405.3 409.7M393.3 427.0C394.0 425.7 395.6 421.2 397.3 419.0C399.1 416.8 402.0 414.8 404.0 413.7C406.0 412.6 408.4 412.6 409.3 412.3M410.7 416.3C410.2 418.1 408.2 423.7 408.0 427.0C407.8 430.3 408.4 433.7 409.3 436.3C410.2 439.0 412.7 441.9 413.3 443.0M436.0 427.0C435.8 427.4 434.4 429.0 434.7 429.7C434.9 430.3 436.9 430.8 437.3 431.0M470.7 436.3C473.1 437.0 480.0 440.3 485.3 440.3C490.7 440.3 497.1 438.3 502.7 436.3C508.2 434.3 516.0 429.7 518.7 428.3"/></g>
<g stroke="#404040" stroke-width="1.65"><path d="M116.4 138.6C117.6 140.5 120.9 145.9 123.1 150.1C125.3 154.3 130.0 162.3 129.8 163.9C129.5 165.4 123.7 162.3 121.6 159.4C119.4 156.6 117.7 150.3 116.9 146.8C116.0 143.3 116.5 139.9 116.4 138.6M229.8 80.1C231.1 81.4 236.1 84.7 238.0 87.9C239.9 91.0 241.2 95.4 241.1 99.0C241.0 102.6 239.3 108.0 237.6 109.4C235.9 110.9 232.4 110.4 230.9 107.9C229.4 105.4 228.9 99.2 228.7 94.6C228.5 89.9 229.6 82.5 229.8 80.1M217.6 103.4C218.7 105.0 222.8 109.4 224.7 112.8C226.5 116.2 229.5 121.1 228.7 123.9C227.9 126.7 222.9 128.9 219.8 129.4C216.6 130.0 211.0 129.7 209.8 127.2C208.5 124.7 210.9 118.5 212.2 114.6C213.5 110.6 216.7 105.3 217.6 103.4M169.8 131.2C171.8 130.9 177.7 128.4 182.0 129.0C186.3 129.6 193.9 131.7 195.8 134.6C197.6 137.4 195.4 142.7 193.1 146.1C190.8 149.5 186.3 153.1 182.0 155.0C177.7 156.9 170.1 159.1 167.6 157.2C165.0 155.3 166.1 147.8 166.4 143.4C166.8 139.1 169.2 133.3 169.8 131.2M209.8 177.2C210.7 176.8 213.4 174.6 215.3 174.6C217.2 174.5 220.1 176.4 221.1 176.8M159.8 189.2C161.6 187.9 167.5 182.9 170.9 181.2C174.3 179.5 177.6 178.2 180.2 179.0C182.9 179.8 187.7 184.0 186.9 186.1C186.1 188.2 179.9 190.9 175.3 191.4C170.8 192.0 162.4 189.6 159.8 189.2M258.7 141.2C260.0 143.4 264.0 150.7 266.4 154.6C268.9 158.4 271.6 160.9 273.1 164.6C274.6 168.3 275.5 172.9 275.3 176.8C275.1 180.7 272.6 186.0 272.0 187.9M273.1 164.6C274.6 164.2 278.9 162.5 282.0 162.3C285.1 162.1 290.3 163.3 292.0 163.4M293.1 150.1C293.7 151.6 296.1 155.3 296.4 159.0C296.8 162.7 294.6 173.1 295.3 172.3C296.1 171.6 299.4 155.3 300.9 154.6C302.4 153.8 304.0 164.2 304.2 167.9C304.4 171.6 302.4 175.3 302.0 176.8M288.7 170.1C290.5 168.6 295.7 164.9 299.8 161.2C303.9 157.5 309.4 151.8 313.1 147.9C316.8 144.0 320.5 139.6 322.0 137.9M392.0 122.6C393.3 123.9 397.9 127.1 399.8 130.6C401.7 134.0 403.3 139.4 403.3 143.4C403.3 147.5 400.4 153.1 399.8 155.0M403.1 152.3C400.7 154.3 393.3 159.7 388.7 163.9C384.0 168.0 380.5 172.8 375.3 177.2C370.1 181.7 360.5 188.3 357.6 190.6M315.3 147.4C317.2 146.4 322.7 143.3 326.4 141.2C330.1 139.1 334.1 137.3 337.6 135.0C341.0 132.7 345.3 128.7 346.9 127.4M293.1 152.3C293.9 151.2 295.9 145.3 297.6 145.7C299.2 146.0 302.7 151.4 303.1 154.6C303.5 157.7 301.3 163.4 299.8 164.6C298.3 165.7 295.3 163.3 294.2 161.2C293.1 159.2 293.3 153.8 293.1 152.3M500.9 199.0C502.6 195.7 507.4 185.6 510.9 179.4C514.4 173.3 520.1 165.2 522.0 162.3M486.4 252.3C487.0 247.9 487.4 235.3 489.8 225.7C492.2 216.0 495.7 205.3 500.9 194.6C506.1 183.8 514.6 169.5 520.9 161.2C527.2 152.9 533.3 148.3 538.7 144.8C544.0 141.3 549.5 140.3 553.1 140.1C556.7 140.0 559.3 140.0 560.4 143.9C561.6 147.8 561.0 155.4 559.8 163.4C558.6 171.5 555.7 182.0 553.3 192.3C550.9 202.7 547.7 215.7 545.3 225.7C543.0 235.7 540.6 244.5 539.1 252.3C537.6 260.2 536.9 269.4 536.4 272.8M507.6 319.0C510.5 315.4 518.7 304.2 525.3 297.2C532.0 290.3 541.8 281.7 547.6 277.2C553.3 272.7 557.9 271.3 560.0 270.1M525.3 319.0C527.2 315.7 532.0 306.0 536.4 299.4C540.9 292.9 549.4 282.8 552.0 279.4M643.1 296.8C645.0 294.6 649.4 290.5 654.2 283.9C659.0 277.3 669.0 261.7 672.0 257.2M179.8 210.1C180.4 212.7 183.7 220.5 183.3 225.7C183.0 230.9 179.0 236.9 177.6 241.2C176.1 245.5 175.0 249.7 174.4 251.4M176.4 245.7C177.0 248.6 180.0 257.5 179.8 263.4C179.6 269.4 176.6 276.0 175.3 281.2C174.1 286.4 172.0 289.7 172.2 294.6C172.4 299.4 175.9 307.9 176.7 310.6M176.4 305.7C174.8 308.6 168.8 319.0 166.4 323.4C164.1 327.9 163.1 330.9 162.4 332.3M273.1 379.0C276.8 378.3 287.2 376.4 295.3 374.6C303.5 372.7 317.6 369.0 322.0 367.9M304.2 179.0C305.3 182.0 309.4 190.5 310.9 196.8C312.4 203.1 314.6 210.9 313.1 216.8C311.6 222.7 307.2 227.9 302.0 232.3C296.8 236.8 287.9 240.3 282.0 243.4C276.1 246.6 269.0 250.1 266.4 251.4M264.2 250.1C266.8 249.7 274.2 250.1 279.8 247.9C285.3 245.7 291.9 242.0 297.6 236.8C303.2 231.6 310.9 220.1 313.6 216.8M306.4 263.4C308.3 266.4 313.5 275.3 317.6 281.2C321.6 287.1 326.1 293.4 330.9 299.0C335.7 304.6 341.3 310.4 346.4 314.6C351.6 318.7 357.2 322.0 362.0 323.9C366.8 325.7 371.6 326.9 375.3 325.7C379.1 324.5 383.1 318.3 384.7 316.8M482.0 215.7C480.5 218.4 475.7 225.9 473.1 232.3C470.5 238.8 467.9 246.4 466.4 254.6C465.0 262.7 463.9 272.3 464.2 281.2C464.6 290.1 466.8 299.7 468.7 307.9C470.5 316.1 474.2 326.8 475.3 330.6M465.3 403.4C466.8 407.9 470.9 421.2 474.2 430.1C477.6 439.0 481.3 449.3 485.3 456.8C489.4 464.3 496.4 472.0 498.7 475.0M536.4 301.2C537.2 304.9 539.8 316.0 540.9 323.4C542.0 330.9 543.1 338.3 543.1 345.7C543.1 353.1 542.0 360.5 540.9 367.9C539.8 375.3 538.3 382.7 536.4 390.1C534.6 397.5 531.3 407.4 529.8 412.3C528.3 417.2 527.9 418.3 527.6 419.4M564.4 421.2C565.3 418.3 567.0 410.1 569.8 403.4C572.5 396.8 576.4 388.3 580.9 381.2C585.3 374.2 590.9 367.5 596.4 361.2C602.0 354.9 608.3 348.7 614.2 343.4C620.1 338.2 629.0 332.0 632.0 329.7M244.2 376.8C244.8 380.1 246.6 391.0 247.6 396.8C248.5 402.6 249.6 409.0 250.0 411.4M250.9 394.6C254.2 392.7 263.5 386.4 270.9 383.4C278.3 380.5 286.8 379.4 295.3 376.8C303.9 374.2 317.6 369.4 322.0 367.9M259.8 423.4C262.7 421.2 271.6 414.6 277.6 410.1C283.5 405.7 289.4 400.8 295.3 396.8C301.3 392.8 310.1 387.9 313.1 386.1M322.0 507.9C319.8 509.7 313.9 515.1 308.7 519.0C303.5 522.9 293.9 529.4 290.9 531.4M132.0 431.2C134.8 432.4 143.3 436.1 148.7 438.1C154.0 440.1 159.8 442.4 164.2 443.4C168.7 444.5 173.5 444.2 175.3 444.3M130.9 445.7C132.0 446.0 135.9 446.8 137.6 447.9C139.3 449.0 140.5 451.6 141.1 452.3M129.8 456.8C130.9 457.1 134.7 457.9 136.4 459.0C138.2 460.1 139.6 462.7 140.2 463.4M132.0 467.9C133.3 468.1 137.9 468.5 139.8 469.2C141.7 470.0 142.7 471.8 143.3 472.3M140.9 474.6C141.6 474.6 144.3 474.0 145.3 474.6C146.3 475.1 146.6 477.5 146.9 478.1M184.7 454.6C186.8 455.7 193.2 458.3 197.6 461.2C201.9 464.2 206.4 468.6 210.9 472.3C215.3 476.0 219.8 480.1 224.2 483.4C228.7 486.8 233.9 489.0 237.6 492.3C241.3 495.7 242.7 500.1 246.4 503.4C250.1 506.8 255.3 509.0 259.8 512.3C264.2 515.7 267.9 520.3 273.1 523.4C278.3 526.6 287.9 530.1 290.9 531.4M129.8 507.9C132.2 509.0 138.9 511.6 144.2 514.6C149.6 517.5 155.7 522.7 162.0 525.7C168.3 528.6 174.6 530.8 182.0 532.3C189.4 533.9 199.0 534.6 206.4 535.0C213.9 535.4 219.8 535.0 226.4 534.6C233.1 534.1 243.1 532.7 246.4 532.3M82.0 556.8C85.0 554.6 93.9 546.8 99.8 543.4C105.7 540.1 112.7 538.0 117.6 536.8C122.4 535.5 126.8 536.0 128.7 535.9M282.0 379.0C284.2 378.3 290.5 375.7 295.3 374.6C300.1 373.4 305.7 373.8 310.9 372.3C316.1 370.9 321.6 367.1 326.4 365.7C331.3 364.2 336.4 362.9 339.8 363.4C343.1 364.0 344.2 365.9 346.4 369.2C348.7 372.6 351.3 378.5 353.1 383.4C355.0 388.4 357.0 394.5 357.6 399.0C358.1 403.5 356.8 408.6 356.7 410.6M357.6 403.4C356.1 405.7 352.0 411.6 348.7 416.8C345.3 422.0 341.6 427.9 337.6 434.6C333.5 441.2 327.9 450.9 324.2 456.8C320.5 462.7 318.3 466.6 315.3 470.1C312.4 473.7 307.9 476.8 306.4 478.1M282.0 450.1C283.9 452.0 289.0 457.5 293.1 461.2C297.2 464.9 303.1 469.4 306.4 472.3C309.8 475.3 311.3 476.0 313.1 479.0C315.0 482.0 315.7 487.1 317.6 490.1C319.4 493.1 323.1 496.0 324.2 497.2M348.7 490.1C350.5 488.3 355.3 483.1 359.8 479.0C364.2 474.9 370.1 469.7 375.3 465.7C380.5 461.6 387.0 456.8 390.9 454.6C394.8 452.3 397.6 452.7 398.9 452.3M304.2 516.8C306.4 515.3 312.4 510.3 317.6 507.9C322.7 505.5 329.4 503.3 335.3 502.6C341.3 501.8 348.7 502.9 353.1 503.4C357.6 504.0 360.5 505.7 362.0 506.1M377.6 456.8C379.4 455.3 384.6 450.3 388.7 447.9C392.7 445.5 397.6 443.4 402.0 442.6C406.4 441.7 411.3 441.8 415.3 442.6C419.4 443.3 423.5 444.9 426.4 447.0C429.4 449.1 432.0 453.7 433.1 455.0M406.4 512.3C408.7 510.9 415.3 505.7 419.8 503.4C424.2 501.2 429.8 500.1 433.1 499.0C436.4 497.9 438.7 497.1 439.8 496.8M81.2 570.1C80.5 571.6 78.3 576.4 76.8 579.0C75.3 581.6 73.1 584.6 72.3 585.7M110.1 564.6C111.2 566.6 114.2 572.9 116.8 576.8C119.4 580.7 123.4 584.2 125.7 587.9C127.9 591.6 129.4 594.9 130.1 599.0C130.9 603.1 130.9 607.9 130.1 612.3C129.4 616.8 127.3 621.2 125.7 625.7C124.0 630.1 122.0 634.6 120.1 639.0C118.3 643.4 117.0 648.3 114.6 652.3C112.1 656.4 109.4 660.1 105.7 663.4C102.0 666.8 96.4 669.7 92.3 672.3C88.3 674.9 84.6 675.7 81.2 679.0C77.9 682.3 74.9 687.5 72.3 692.3C69.7 697.1 67.0 704.1 65.7 707.9C64.4 711.7 64.7 713.8 64.6 715.0M114.6 634.6C113.8 636.8 113.1 643.4 110.1 647.9C107.1 652.3 100.9 657.1 96.8 661.2C92.7 665.3 88.6 668.6 85.7 672.3C82.7 676.0 80.3 678.6 79.0 683.4C77.7 688.3 78.3 695.3 77.9 701.2C77.5 707.1 77.0 716.0 76.8 719.0M134.6 543.4C137.1 544.9 143.8 550.3 150.1 552.3C156.4 554.4 164.9 554.8 172.3 555.9C179.7 557.0 187.1 557.7 194.6 559.0C202.0 560.3 212.3 562.3 216.8 563.4C221.2 564.6 220.5 565.3 221.2 565.7M187.9 596.8C189.7 597.1 195.7 599.4 199.0 599.0C202.3 598.6 206.4 595.3 207.9 594.6M239.0 592.3C236.0 593.4 226.4 596.4 221.2 599.0C216.0 601.6 211.2 604.6 207.9 607.9C204.6 611.2 202.0 614.9 201.2 619.0C200.5 623.1 201.6 628.3 203.4 632.3C205.3 636.4 208.6 640.6 212.3 643.4C216.0 646.3 221.2 648.9 225.7 649.2C230.1 649.6 236.8 646.3 239.0 645.7M292.3 530.1C293.8 532.3 297.9 539.4 301.2 543.4C304.6 547.5 308.6 551.2 312.3 554.6C316.0 557.9 321.6 562.0 323.4 563.4M325.7 576.8C327.5 576.0 332.7 575.3 336.8 572.3C340.9 569.4 347.9 561.2 350.1 559.0M339.0 579.0C340.9 576.4 346.4 568.6 350.1 563.4C353.8 558.3 359.4 550.5 361.2 547.9M356.8 572.3C357.9 569.7 360.9 561.6 363.4 556.8C366.0 552.0 369.4 547.5 372.3 543.4C375.3 539.4 377.5 535.7 381.2 532.3C384.9 529.0 390.5 525.7 394.6 523.4C398.6 521.2 403.8 519.7 405.7 519.0M401.2 543.4C403.8 543.8 412.0 546.0 416.8 545.7C421.6 545.3 426.8 543.1 430.1 541.2C433.4 539.4 434.7 537.3 436.8 534.6C438.9 531.8 441.6 526.2 442.6 524.6M323.4 581.2C322.3 583.4 319.4 589.7 316.8 594.6C314.2 599.4 310.9 605.3 307.9 610.1C304.9 614.9 301.2 620.5 299.0 623.4C296.8 626.4 295.3 627.1 294.6 627.9M272.3 619.0C271.2 622.3 267.0 632.7 265.7 639.0C264.4 645.3 264.0 651.2 264.6 656.8C265.1 662.3 266.6 669.5 269.0 672.3C271.4 675.1 277.3 673.4 279.0 673.7M239.0 627.9C240.5 626.8 244.6 623.1 247.9 621.2C251.2 619.4 255.7 617.9 259.0 616.8C262.3 615.7 266.4 614.9 267.9 614.6M492.0 513.7C492.4 517.7 493.3 529.7 494.7 537.7C496.0 545.7 497.6 554.1 500.0 561.7C502.4 569.2 506.0 576.8 509.3 583.0C512.7 589.2 517.3 593.2 520.0 599.0C522.7 604.8 524.2 611.0 525.3 617.7C526.5 624.3 526.9 633.2 526.9 639.0C526.9 644.8 524.3 648.3 525.3 652.3C526.4 656.3 531.1 659.4 533.3 663.0C535.6 666.6 537.8 671.9 538.7 673.7M498.7 679.0C500.9 679.7 508.0 682.8 512.0 683.3C516.0 683.7 519.3 682.8 522.7 681.7C526.0 680.5 529.3 678.1 532.0 676.3C534.7 674.6 537.6 671.9 538.7 671.0M520.0 479.0C521.8 479.7 526.7 482.8 530.7 483.3C534.7 483.7 540.9 482.4 544.0 481.7C547.1 481.0 548.4 479.4 549.3 479.0M426.4 447.4C428.3 450.0 433.9 457.4 437.6 463.0C441.3 468.6 445.0 475.2 448.7 480.8C452.4 486.3 456.4 491.1 459.8 496.3C463.1 501.5 467.6 507.4 468.7 511.9C469.8 516.4 466.8 521.5 466.4 523.4M362.0 540.8C361.3 543.4 357.9 551.8 357.6 556.3C357.2 560.9 359.4 566.0 359.8 567.9M326.4 569.7C327.9 568.9 332.0 567.4 335.3 565.2C338.7 563.0 342.7 558.9 346.4 556.3C350.1 553.7 355.7 550.8 357.6 549.7M490.9 456.3C492.4 458.2 495.7 464.1 499.8 467.4C503.9 470.8 509.8 474.1 515.3 476.3C520.9 478.6 527.6 480.8 533.1 480.8C538.7 480.8 543.9 478.9 548.7 476.3C553.5 473.7 559.8 467.1 562.0 465.2M184.7 327.0C183.6 329.0 180.0 334.8 178.0 339.0C176.0 343.2 174.4 347.4 172.7 352.3C170.9 357.2 169.1 363.0 167.3 368.3C165.6 373.7 163.2 379.2 162.0 384.3C160.8 389.4 160.0 394.6 160.0 399.0C160.0 403.4 161.0 406.8 162.0 411.0C163.0 415.2 164.7 420.6 166.0 424.3C167.3 428.1 168.8 431.8 170.0 433.7C171.2 435.5 172.2 435.9 173.3 435.3C174.4 434.6 175.7 432.4 176.7 429.7C177.7 427.0 178.7 422.6 179.3 419.0C180.0 415.4 180.4 410.1 180.7 408.3M180.7 408.3C180.8 406.1 181.3 399.7 181.3 395.0C181.3 390.3 181.0 385.2 180.7 380.3C180.3 375.4 179.8 370.3 179.3 365.7C178.9 361.0 178.0 356.6 178.0 352.3C178.0 348.1 178.2 344.3 179.3 340.3C180.4 336.3 183.8 330.3 184.7 328.3M186.0 329.7C186.4 331.9 187.6 338.3 188.7 343.0C189.8 347.7 191.3 352.8 192.7 357.7C194.0 362.6 195.7 367.7 196.7 372.3C197.7 377.0 197.9 382.9 198.7 385.7C199.4 388.5 200.6 389.1 201.3 389.1C202.1 389.1 203.1 388.2 203.3 385.7C203.6 383.1 203.3 378.1 202.7 373.7C202.0 369.2 200.6 363.9 199.3 359.0C198.1 354.1 196.7 348.8 195.3 344.3C194.0 339.9 192.4 335.4 191.3 332.3C190.2 329.2 189.1 326.8 188.7 325.7M214.0 353.7C215.1 355.7 218.2 362.1 220.7 365.7C223.1 369.2 226.2 373.0 228.7 375.0C231.1 377.0 234.2 377.4 235.3 377.9M256.7 343.0C254.2 344.3 246.7 347.7 242.0 351.0C237.3 354.3 232.7 359.0 228.7 363.0C224.7 367.0 221.6 370.6 218.0 375.0C214.4 379.4 210.9 384.6 207.3 389.7C203.8 394.8 200.0 400.3 196.7 405.7C193.3 411.0 190.4 416.3 187.3 421.7C184.2 427.0 180.0 434.1 178.0 437.7C176.0 441.2 175.8 442.1 175.3 443.0M232.7 323.0C232.9 324.8 233.6 329.7 234.0 333.7C234.4 337.7 234.4 343.0 235.3 347.0C236.2 351.0 237.8 354.1 239.3 357.7C240.9 361.2 243.6 364.7 244.7 368.3C245.8 371.9 245.8 377.4 246.0 379.3M449.3 323.0C448.9 324.3 446.8 328.1 446.7 331.0C446.6 333.9 447.8 337.2 448.7 340.3C449.6 343.4 451.0 347.0 452.0 349.7C453.0 352.3 454.2 355.2 454.7 356.3M424.0 400.3C425.8 400.5 430.9 401.6 434.7 401.1C438.4 400.7 442.9 399.4 446.7 397.7C450.4 396.0 454.2 393.4 457.3 391.0C460.4 388.6 464.0 384.3 465.3 383.0M429.3 376.3C430.2 377.4 432.4 381.0 434.7 383.0C436.9 385.0 439.8 387.2 442.7 388.3C445.6 389.4 449.3 390.1 452.0 389.7C454.7 389.2 457.6 386.3 458.7 385.7M449.3 364.3C450.0 364.8 452.4 365.4 453.3 367.0C454.2 368.6 455.1 371.9 454.7 373.7C454.2 375.4 452.1 377.3 450.7 377.7C449.2 378.0 447.0 377.1 446.0 375.8C445.0 374.5 444.1 371.6 444.7 369.7C445.2 367.8 448.6 365.2 449.3 364.3M412.0 400.3C410.7 400.6 406.7 400.8 404.0 401.7C401.3 402.6 398.2 403.7 396.0 405.7C393.8 407.7 391.8 410.8 390.7 413.7C389.6 416.6 389.1 419.9 389.3 423.0C389.6 426.1 391.6 430.8 392.0 432.3M409.3 409.7C409.2 410.8 408.2 415.4 408.7 416.3C409.1 417.2 411.4 415.2 412.0 415.0M460.0 401.7C457.8 403.7 450.7 409.9 446.7 413.7C442.7 417.4 438.9 420.8 436.0 424.3C433.1 427.9 430.9 431.9 429.3 435.0C427.8 438.1 427.1 441.7 426.7 443.0"/></g>
<g stroke="#303030" stroke-width="2.25"><path d="M226.4 134.6C227.4 137.1 231.1 144.9 232.2 150.1C233.3 155.4 233.9 160.9 233.1 166.1C232.3 171.4 230.5 177.8 227.6 181.7C224.6 185.6 219.6 188.4 215.3 189.4C211.1 190.5 206.8 189.6 202.0 187.9C197.2 186.2 191.3 182.3 186.4 179.4C181.6 176.6 176.8 173.0 173.1 170.6C169.4 168.1 165.7 165.6 164.2 164.6M286.4 174.6C287.9 173.3 291.6 170.1 295.3 166.8C299.0 163.4 305.0 157.9 308.7 154.6C312.4 151.2 316.1 148.1 317.6 146.8M503.1 319.0C506.1 315.3 515.0 303.4 520.9 296.8C526.8 290.2 532.0 284.6 538.7 279.4C545.3 274.3 557.2 268.3 560.9 266.1M186.4 185.7C189.0 186.3 196.4 189.0 202.0 189.2C207.6 189.4 215.3 188.7 219.8 187.0C224.2 185.3 227.2 180.3 228.7 179.0M266.4 250.6C268.3 250.7 273.9 251.7 277.6 251.7C281.3 251.6 286.8 250.4 288.7 250.1M363.1 247.9C364.4 250.9 368.5 260.1 370.9 265.7C373.3 271.2 375.5 276.4 377.6 281.2C379.6 286.0 382.4 292.3 383.3 294.6M547.6 279.0C543.1 282.3 529.0 291.6 520.9 299.0C512.7 306.4 505.0 314.9 498.7 323.4C492.4 332.0 487.0 340.9 483.1 350.1C479.3 359.4 477.0 370.1 475.6 379.0C474.1 387.9 473.7 394.9 474.2 403.4C474.7 412.0 476.4 422.0 478.7 430.1C480.9 438.3 483.9 445.3 487.6 452.3C491.3 459.4 497.2 467.9 500.9 472.3C504.6 476.8 508.3 477.9 509.8 479.0M543.1 287.9C540.5 291.6 532.0 302.0 527.6 310.1C523.1 318.3 519.2 327.9 516.4 336.8C513.7 345.7 512.0 355.3 511.1 363.4C510.2 371.6 510.4 378.6 511.1 385.7C511.9 392.7 513.2 399.7 515.6 405.7C517.9 411.6 521.1 417.1 525.3 421.2C529.6 425.3 535.0 428.2 540.9 430.1C546.8 432.0 553.9 433.5 560.9 432.8C567.9 432.0 576.4 428.7 583.1 425.7C589.8 422.6 595.3 419.0 600.9 414.6C606.4 410.1 612.0 404.9 616.4 399.0C620.9 393.1 624.2 386.0 627.6 379.0C630.9 372.0 634.0 364.9 636.4 356.8C638.9 348.6 641.1 339.7 642.2 330.1C643.3 320.5 643.0 304.2 643.1 299.0M132.0 431.2C131.6 431.8 130.3 431.8 129.8 434.6C129.2 437.3 129.0 443.4 128.7 447.9C128.3 452.3 127.4 457.5 127.8 461.2C128.1 464.9 128.9 466.9 130.9 470.1C132.9 473.3 137.2 477.7 139.8 480.3C142.4 482.9 143.5 484.6 146.4 485.7C149.4 486.8 153.5 487.9 157.6 487.0C161.6 486.1 168.7 481.4 170.9 480.3M184.7 454.6C185.1 457.1 185.8 464.6 187.6 470.1C189.3 475.7 192.2 482.3 195.3 487.9C198.5 493.4 202.7 498.6 206.4 503.4C210.1 508.3 214.6 511.9 217.6 516.8C220.5 521.7 223.1 530.1 224.2 532.8M224.2 532.8L237.6 527.9M323.4 581.2C324.9 579.4 329.0 573.1 332.3 570.1C335.7 567.1 339.7 566.0 343.4 563.4C347.1 560.9 351.2 558.3 354.6 554.6C357.9 550.9 362.0 543.4 363.4 541.2M341.2 577.9C344.2 577.2 353.1 574.6 359.0 573.7C364.9 572.7 370.9 573.1 376.8 572.3C382.7 571.6 388.6 570.5 394.6 569.2C400.5 568.0 406.8 566.3 412.3 564.8C417.9 563.3 422.7 562.0 427.9 560.3C433.1 558.6 438.6 557.4 443.4 554.6C448.3 551.7 453.1 547.5 456.8 543.4C460.5 539.4 463.4 534.2 465.7 530.1C467.9 526.0 469.4 520.9 470.1 519.0M202.0 325.7C203.1 327.0 206.4 330.1 208.7 333.7C210.9 337.2 213.3 342.8 215.3 347.0C217.3 351.2 218.7 355.2 220.7 359.0C222.7 362.8 225.1 366.7 227.3 369.7C229.6 372.6 232.9 375.4 234.0 376.6M444.0 356.3C444.9 355.9 447.6 354.4 449.3 353.7C451.1 352.9 453.8 352.1 454.7 351.8M412.0 399.0C413.1 397.0 416.2 390.8 418.7 387.0C421.1 383.2 423.8 379.7 426.7 376.3C429.6 373.0 432.9 369.9 436.0 367.0C439.1 364.1 442.4 361.2 445.3 359.0C448.2 356.8 452.0 354.6 453.3 353.7M413.3 397.7C414.6 395.8 418.1 389.9 420.7 386.3C423.2 382.8 425.8 379.4 428.7 376.3C431.6 373.2 435.0 370.2 438.0 367.7C441.0 365.1 445.2 362.1 446.7 361.0"/></g>
<g fill="#3a3a3a" stroke="none"><path d="M412.0 399.0C413.1 397.4 416.6 391.9 418.7 389.7C420.7 387.4 423.6 384.7 424.3 385.4C424.9 386.1 422.7 391.1 422.7 393.7C422.7 396.2 425.4 399.6 424.3 400.6C423.2 401.6 417.4 399.9 416.0 399.8Z"/></g>
</svg></div>
<div id="vsb" class="a"></div>
<div id="tools" class="a"><div id="toolshead" class="a"></div>
<svg style="left:0;top:0" width="32" height="554" viewBox="0 0 32 554">
<g fill="#e8e8e8"><path d="M6 4l3.500 3L6 10zM10 4l3.500 3L10 10z"/></g>
<path d="M22 4.500l5 5M27 4.500l-5 5" stroke="#e8e8e8" stroke-width="1.500"/>
<path d="M8 15.500h8" stroke="#3e3e3e" stroke-width="2" stroke-dasharray="1 1"/>
<!-- move -->
<path d="M9 29v10l8-5z" fill="#c6c6c6"/><path d="M19 33.500v7M15.500 37h7" stroke="#c6c6c6" stroke-width="1.200"/><path d="M19 32l1.500 2h-3zM19 42l1.500-2h-3zM14 37l2-1.500v3zM24 37l-2-1.500v3z" fill="#c6c6c6"/>
<!-- marquee -->
<rect x="10" y="51.500" width="11" height="11" fill="none" stroke="#c6c6c6" stroke-width="1.200" stroke-dasharray="3 1.500"/>
<!-- lasso -->
<ellipse cx="16" cy="77" rx="6.500" ry="3.800" fill="none" stroke="#c6c6c6" stroke-width="1.300" transform="rotate(-15 16 77)"/><path d="M11 80c-1 1 0 3 1.500 4" fill="none" stroke="#c6c6c6" stroke-width="1.200"/><circle cx="11" cy="80.500" r="1.300" fill="#c6c6c6"/>
<!-- quick select -->
<path d="M22.500 94.500L15 102" stroke="#c6c6c6" stroke-width="2.200" stroke-linecap="round"/><path d="M12 100.500c2-1 4 0 4.500 2c-1.500 2-4.500 2-6 1c1-1 1-2 1.500-3z" fill="#c6c6c6"/><path d="M14 96a5 5 0 1 0 3 9" fill="none" stroke="#c6c6c6" stroke-width="1" stroke-dasharray="1.500 1.200"/>
<!-- crop -->
<path d="M12 115v11h11M9 118h11v11" fill="none" stroke="#c6c6c6" stroke-width="1.800"/>
<!-- eyedropper -->
<path d="M21 138l-8 8l-2.500 3.500l3.500-2.500l8-8z" fill="none" stroke="#c6c6c6" stroke-width="1.200"/><path d="M18 139.500l3.500 3.500l3-4a2 2 0 0 0-3-3z" fill="#c6c6c6"/>
<!-- sep -->
<path d="M3 156.500h26" stroke="#434343"/><path d="M3 157.500h26" stroke="#5f5f5f"/>
<!-- heal -->
<g transform="rotate(-45 16 168)"><rect x="8" y="164.500" width="16" height="7" rx="3.500" fill="#c6c6c6"/><rect x="13" y="164.500" width="6" height="7" fill="#888"/></g><path d="M11 163a5 6 0 0 0 0 10" fill="none" stroke="#c6c6c6" stroke-dasharray="1.500 1.200"/>
<!-- brush -->
<path d="M23 182.500L15 191" stroke="#c6c6c6" stroke-width="2" stroke-linecap="round"/><path d="M12.500 190c2-1 4 .5 4.200 2.300c-1.500 2.500-5 3-8 2.700c2-1 2.500-3 3.800-5z" fill="#c6c6c6"/>
<!-- stamp -->
<path d="M14 204.500a2.500 2.500 0 1 1 4 0l-.5 4.500h5.500v4h-14v-4h5.500z" fill="#c6c6c6"/><path d="M9 216.500h14" stroke="#c6c6c6" stroke-width="1.500"/>
<!-- history brush -->
<path d="M23 226L15.500 234" stroke="#c6c6c6" stroke-width="2" stroke-linecap="round"/><path d="M13 233c2-1 3.500.5 3.800 2c-1.500 2.300-4.500 2.800-7.500 2.500c2-1 2.400-2.500 3.700-4.500z" fill="#c6c6c6"/><path d="M10 229a5 4 0 0 1 8-2" fill="none" stroke="#c6c6c6" stroke-width="1.200"/><path d="M8.500 227l1 3.500l3-1.500z" fill="#c6c6c6"/>
<!-- eraser -->
<path d="M14 250h9l-5 7h-9z" fill="#c6c6c6"/><path d="M9 257h9v3.500h-9zM18 257l5-7v3.500l-5 7z" fill="#a8a8a8" stroke="#c6c6c6" stroke-width=".6"/>
<!-- bucket -->
<path d="M12 274l7-4l4 7l-7 4.500a4 4 0 0 1-4-7.500z" fill="#c6c6c6"/><path d="M14 273c-1-3 1-5 3-4.500" fill="none" stroke="#c6c6c6" stroke-width="1.200"/><path d="M23 277c1 1 2 3 1.500 5c-1-.5-2-2-1.500-5z" fill="#c6c6c6"/>
<!-- blur -->
<path d="M16 291c2 3 4.500 5.500 4.500 8.500a4.500 4.500 0 0 1-9 0c0-3 2.500-5.500 4.500-8.500z" fill="#c6c6c6"/>
<!-- dodge -->
<circle cx="14" cy="317.500" r="4.200" fill="#c6c6c6"/><path d="M17 321l5 5" stroke="#c6c6c6" stroke-width="2.200" stroke-linecap="round"/>
<!-- sep -->
<path d="M3 332.500h26" stroke="#434343"/><path d="M3 333.500h26" stroke="#5f5f5f"/>
<!-- pen -->
<path d="M10 351l2-8l6-4l4 4l-4 6z" fill="none" stroke="#c6c6c6" stroke-width="1.300"/><path d="M10 351l5-5" stroke="#c6c6c6"/><path d="M18.500 337.500l5 5l1.500-1.500l-5-5z" fill="#c6c6c6"/>
<!-- T -->
<text x="10" y="372" font-family="Liberation Serif,serif" font-size="17" fill="#cccccc">T</text>
<!-- path select -->
<path d="M11 380v13l3.500-3l2.500 5l2-1l-2.500-5h4.500z" fill="#2a2a2a" stroke="#c6c6c6" stroke-width="1.100"/>
<!-- line -->
<path d="M10 415l11-11" stroke="#c6c6c6" stroke-width="1.300"/>
<!-- sep -->
<path d="M3 421.500h26" stroke="#434343"/><path d="M3 422.500h26" stroke="#5f5f5f"/>
<!-- hand -->
<path d="M11 434c0-3 1-5 2-5s1 2 1 3c0-3 .5-4.500 1.800-4.500s1.400 2 1.400 4c.3-2 1-3.500 2-3.300s1 2 .8 4c.5-1 1.300-1.500 2-1s0 3-.5 5s-2 4-5 4s-5-2.500-5.500-6.200z" fill="#c6c6c6"/><path d="M10 430a7 6 0 0 1 9-4" fill="none" stroke="#c6c6c6" stroke-width="1.100"/>
<!-- zoom selected -->
<rect x="3" y="443" width="26" height="22" rx="2" fill="#383838"/>
<circle cx="14" cy="451.500" r="4.300" fill="#8c8c8c" stroke="#cccccc" stroke-width="1.400"/><path d="M17.500 455l5 5" stroke="#cccccc" stroke-width="2.400" stroke-linecap="round"/>
<!-- small swatch icons -->
<rect x="4" y="468" width="5" height="5" fill="#111" stroke="#c6c6c6" stroke-width=".8"/><rect x="7" y="471" width="5" height="5" fill="#e8e8e8"/>
<path d="M19 470a4 4 0 0 1 5 3.500" fill="none" stroke="#c6c6c6" stroke-width="1.200"/><path d="M18 468l.5 3.500l3-1zM26 474l-3.500.2l1.500 2.500z" fill="#c6c6c6"/>
<!-- fg/bg -->
<rect x="12.500" y="490.500" width="14" height="14" fill="#fff" stroke="#c8c8c8"/><rect x="3.500" y="481.500" width="15" height="15" fill="#000" stroke="#e8e8e8" stroke-width="1"/>
<!-- quick mask -->
<rect x="8.500" y="512.500" width="14" height="10" fill="none" stroke="#c6c6c6" stroke-width="1.200"/><circle cx="15.500" cy="517.500" r="3" fill="none" stroke="#c6c6c6" stroke-width="1.200"/>
<!-- screen mode -->
<rect x="11.500" y="534.500" width="11" height="8" fill="#777" stroke="#c6c6c6" stroke-width="1.200"/><rect x="8.500" y="538.500" width="11" height="7" fill="#535353" stroke="#c6c6c6" stroke-width="1.200"/>
<!-- corner triangles -->
<g fill="#e4e4e4">
<path d="M26 62v3h-3zM26 84v3h-3zM26 106v3h-3zM26 127v3h-3zM26 149v3h-3zM26 173v3h-3zM26 195v3h-3zM26 217v3h-3zM26 238v3h-3zM26 260v3h-3zM26 282v3h-3zM26 303v3h-3zM26 325v3h-3zM26 349v3h-3zM26 371v3h-3zM26 392v3h-3zM26 414v3h-3zM26 438v3h-3zM26 545v3h-3z"/></g>
</svg></div>
<div id="rp" class="a">
<!-- header -->
<div class="phead" style="top:0;height:11px"></div>
<svg style="left:168px;top:2px" width="24" height="8"><path d="M5 1L2 4l3 3zM9 1L6 4l3 3z" fill="#e8e8e8"/><path d="M16 1.500l5 5M21 1.500l-5 5" stroke="#e8e8e8" stroke-width="1.400"/></svg>
<!-- Color tabs -->
<div class="phead" style="top:11px;height:14px;border-top:1px solid #2c2c2c"><div class="ptab on" style="left:0;width:36px">Color</div></div>
<svg style="left:178px;top:15px" width="14" height="8"><path d="M0 1.500h5L2.500 4.500z" fill="#d8d8d8"/><path d="M6 1.500h7M6 4h7M6 6.500h7" stroke="#c8c8c8" stroke-width="1"/></svg>
<!-- color body: panel y = abs-75 -->
<div class="a" style="left:13px;top:43px;width:15px;height:15px;background:#fff"></div>
<div class="a" style="left:5px;top:35px;width:15px;height:15px;background:#000;border:1px solid #fff;outline:1px solid #6a6a6a"></div>
<div class="t" style="left:34px;top:35px;font-size:10px">H</div>
<div class="t" style="left:34px;top:56px;font-size:10px">S</div>
<div class="t" style="left:34px;top:77px;font-size:10px">B</div>
<div class="a" style="left:49px;top:36px;width:68px;height:5px;border:1px solid #777;background:linear-gradient(90deg,#f00,#ff0 17%,#0f0 33%,#0ff 50%,#00f 67%,#f0f 83%,#f00)"></div>
<div class="a" style="left:49px;top:57px;width:68px;height:5px;border:1px solid #777;background:#000"></div>
<div class="a" style="left:49px;top:78px;width:68px;height:5px;border:1px solid #777;background:linear-gradient(90deg,#000,#fff)"></div>
<svg style="left:44px;top:41px" width="12" height="50"><g fill="#b0b0b0" stroke="#7a7a7a" stroke-width=".6"><path d="M5.500 1l3.500 3.500v2h-7v-2z"/><path d="M5.500 22l3.500 3.500v2h-7v-2z"/><path d="M5.500 43l3.500 3.500v2h-7v-2z"/></g></svg>
<div class="inp" style="left:121px;top:34px;width:42px;height:16px">0</div>
<div class="inp" style="left:121px;top:55px;width:42px;height:16px">0</div>
<div class="inp" style="left:121px;top:76px;width:42px;height:16px">0</div>
<div class="t" style="left:167px;top:33px;font-size:10px">°</div>
<div class="t" style="left:165px;top:56px;font-size:10px">%</div>
<div class="t" style="left:165px;top:77px;font-size:10px">%</div>
<div class="a" style="left:5px;top:102px;width:166px;height:12px;background:linear-gradient(90deg,#f00,#ff0 17%,#0f0 33%,#0ff 50%,#00f 67%,#f0f 83%,#f00 96%)"></div>
<div class="a" style="left:5px;top:102px;width:166px;height:12px;background:linear-gradient(180deg,#fff,rgba(255,255,255,0) 45%,rgba(0,0,0,0) 55%,#000)"></div>
<div class="a" style="left:164px;top:102px;width:7px;height:6px;background:#fff"></div>
<div class="a" style="left:164px;top:108px;width:7px;height:6px;background:#000"></div>
<!-- History -->
<div class="phead" style="top:120px;height:15px;border-top:1px solid #2c2c2c"><div class="ptab on" style="left:0;width:42px">History</div><div class="ptab" style="left:44px;color:#9a9a9a;letter-spacing:-0.55px">Brush Presets</div><div class="ptab" style="left:110px">Navigator</div></div>
<svg style="left:178px;top:125px" width="14" height="8"><path d="M0 1.500h5L2.500 4.500z" fill="#d8d8d8"/><path d="M6 1.500h7M6 4h7M6 6.500h7" stroke="#c8c8c8" stroke-width="1"/></svg>
<div class="a" style="left:0;top:135px;width:193px;height:180px;overflow:hidden">
<div class="hrow" style="top:-11px"></div>
<div class="hrow" style="top:8px"><b></b><span>Brush Tool</span></div>
<div class="hrow" style="top:27px"><b></b><span>Brush Tool</span></div>
<div class="hrow" style="top:46px"><b></b><span>Brush Tool</span></div>
<div class="hrow" style="top:65px"><b></b><span>Brush Tool</span></div>
<div class="hrow" style="top:85px"><b></b><span>Brush Tool</span></div>
<div class="hrow" style="top:104px"><b></b><span>Brush Tool</span></div>
<div class="hrow" style="top:123px"><b></b><span>Brush Tool</span></div>
<div class="hrow" style="top:142px"><b></b><span>Brush Tool</span></div>
<div class="hrow" style="top:161px;background:#596679;height:19px"><b style="background:#5e6b7e;border-color:#4c5666"></b><span>Brush Tool</span></div>
<svg style="left:24px;top:0" width="20" height="180"><defs><g id="hb"><path d="M14 1L7 9" stroke="#dcdcdc" stroke-width="1.500" stroke-linecap="round"/><path d="M5 8c1.500-.8 3 .3 3.200 1.600c-1 2-3.800 2.400-6.200 2.200c1.500-.8 2-2.200 3-3.800z" fill="#dcdcdc"/></g></defs><use href="#hb" y="-8"/><use href="#hb" y="11"/><use href="#hb" y="30"/><use href="#hb" y="49"/><use href="#hb" y="68"/><use href="#hb" y="88"/><use href="#hb" y="107"/><use href="#hb" y="126"/><use href="#hb" y="145"/><use href="#hb" y="164"/></svg>
<div class="a" style="left:180px;top:0;width:13px;height:180px;background:#474747;border-left:1px solid #3a3a3a"></div>
<div class="a" style="left:182px;top:104px;width:9px;height:56px;background:#6a6a6a;border-radius:4px"></div>
<svg style="left:182px;top:0" width="10" height="180"><path d="M2 9h6L5 5.500zM2 169h6l-3 3.500z" fill="#e0e0e0"/></svg>
</div>
<!-- history footer -->
<div class="a" style="left:0;top:315px;width:193px;height:18px;background:#535353;border-top:1px solid #3e3e3e"></div>
<svg style="left:104px;top:318px" width="70" height="14"><g fill="#d0d0d0"><path d="M3 5h4v-3h2v3h3v2h-3v3h-2v-3h-4z"/><rect x="10" y="2" width="6" height="9" fill="none" stroke="#d0d0d0" stroke-width="1.200"/><path d="M29 4h3l1-1.500h4l1 1.500h3v8h-12z"/><circle cx="35" cy="8" r="2.300" fill="#535353"/><path d="M54 4h10v1.500h-10zM57 2.500h4v1.500h-4zM55 6h8l-.7 6.500h-6.600z"/></g></svg>
<!-- Adjustments tabs -->
<div class="phead" style="top:334px;height:15px;border-top:1px solid #2c2c2c"><div class="ptab" style="left:0;letter-spacing:-0.6px">Chanr</div><div class="ptab" style="left:31px;letter-spacing:-0.6px">Paths</div><div class="ptab" style="left:61px;letter-spacing:-0.85px">Styles</div><div class="ptab on" style="left:91px;width:68px">Adjustments</div></div>
<svg style="left:178px;top:339px" width="14" height="8"><path d="M0 1.500h5L2.500 4.500z" fill="#d8d8d8"/><path d="M6 1.500h7M6 4h7M6 6.500h7" stroke="#c8c8c8" stroke-width="1"/></svg>
<div class="t" style="left:7px;top:353px;font-size:10.5px;font-weight:bold;color:#f4f4f4;letter-spacing:-0.25px">Add an adjustment</div>
<svg style="left:0;top:370px" width="193" height="70" viewBox="0 0 193 70">
<g fill="none" stroke="#d4d4d4" stroke-width="1.100">
<!-- row1 y=10 : x=46,67,87,107,127 -->
<circle cx="46" cy="10" r="2.800"/><path d="M46 3.500v2M46 14.500v2M39.500 10h2M50.500 10h2M41.500 5.500l1.400 1.400M49.100 13.100l1.400 1.400M41.500 14.500l1.400-1.400M49.100 6.900l1.400-1.400"/>
<path d="M60.500 14.500h13v-2h-13z" fill="#bdbdbd"/><path d="M61.500 12v-4M63.500 12v-6M65.500 12v-5M67.500 12v-8M69.500 12v-5M71.500 12v-7"/>
<rect x="80.500" y="4.500" width="13" height="11"/><path d="M81 15c5 0 6-10 12-10M80.500 8h13M80.500 12h13M85 4.500v11M89 4.500v11" stroke-width=".8"/>
<rect x="100.500" y="4.500" width="13" height="11"/><path d="M100.500 15.500l13-11z" fill="#d4d4d4"/><path d="M103 7.500h3M104.500 6v3M108 12.500h3" stroke-width="1"/>
<path d="M120.500 4.500h13l-6.500 11.500z" fill="#8a8a8a"/>
<!-- row2 y=33 : x=37,57,77,97,116,137 -->
<rect x="30.500" y="27.500" width="13" height="11" fill="#8a8a8a"/><path d="M31 30h12" stroke-width="2"/><path d="M33.500 27.500v11M37.500 27.500v11M40.500 27.500v11" stroke-width=".7"/>
<path d="M57 27v11M51 30h12M53 38.500h8"/><path d="M50 35.500h5l-2.500-5zM59 35.500h5l-2.500-5z" fill="#d4d4d4" stroke-width=".6"/>
<rect x="70.500" y="27.500" width="13" height="11"/><rect x="77" y="28" width="6" height="10" fill="#cfcfcf" stroke="none"/>
<path d="M90.500 29.500h3l1-1.500h3l1 1.500h3v7h-11z" fill="#bdbdbd"/><circle cx="100" cy="36" r="3.300" fill="#535353"/>
<circle cx="116" cy="30.500" r="3.200" fill="#d4d4d4"/><circle cx="113" cy="35.500" r="3.200" fill="#d4d4d4"/><circle cx="119" cy="35.500" r="3.200" fill="#d4d4d4"/>
<rect x="130.500" y="27.500" width="13" height="11" fill="#a0a0a0"/><path d="M130.500 31h13M130.500 35h13M135 27.500v11M139 27.500v11" stroke="#535353" stroke-width="1"/>
<!-- row3 y=55 : x=47,67,87,107,127 -->
<rect x="40.500" y="49.500" width="13" height="11" fill="#8a8a8a"/><path d="M43 58c2-6 6-1 8-6" stroke-width="1.400"/>
<rect x="60.500" y="49.500" width="13" height="11" fill="#8a8a8a"/><path d="M61 60l12-10" stroke-width="3" stroke="#bdbdbd"/>
<rect x="80.500" y="49.500" width="13" height="11" fill="#8a8a8a"/><path d="M81 58l3-2l2 1l3-3l2 1l2-2" stroke-width="1.600"/>
<rect x="100.500" y="49.500" width="13" height="11" fill="#8a8a8a"/><path d="M100.500 49.500l13 11M113.500 49.500l-13 11" stroke-width=".9"/>
<rect x="120.500" y="49.500" width="13" height="11"/>
</g>
<defs><linearGradient id="gr1" x1="0" x2="1"><stop offset="0" stop-color="#555"/><stop offset="1" stop-color="#d8d8d8"/></linearGradient></defs>
<rect x="121" y="50" width="12" height="10" fill="url(#gr1)"/>
</svg>
<!-- Layers -->
<div class="phead" style="top:443px;height:16px;border-top:1px solid #2c2c2c"><div class="ptab on" style="left:0;width:38px;height:15px">Layers</div></div>
<svg style="left:178px;top:449px" width="14" height="8"><path d="M0 1.500h5L2.500 4.500z" fill="#d8d8d8"/><path d="M6 1.500h7M6 4h7M6 6.500h7" stroke="#c8c8c8" stroke-width="1"/></svg>
<div class="dd" style="left:4px;top:462px;width:63px">&nbsp;&nbsp;&nbsp;&nbsp;Kind<svg style="left:5px;top:3px" width="10" height="10"><circle cx="5.500" cy="4" r="2.800" fill="none" stroke="#e0e0e0" stroke-width="1.100"/><path d="M3.500 6l-2.500 3" stroke="#e0e0e0" stroke-width="1.200"/></svg><svg style="left:53px;top:3px" width="6" height="10"><path d="M0 4l3-3.500L6 4zM0 6l3 3.500L6 6z" fill="#f0f0f0"/></svg></div>
<svg style="left:74px;top:462px" width="119" height="18" viewBox="0 0 119 18"><g fill="none" stroke="#d4d4d4" stroke-width="1.100"><rect x="3.500" y="3.500" width="11" height="9"/><path d="M5 11l2.500-3l2 2l1.500-1.500l2 2.500z" fill="#d4d4d4" stroke="none"/><circle cx="29" cy="8" r="4.300"/><path d="M29 3.700a4.300 4.300 0 0 1 0 8.600a6 6 0 0 0 0-8.600z" fill="#d4d4d4"/><rect x="64.500" y="4.500" width="8" height="7"/><path d="M63 3h3v3h-3zM71 3h3v3h-3zM63 10h3v3h-3zM71 10h3v3h-3z" fill="#d4d4d4" stroke="none"/><rect x="86.500" y="3.500" width="6" height="7"/><rect x="83" y="8" width="6" height="5" fill="#d4d4d4" stroke="none"/></g><text x="44" y="13" font-family="Liberation Serif,serif" font-size="13" fill="#d8d8d8">T</text><rect x="106" y="1" width="7" height="8" fill="#7a7a7a"/><rect x="106" y="9" width="7" height="8" fill="#3e3e3e"/></svg>
<div class="a" style="left:0;top:481px;width:193px;height:1px;background:#484848"></div>
<div class="dd" style="left:4px;top:485px;width:91px">&nbsp;Normal<svg style="left:81px;top:3px" width="6" height="10"><path d="M0 4l3-3.500L6 4zM0 6l3 3.500L6 6z" fill="#f0f0f0"/></svg></div>
<div class="t" style="left:100px;top:487px;font-size:10px;letter-spacing:-0.2px;color:#f0f0f0">Opacity:</div>
<div class="inp" style="left:140px;top:485px;width:32px;height:16px;font-size:10px;letter-spacing:-0.3px;padding:3px 0 0 4px;background:#3a3a3a">100%</div>
<div class="dd" style="left:172px;top:485px;width:17px;border-radius:0 2px 2px 0"><svg style="left:5px;top:6px" width="6" height="4"><path d="M0 0h6L3 3.500z" fill="#f0f0f0"/></svg></div>
<div class="a" style="left:0;top:504px;width:193px;height:1px;background:#484848"></div>
<div class="t" style="left:5px;top:510px;font-size:10px;letter-spacing:-0.2px;color:#f0f0f0">Lock:</div>
<svg style="left:32px;top:508px" width="70" height="18" viewBox="0 0 70 18"><g fill="#d4d4d4"><rect x="2.500" y="4.500" width="9" height="9" fill="none" stroke="#d4d4d4"/><path d="M3 5h3v3h-3zM8 5h3v3h-3zM5.500 7.500h3v3h-3zM3 10h3v3h-3zM8 10h3v3h-3z"/><path d="M32 3L26 10" stroke="#d4d4d4" stroke-width="1.400" stroke-linecap="round"/><path d="M24 9c1.500-.8 3 .3 3.200 1.600c-1 2-3.800 2.400-6.200 2.200c1.500-.8 2-2.200 3-3.800z"/><path d="M44 3.500v11M38.500 9h11" stroke="#d4d4d4" stroke-width="1.100"/><path d="M44 2l2 2.500h-4zM44 16l2-2.500h-4zM37 9l2.500-2v4zM51 9l-2.500-2v4z"/><rect x="58" y="8" width="9" height="7"/><path d="M60 8v-2.500a2.500 2.500 0 0 1 5 0v2.500" fill="none" stroke="#d4d4d4" stroke-width="1.300"/><rect x="61.700" y="10" width="1.600" height="3" fill="#535353"/></g></svg>
<div class="t" style="left:120px;top:510px;font-size:10px;letter-spacing:-0.2px;color:#f0f0f0">Fill:</div>
<div class="inp" style="left:140px;top:508px;width:32px;height:16px;font-size:10px;letter-spacing:-0.3px;padding:3px 0 0 4px;background:#3a3a3a">100%</div>
<div class="dd" style="left:172px;top:508px;width:17px;border-radius:0 2px 2px 0"><svg style="left:5px;top:6px" width="6" height="4"><path d="M0 0h6L3 3.500z" fill="#f0f0f0"/></svg></div>
<!-- layer list -->
<div class="a" style="left:0;top:528px;width:193px;height:238px;background:#454545;border-top:1px solid #3a3a3a"></div>
<div class="lrow" style="top:529px;background:#535353"><div class="eye"><b class="a" style="left:6px;top:11px;width:10px;height:10px;border:1px solid #474747;background:#575757"></b></div><div class="th chk"></div><span>Layer 3</span></div>
<div class="lrow" style="top:562px;background:#596679;height:33px"><div class="eye" style="background:#535353"></div><div class="th chk" style="outline:1px solid #e8e8e8;outline-offset:1px"><svg style="left:0;top:0" width="25" height="26" viewBox="0 0 25 26" fill="none" stroke="#9a9a9a" stroke-width=".7"><path d="M5 4c1-2 3-3 4-3M6 6l3 1 1 3-2 4-2 3M10 7l4-2 2 1M14 2l-2 5M17 6l3-2M17 9c2 0 3 2 3 4s-2 4-1 6M8 14l3 2-2 4 4 2 5-3M5 19l5 1 3 3M3 25l3-6M17 20l2 5"/></svg></div><span>Layer 2</span></div>
<div class="lrow" style="top:595px;background:#535353;height:32px"><div class="eye"><b class="a" style="left:6px;top:11px;width:10px;height:10px;border:1px solid #474747;background:#575757"></b></div><div class="th chk"></div><span>Layer 1</span></div>
<div class="lrow" style="top:627px;background:#535353"><div class="eye"></div><div class="th"></div><span style="font-style:italic">Background</span></div>
<svg style="left:5px;top:569px" width="14" height="90"><g fill="none" stroke="#d8d8d8" stroke-width="1.100"><path d="M1.500 9c3-4.500 8-4.500 11 0c-3 4-8 4-11 0z"/><circle cx="7" cy="8.800" r="1.800" fill="#d8d8d8"/><path d="M1.500 74c3-4.500 8-4.500 11 0c-3 4-8 4-11 0z"/><circle cx="7" cy="73.800" r="1.800" fill="#d8d8d8"/></g></svg>
<svg style="left:156px;top:637px" width="10" height="12"><rect x="1.500" y="5.500" width="7" height="5.500" fill="none" stroke="#d0d0d0" stroke-width="1.100"/><path d="M3 5.500v-2a2 2 0 0 1 4 0v2" fill="none" stroke="#d0d0d0" stroke-width="1.100"/><rect x="4.400" y="7.300" width="1.200" height="2" fill="#d0d0d0"/></svg>
<div class="a" style="left:179px;top:529px;width:13px;height:237px;background:#404040;border-left:1px solid #383838"></div>
<!-- layers footer -->
<div class="a" style="left:0;top:766px;width:193px;height:17px;background:#535353;border-top:1px solid #3c3c3c"></div>
<svg style="left:20px;top:768px" width="160" height="14" viewBox="0 0 160 14"><g fill="#cfcfcf"><rect x="2.500" y="4.500" width="10" height="4" rx="2" fill="none" stroke="#8e8e8e" stroke-width="1.200"/><text x="25" y="11" font-family="Liberation Serif,serif" font-style="italic" font-size="12" fill="#d8d8d8">fx</text><path d="M37 10.500h3l-1.500 2z"/><rect x="48" y="2.500" width="11" height="9"/><circle cx="53.500" cy="7" r="2.800" fill="#535353"/><circle cx="76" cy="7" r="4.500" fill="none" stroke="#cfcfcf" stroke-width="1.200"/><path d="M72.800 10.200a4.500 4.500 0 0 1 6.400-6.400z"/><path d="M82 10.500h3l-1.500 2z"/><path d="M93 2.500h4l1 1.500h6v7.500h-11z"/><path d="M116 2.500h9v9h-3v-6h-6z"/><rect x="115.500" y="6.500" width="5" height="5" fill="none" stroke="#cfcfcf"/><path d="M138 4h10v1.500h-10zM141 2.500h4v1.500h-4zM139 6h8l-.7 6.500h-6.600z"/></g></svg>
<div class="a" style="left:0;top:783px;width:193px;height:6px;background:#4e4e4e;border-top:1px solid #3a3a3a"></div>
<div class="a" style="left:88px;top:786px;width:16px;height:2px;background:repeating-linear-gradient(90deg,#2c2c2c 0 1px,transparent 1px 2px)"></div>
</div>
</body></html>
